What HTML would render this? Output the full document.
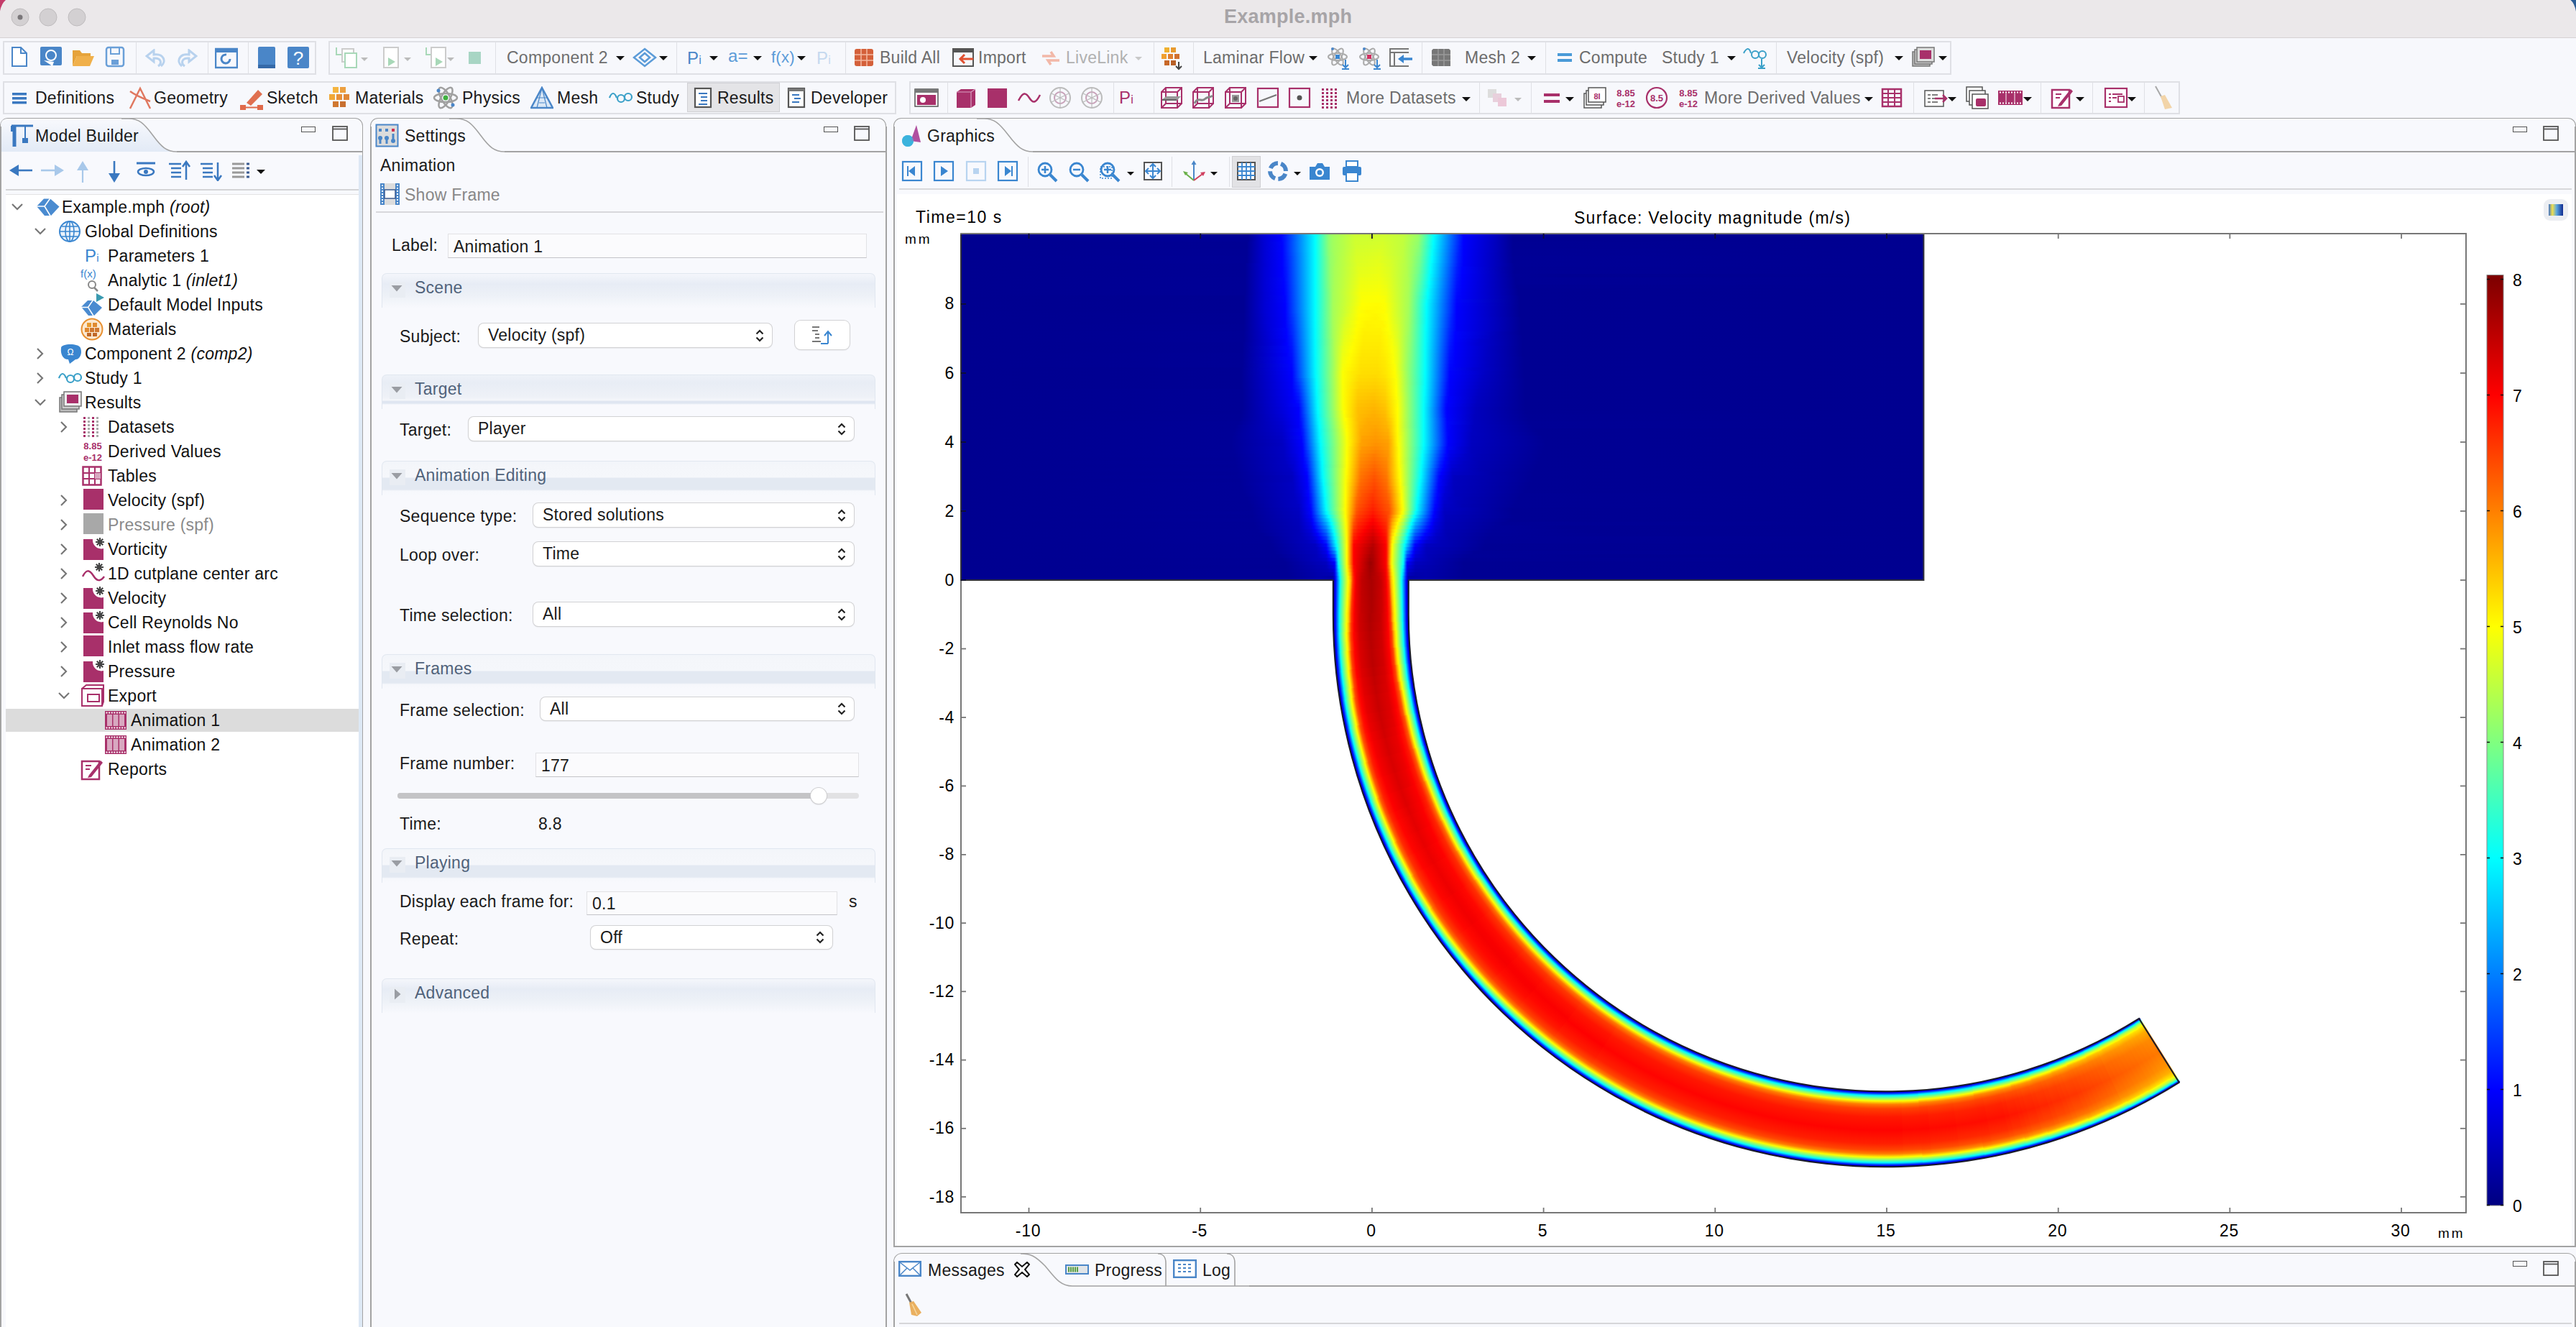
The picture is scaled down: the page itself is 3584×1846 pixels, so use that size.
<!DOCTYPE html><html><head><meta charset="utf-8"><style>*{margin:0;padding:0}
html,body{width:3584px;height:1846px;overflow:hidden;background:#f7f8fc;}
body{position:relative;font-family:"Liberation Sans",sans-serif;}
.a{position:absolute;display:block}
.t{position:absolute;white-space:nowrap;font-family:"Liberation Sans",sans-serif;color:#1a1a1a;letter-spacing:0.25px}
i{font-style:italic}
</style></head><body>
<div class="a" style="left:0px;top:0px;width:3584px;height:52px;background:#ebe8ea;"></div>
<div class="a" style="left:0px;top:52px;width:3584px;height:1px;background:#d5d2d4;"></div>
<svg class="a" style="left:0px;top:0px" width="20" height="20" viewBox="0 0 20 20"><path d="M0 0 L8 0 Q2 5 0 15.5 Z" fill="#c43c6a"/></svg>
<svg class="a" style="left:3564px;top:0px" width="20" height="20" viewBox="0 0 20 20"><path d="M20 0 L12.4 0 Q18 4.5 20 16 Z" fill="#2c5d95"/></svg>
<svg class="a" style="left:15px;top:11px" width="26" height="26" viewBox="0 0 26 26"><circle cx="13" cy="13" r="12" fill="#d3d0d2" stroke="#bfbcbe" stroke-width="1"/><circle cx="13" cy="13" r="3.5" fill="#7a777a"/></svg>
<svg class="a" style="left:54px;top:11px" width="26" height="26" viewBox="0 0 26 26"><circle cx="13" cy="13" r="12" fill="#d3d0d2" stroke="#bfbcbe" stroke-width="1"/></svg>
<svg class="a" style="left:94px;top:11px" width="26" height="26" viewBox="0 0 26 26"><circle cx="13" cy="13" r="12" fill="#d3d0d2" stroke="#bfbcbe" stroke-width="1"/></svg>
<div class="t" style="left:1703px;top:9.5px;font-size:27px;line-height:27px;color:#a7a4a7;font-weight:700;">Example.mph</div>
<div class="a" style="left:4px;top:57px;width:436px;height:47px;border:2px solid #dfe0e5;box-sizing:border-box;"></div>
<div class="a" style="left:457px;top:57px;width:2258px;height:47px;border:2px solid #dfe0e5;box-sizing:border-box;"></div>
<div class="a" style="left:189px;top:59px;width:1px;height:43px;background:#dfe0e5;"></div>
<div class="a" style="left:289px;top:59px;width:1px;height:43px;background:#dfe0e5;"></div>
<div class="a" style="left:345px;top:59px;width:1px;height:43px;background:#dfe0e5;"></div>
<div class="a" style="left:689px;top:59px;width:1px;height:43px;background:#dfe0e5;"></div>
<div class="a" style="left:941px;top:59px;width:1px;height:43px;background:#dfe0e5;"></div>
<div class="a" style="left:1176px;top:59px;width:1px;height:43px;background:#dfe0e5;"></div>
<div class="a" style="left:1605px;top:59px;width:1px;height:43px;background:#dfe0e5;"></div>
<div class="a" style="left:1660px;top:59px;width:1px;height:43px;background:#dfe0e5;"></div>
<div class="a" style="left:1978px;top:59px;width:1px;height:43px;background:#dfe0e5;"></div>
<div class="a" style="left:2150px;top:59px;width:1px;height:43px;background:#dfe0e5;"></div>
<div class="a" style="left:2471px;top:59px;width:1px;height:43px;background:#dfe0e5;"></div>
<svg class="a" style="left:14px;top:64px" width="26" height="30" viewBox="0 0 26 30"><path d="M3 2 H15 L23 10 V28 H3 Z" fill="#fff" stroke="#4a86c8" stroke-width="2"/><path d="M15 2 V10 H23" fill="none" stroke="#4a86c8" stroke-width="2"/></svg>
<svg class="a" style="left:55px;top:64px" width="32" height="30" viewBox="0 0 32 30"><rect x="1" y="1" width="30" height="26" rx="2" fill="#4a86c8"/><circle cx="16" cy="13" r="7" fill="none" stroke="#fff" stroke-width="2"/><path d="M6 20 L18 28 L20 22" fill="#fff"/></svg>
<svg class="a" style="left:100px;top:66px" width="32" height="28" viewBox="0 0 32 28"><path d="M1 4 H11 L14 8 H26 V12 H7 L1 26 Z" fill="#e6a33a"/><path d="M7 12 H31 L25 26 H1 Z" fill="#f0b04a"/></svg>
<svg class="a" style="left:146px;top:64px" width="28" height="30" viewBox="0 0 28 30"><rect x="2" y="2" width="24" height="26" rx="3" fill="none" stroke="#6a9fd8" stroke-width="2.5"/><rect x="8" y="2" width="12" height="9" fill="none" stroke="#6a9fd8" stroke-width="2"/><rect x="9" y="19" width="10" height="7" fill="#6a9fd8"/></svg>
<svg class="a" style="left:202px;top:68px" width="30" height="26" viewBox="0 0 30 26"><path d="M22 24 C30 18 26 6 12 8 L12 2 L2 10 L12 18 L12 13 C22 12 24 20 18 24" fill="none" stroke="#b8d2ee" stroke-width="3"/></svg>
<svg class="a" style="left:245px;top:68px" width="30" height="26" viewBox="0 0 30 26"><path d="M8 24 C0 18 4 6 18 8 L18 2 L28 10 L18 18 L18 13 C8 12 6 20 12 24" fill="none" stroke="#b8d2ee" stroke-width="3"/></svg>
<svg class="a" style="left:299px;top:66px" width="32" height="30" viewBox="0 0 32 30"><rect x="1" y="2" width="30" height="26" fill="none" stroke="#4a86c8" stroke-width="2.5"/><rect x="1" y="2" width="30" height="5" fill="#4a86c8"/><path d="M21 16 A6 6 0 1 1 16 10" fill="none" stroke="#4a86c8" stroke-width="3"/></svg>
<svg class="a" style="left:357px;top:64px" width="28" height="32" viewBox="0 0 28 32"><rect x="2" y="1" width="24" height="30" rx="2" fill="#4a86c8"/><rect x="2" y="26" width="24" height="5" fill="#3569a8"/></svg>
<svg class="a" style="left:399px;top:64px" width="32" height="32" viewBox="0 0 32 32"><rect x="1" y="1" width="30" height="30" rx="2" fill="#4a86c8"/><text x="16" y="26" font-size="26" font-family="Liberation Sans" fill="#fff" text-anchor="middle">?</text></svg>
<svg class="a" style="left:464px;top:64px" width="36" height="32" viewBox="0 0 36 32"><path d="M4 2 V12 H12" fill="none" stroke="#a8d8b8" stroke-width="2"/><rect x="12" y="4" width="16" height="18" fill="#fff" stroke="#ccc" stroke-width="2"/><rect x="16" y="10" width="16" height="20" fill="#fff" stroke="#a8d8b8" stroke-width="2"/></svg>
<svg class="a" style="left:502px;top:78.5px" width="10" height="7" viewBox="0 0 10 7"><path d="M0 1 L10 1 L5 6 Z" fill="#bbb"/></svg>
<svg class="a" style="left:532px;top:64px" width="26" height="32" viewBox="0 0 26 32"><rect x="2" y="2" width="20" height="28" fill="#fff" stroke="#ccc" stroke-width="2"/><path d="M8 16 L18 22 L8 28 Z" fill="#a8d8b8"/></svg>
<svg class="a" style="left:562px;top:78.5px" width="10" height="7" viewBox="0 0 10 7"><path d="M0 1 L10 1 L5 6 Z" fill="#bbb"/></svg>
<svg class="a" style="left:590px;top:64px" width="34" height="32" viewBox="0 0 34 32"><path d="M3 2 V12 H10" fill="none" stroke="#a8d8b8" stroke-width="2"/><rect x="10" y="2" width="20" height="28" fill="#fff" stroke="#ccc" stroke-width="2"/><path d="M16 16 L26 22 L16 28 Z" fill="#a8d8b8"/></svg>
<svg class="a" style="left:622px;top:78.5px" width="10" height="7" viewBox="0 0 10 7"><path d="M0 1 L10 1 L5 6 Z" fill="#bbb"/></svg>
<div class="a" style="left:652px;top:72px;width:17px;height:17px;background:#a8d5c4;"></div>
<div class="t" style="left:705px;top:68.5px;font-size:23px;line-height:23px;color:#6e6e6e;">Component 2</div>
<svg class="a" style="left:857px;top:77.0px" width="12" height="8" viewBox="0 0 12 8"><path d="M0 1 L12 1 L6 7 Z" fill="#111"/></svg>
<svg class="a" style="left:880px;top:66px" width="34" height="28" viewBox="0 0 34 28"><path d="M17 2 L32 14 L17 26 L2 14 Z M10 14 L17 8 L24 14 L17 20 Z" fill="none" stroke="#5b9bd8" stroke-width="2.5"/></svg>
<svg class="a" style="left:917px;top:77.0px" width="12" height="8" viewBox="0 0 12 8"><path d="M0 1 L12 1 L6 7 Z" fill="#111"/></svg>
<div class="t" style="left:956px;top:69.0px;font-size:24px;line-height:24px;color:#4a86c8;">P<span style="font-size:16px">i</span></div>
<svg class="a" style="left:987px;top:77.0px" width="12" height="8" viewBox="0 0 12 8"><path d="M0 1 L12 1 L6 7 Z" fill="#111"/></svg>
<div class="t" style="left:1013px;top:66.0px;font-size:24px;line-height:24px;color:#5b9bd8;">a=</div>
<svg class="a" style="left:1048px;top:77.0px" width="12" height="8" viewBox="0 0 12 8"><path d="M0 1 L12 1 L6 7 Z" fill="#111"/></svg>
<div class="t" style="left:1073px;top:69.0px;font-size:22px;line-height:22px;color:#5b9bd8;">f(x)</div>
<svg class="a" style="left:1109px;top:77.0px" width="12" height="8" viewBox="0 0 12 8"><path d="M0 1 L12 1 L6 7 Z" fill="#111"/></svg>
<div class="t" style="left:1136px;top:69.0px;font-size:24px;line-height:24px;color:#c5d9ef;">P<span style="font-size:16px">i</span></div>
<svg class="a" style="left:1188px;top:66px" width="28" height="28" viewBox="0 0 28 28"><rect x="1" y="2" width="26" height="24" rx="3" fill="#d4603a"/><path d="M1 10 H27 M1 18 H27 M10 2 V26 M18 2 V26" stroke="#f4b8a0" stroke-width="1.5"/></svg>
<div class="t" style="left:1224px;top:68.5px;font-size:23px;line-height:23px;color:#6c6c6c;">Build All</div>
<svg class="a" style="left:1324px;top:66px" width="32" height="28" viewBox="0 0 32 28"><rect x="2" y="2" width="28" height="24" fill="none" stroke="#555" stroke-width="2"/><rect x="2" y="2" width="28" height="5" fill="#555"/><path d="M30 16 H12 M18 10 L12 16 L18 22" fill="none" stroke="#e05030" stroke-width="3"/></svg>
<div class="t" style="left:1361px;top:68.5px;font-size:23px;line-height:23px;color:#6c6c6c;">Import</div>
<svg class="a" style="left:1446px;top:68px" width="32" height="26" viewBox="0 0 32 26"><path d="M4 10 H20 L16 4 M28 16 H12 L16 22" fill="none" stroke="#f2b8a8" stroke-width="3.5"/></svg>
<div class="t" style="left:1483px;top:68.5px;font-size:23px;line-height:23px;color:#b0b0b0;">LiveLink</div>
<svg class="a" style="left:1579px;top:77.5px" width="10" height="7" viewBox="0 0 10 7"><path d="M0 1 L10 1 L5 6 Z" fill="#c8c8c8"/></svg>
<svg class="a" style="left:1614px;top:64px" width="32" height="34" viewBox="0 0 32 34"><rect x="6" y="2" width="7" height="7" fill="#f0b030"/><rect x="15" y="2" width="7" height="7" fill="#e89a30"/><rect x="2" y="11" width="7" height="7" fill="#f0a030"/><rect x="11" y="11" width="7" height="7" fill="#e08030"/><rect x="20" y="11" width="7" height="7" fill="#d07030"/><rect x="6" y="20" width="7" height="7" fill="#c86828"/><rect x="15" y="20" width="7" height="7" fill="#b86028"/><path d="M26 22 V32 M22 28 L26 32 L30 28" stroke="#444" stroke-width="2" fill="none"/></svg>
<div class="t" style="left:1674px;top:68.5px;font-size:23px;line-height:23px;color:#6c6c6c;">Laminar Flow</div>
<svg class="a" style="left:1821px;top:77.0px" width="12" height="8" viewBox="0 0 12 8"><path d="M0 1 L12 1 L6 7 Z" fill="#111"/></svg>
<svg class="a" style="left:1846px;top:64px" width="36" height="34" viewBox="0 0 36 34"><ellipse cx="15" cy="15" rx="13" ry="5" fill="none" stroke="#aaa" stroke-width="2"/><ellipse cx="15" cy="15" rx="13" ry="5" transform="rotate(60 15 15)" fill="none" stroke="#aaa" stroke-width="2"/><ellipse cx="15" cy="15" rx="13" ry="5" transform="rotate(-60 15 15)" fill="none" stroke="#aaa" stroke-width="2"/><rect x="12" y="12" width="6" height="6" fill="#3a86d0"/><circle cx="8" cy="4" r="2" fill="#4a86c8"/><path d="M26 19 V30 M22 26 L26 30 L30 26 M21 32 H31" stroke="#3a86d0" stroke-width="2" fill="none"/></svg>
<svg class="a" style="left:1890px;top:64px" width="36" height="34" viewBox="0 0 36 34"><ellipse cx="15" cy="15" rx="13" ry="5" fill="none" stroke="#aaa" stroke-width="2"/><ellipse cx="15" cy="15" rx="13" ry="5" transform="rotate(60 15 15)" fill="none" stroke="#aaa" stroke-width="2"/><ellipse cx="15" cy="15" rx="13" ry="5" transform="rotate(-60 15 15)" fill="none" stroke="#aaa" stroke-width="2"/><rect x="12" y="12" width="6" height="6" fill="#d03060"/><circle cx="8" cy="4" r="2" fill="#4a86c8"/><path d="M26 19 V30 M22 26 L26 30 L30 26 M21 32 H31" stroke="#3a86d0" stroke-width="2" fill="none"/></svg>
<svg class="a" style="left:1932px;top:66px" width="34" height="28" viewBox="0 0 34 28"><path d="M28 2 H2 V26 H28 M2 7 H28 M8 7 V26" fill="none" stroke="#777" stroke-width="2"/><path d="M33 16 H18" stroke="#3a86d0" stroke-width="3.5"/><path d="M13 16 L21 10 V22 Z" fill="#3a86d0"/></svg>
<svg class="a" style="left:1990px;top:66px" width="30" height="28" viewBox="0 0 30 28"><path d="M4 2 H26 L28 4 V26 H4 L2 24 V4 Z" fill="#777"/><path d="M2 10 H28 M2 18 H28 M11 2 V26 M19 2 V26" stroke="#9a9a9a" stroke-width="1.5"/></svg>
<div class="t" style="left:2038px;top:68.5px;font-size:23px;line-height:23px;color:#6c6c6c;">Mesh 2</div>
<svg class="a" style="left:2125px;top:77.0px" width="12" height="8" viewBox="0 0 12 8"><path d="M0 1 L12 1 L6 7 Z" fill="#111"/></svg>
<svg class="a" style="left:2166px;top:72px" width="22" height="16" viewBox="0 0 22 16"><rect x="1" y="2" width="20" height="4" fill="#4a9ad8"/><rect x="1" y="10" width="20" height="4" fill="#4a9ad8"/></svg>
<div class="t" style="left:2197px;top:68.5px;font-size:23px;line-height:23px;color:#6c6c6c;">Compute</div>
<div class="t" style="left:2312px;top:68.5px;font-size:23px;line-height:23px;color:#6c6c6c;">Study 1</div>
<svg class="a" style="left:2403px;top:77.0px" width="12" height="8" viewBox="0 0 12 8"><path d="M0 1 L12 1 L6 7 Z" fill="#111"/></svg>
<svg class="a" style="left:2424px;top:64px" width="36" height="34" viewBox="0 0 36 34"><path d="M2 10 C6 2 10 2 12 10" fill="none" stroke="#3aa0c8" stroke-width="2"/><circle cx="18" cy="12" r="5" fill="none" stroke="#3aa0c8" stroke-width="2"/><circle cx="28" cy="12" r="5" fill="none" stroke="#3aa0c8" stroke-width="2"/><path d="M27 18 V30 M23 26 L27 30 L31 26 M22 31 H32" stroke="#3aa0c8" stroke-width="2" fill="none"/></svg>
<div class="t" style="left:2486px;top:68.5px;font-size:23px;line-height:23px;color:#6c6c6c;">Velocity (spf)</div>
<svg class="a" style="left:2636px;top:77.0px" width="12" height="8" viewBox="0 0 12 8"><path d="M0 1 L12 1 L6 7 Z" fill="#111"/></svg>
<svg class="a" style="left:2659px;top:64px" width="34" height="32" viewBox="0 0 34 32"><rect x="2" y="8" width="24" height="20" fill="#bbb" stroke="#777" stroke-width="1.5"/><rect x="5" y="5" width="24" height="20" fill="#ccc" stroke="#777" stroke-width="1.5"/><rect x="8" y="2" width="24" height="20" fill="#ddd" stroke="#777" stroke-width="1.5"/><rect x="12" y="6" width="16" height="12" fill="#a8306a"/></svg>
<svg class="a" style="left:2697px;top:77.0px" width="12" height="8" viewBox="0 0 12 8"><path d="M0 1 L12 1 L6 7 Z" fill="#111"/></svg>
<div class="a" style="left:4px;top:113px;width:1243px;height:46px;border:2px solid #dfe0e5;box-sizing:border-box;"></div>
<div class="a" style="left:1265px;top:113px;width:1768px;height:46px;border:2px solid #dfe0e5;box-sizing:border-box;"></div>
<div class="a" style="left:956px;top:115px;width:129px;height:41px;background:#e4e4e7;border:1px solid #d0d0d4;box-sizing:border-box;"></div>
<div class="a" style="left:1318px;top:115px;width:1px;height:42px;background:#dfe0e5;"></div>
<div class="a" style="left:1549px;top:115px;width:1px;height:42px;background:#dfe0e5;"></div>
<div class="a" style="left:1605px;top:115px;width:1px;height:42px;background:#dfe0e5;"></div>
<div class="a" style="left:2058px;top:115px;width:1px;height:42px;background:#dfe0e5;"></div>
<div class="a" style="left:2130px;top:115px;width:1px;height:42px;background:#dfe0e5;"></div>
<div class="a" style="left:2662px;top:115px;width:1px;height:42px;background:#dfe0e5;"></div>
<div class="a" style="left:2839px;top:115px;width:1px;height:42px;background:#dfe0e5;"></div>
<div class="a" style="left:2911px;top:115px;width:1px;height:42px;background:#dfe0e5;"></div>
<div class="a" style="left:2983px;top:115px;width:1px;height:42px;background:#dfe0e5;"></div>
<svg class="a" style="left:15px;top:124px" width="24" height="24" viewBox="0 0 24 24"><rect x="2" y="5" width="20" height="3.5" fill="#3a78c0"/><rect x="2" y="11" width="20" height="3.5" fill="#3a78c0"/><rect x="2" y="17" width="20" height="3.5" fill="#3a78c0"/></svg>
<div class="t" style="left:49px;top:124.5px;font-size:23px;line-height:23px;">Definitions</div>
<svg class="a" style="left:179px;top:119px" width="32" height="34" viewBox="0 0 32 34"><path d="M2 32 L16 4 L30 32 M2 8 C10 14 20 18 30 22" fill="none" stroke="#e07860" stroke-width="2.5"/></svg>
<div class="t" style="left:214px;top:124.5px;font-size:23px;line-height:23px;">Geometry</div>
<svg class="a" style="left:333px;top:119px" width="34" height="34" viewBox="0 0 34 34"><path d="M10 24 L26 6 L32 12 L16 28 Z" fill="#e07050"/><rect x="1" y="27" width="8" height="7" fill="#e06a4a"/><rect x="25" y="27" width="8" height="7" fill="#e06a4a"/><path d="M9 30.5 H25" stroke="#e06a4a" stroke-width="2"/></svg>
<div class="t" style="left:371px;top:124.5px;font-size:23px;line-height:23px;">Sketch</div>
<svg class="a" style="left:457px;top:120px" width="32" height="32" viewBox="0 0 32 32"><rect x="6" y="1" width="8" height="8" fill="#f5b540"/><rect x="16" y="1" width="8" height="8" fill="#eda040"/><rect x="1" y="11" width="8" height="8" fill="#f0a838"/><rect x="11" y="11" width="8" height="8" fill="#e89038"/><rect x="21" y="11" width="8" height="8" fill="#e08838"/><rect x="6" y="21" width="8" height="8" fill="#d07830"/><rect x="16" y="21" width="8" height="8" fill="#c87030"/></svg>
<div class="t" style="left:494px;top:124.5px;font-size:23px;line-height:23px;">Materials</div>
<svg class="a" style="left:602px;top:118px" width="36" height="36" viewBox="0 0 36 36"><ellipse cx="18" cy="18" rx="16" ry="6" fill="none" stroke="#a0a0a0" stroke-width="2.5"/><ellipse cx="18" cy="18" rx="16" ry="6" transform="rotate(60 18 18)" fill="none" stroke="#a0a0a0" stroke-width="2.5"/><ellipse cx="18" cy="18" rx="16" ry="6" transform="rotate(-60 18 18)" fill="none" stroke="#a0a0a0" stroke-width="2.5"/><circle cx="18" cy="18" r="3.5" fill="#40b040"/><circle cx="8" cy="8" r="2.5" fill="#4a86c8"/><circle cx="28" cy="28" r="2.5" fill="#4a86c8"/></svg>
<div class="t" style="left:643px;top:124.5px;font-size:23px;line-height:23px;">Physics</div>
<svg class="a" style="left:738px;top:120px" width="32" height="32" viewBox="0 0 32 32"><path d="M16 2 L31 30 H1 Z" fill="#dbe8f6" stroke="#4a86c8" stroke-width="2.5"/><path d="M8.5 16 H23.5 M12 23 L20 23 M16 2 L9 30 M16 2 L23 30" stroke="#4a86c8" stroke-width="1.2" fill="none"/></svg>
<div class="t" style="left:775px;top:124.5px;font-size:23px;line-height:23px;">Mesh</div>
<svg class="a" style="left:847px;top:124px" width="34" height="24" viewBox="0 0 34 24"><path d="M1 12 C4 4 8 4 11 12" fill="none" stroke="#3aa0c8" stroke-width="2.2"/><circle cx="17" cy="13" r="5" fill="none" stroke="#3aa0c8" stroke-width="2.2"/><circle cx="27" cy="11" r="5" fill="none" stroke="#3aa0c8" stroke-width="2.2"/></svg>
<div class="t" style="left:885px;top:124.5px;font-size:23px;line-height:23px;">Study</div>
<svg class="a" style="left:965px;top:121px" width="26" height="30" viewBox="0 0 26 30"><rect x="2" y="2" width="22" height="26" fill="#fff" stroke="#555" stroke-width="2.2"/><path d="M7 9 H19 M10 14 H19 M10 19 H19 M7 24 H19" stroke="#3a78c0" stroke-width="2"/></svg>
<div class="t" style="left:998px;top:124.5px;font-size:23px;line-height:23px;">Results</div>
<svg class="a" style="left:1095px;top:121px" width="26" height="30" viewBox="0 0 26 30"><rect x="2" y="2" width="22" height="26" fill="#fff" stroke="#555" stroke-width="2.2"/><rect x="2" y="2" width="22" height="4" fill="#777"/><path d="M7 11 H17 M10 16 H19 M7 21 H17" stroke="#3a78c0" stroke-width="2"/></svg>
<div class="t" style="left:1128px;top:124.5px;font-size:23px;line-height:23px;">Developer</div>
<svg class="a" style="left:1272px;top:122px" width="34" height="28" viewBox="0 0 34 28"><rect x="1" y="2" width="32" height="24" fill="#fff" stroke="#555" stroke-width="1.5"/><rect x="1" y="2" width="32" height="5" fill="#777"/><rect x="4" y="10" width="26" height="14" fill="#a8306a"/><circle cx="12" cy="17" r="4" fill="#fff"/></svg>
<svg class="a" style="left:1329px;top:122px" width="30" height="30" viewBox="0 0 30 30"><path d="M2 6 L8 2 H28 V24 L22 28 H2 Z" fill="#a8306a"/><path d="M2 6 H22 V28 M22 6 L28 2" stroke="#d8a0c0" stroke-width="1.2" fill="none"/></svg>
<div class="a" style="left:1374px;top:123px;width:27px;height:27px;background:#a8306a;"></div>
<svg class="a" style="left:1415px;top:126px" width="34" height="20" viewBox="0 0 34 20"><path d="M2 14 C8 2 12 2 17 10 C22 18 26 18 32 6" fill="none" stroke="#a8306a" stroke-width="2.5"/></svg>
<svg class="a" style="left:1459px;top:120px" width="32" height="32" viewBox="0 0 32 32"><circle cx="16" cy="16" r="14" fill="none" stroke="#bbb" stroke-width="2"/><circle cx="16" cy="16" r="8" fill="none" stroke="#c8a0b8" stroke-width="2"/><path d="M4 10 L28 22 M4 22 L28 10 M16 2 V30" stroke="#bbb" stroke-width="1.2"/></svg>
<svg class="a" style="left:1503px;top:120px" width="32" height="32" viewBox="0 0 32 32"><circle cx="16" cy="16" r="14" fill="none" stroke="#bbb" stroke-width="2"/><circle cx="16" cy="16" r="8" fill="none" stroke="#c8a0b8" stroke-width="2"/><path d="M4 10 L28 22 M4 22 L28 10 M16 2 V30" stroke="#bbb" stroke-width="1.2"/></svg>
<div class="t" style="left:1557px;top:124.0px;font-size:24px;line-height:24px;color:#a8306a;">P<span style="font-size:16px">i</span></div>
<svg class="a" style="left:1614px;top:120px" width="32" height="32" viewBox="0 0 32 32"><path d="M2 8 H24 V30 H2 Z M8 2 H30 V24 H8 Z M2 8 L8 2 M24 8 L30 2 M24 30 L30 24 M2 30 L8 24" fill="none" stroke="#a8306a" stroke-width="2"/><path d="M3 18 L9 14 H29 L23 20 H3 Z" fill="#999"/><path d="M3 19 H23" stroke="#555" stroke-width="1.5"/></svg>
<svg class="a" style="left:1658px;top:120px" width="32" height="32" viewBox="0 0 32 32"><path d="M2 8 H24 V30 H2 Z M8 2 H30 V24 H8 Z M2 8 L8 2 M24 8 L30 2 M24 30 L30 24 M2 30 L8 24" fill="none" stroke="#a8306a" stroke-width="2"/><path d="M4 24 C8 14 14 22 18 18 C22 14 26 16 29 13" fill="none" stroke="#888" stroke-width="3"/></svg>
<svg class="a" style="left:1703px;top:120px" width="32" height="32" viewBox="0 0 32 32"><path d="M2 8 H24 V30 H2 Z M8 2 H30 V24 H8 Z M2 8 L8 2 M24 8 L30 2 M24 30 L30 24 M2 30 L8 24" fill="none" stroke="#a8306a" stroke-width="2"/><rect x="11" y="12" width="10" height="10" fill="#999"/><circle cx="16" cy="17" r="3" fill="#666"/></svg>
<svg class="a" style="left:1748px;top:121px" width="32" height="30" viewBox="0 0 32 30"><rect x="2" y="2" width="28" height="26" fill="none" stroke="#a8306a" stroke-width="2.2"/><path d="M4 20 L28 11" stroke="#777" stroke-width="2.2"/></svg>
<svg class="a" style="left:1792px;top:121px" width="32" height="30" viewBox="0 0 32 30"><rect x="2" y="2" width="28" height="26" fill="none" stroke="#a8306a" stroke-width="2.2"/><circle cx="16" cy="15" r="3.5" fill="#555"/></svg>
<svg class="a" style="left:1836px;top:121px" width="30" height="30" viewBox="0 0 30 30"><rect x="3" y="2" width="3" height="3" fill="#a8306a"/><rect x="3" y="7" width="3" height="3" fill="#a8306a"/><rect x="3" y="12" width="3" height="3" fill="#a8306a"/><rect x="3" y="17" width="3" height="3" fill="#a8306a"/><rect x="3" y="22" width="3" height="3" fill="#a8306a"/><rect x="3" y="27" width="3" height="3" fill="#a8306a"/><rect x="9" y="2" width="3" height="3" fill="#a8306a"/><rect x="9" y="7" width="3" height="3" fill="#a8306a"/><rect x="9" y="12" width="3" height="3" fill="#a8306a"/><rect x="9" y="17" width="3" height="3" fill="#a8306a"/><rect x="9" y="22" width="3" height="3" fill="#a8306a"/><rect x="9" y="27" width="3" height="3" fill="#a8306a"/><rect x="15" y="2" width="3" height="3" fill="#a8306a"/><rect x="15" y="7" width="3" height="3" fill="#a8306a"/><rect x="15" y="12" width="3" height="3" fill="#a8306a"/><rect x="15" y="17" width="3" height="3" fill="#a8306a"/><rect x="15" y="22" width="3" height="3" fill="#a8306a"/><rect x="15" y="27" width="3" height="3" fill="#a8306a"/><rect x="21" y="2" width="3" height="3" fill="#a8306a"/><rect x="21" y="7" width="3" height="3" fill="#a8306a"/><rect x="21" y="12" width="3" height="3" fill="#a8306a"/><rect x="21" y="17" width="3" height="3" fill="#a8306a"/><rect x="21" y="22" width="3" height="3" fill="#a8306a"/><rect x="21" y="27" width="3" height="3" fill="#a8306a"/></svg>
<div class="t" style="left:1873px;top:124.5px;font-size:23px;line-height:23px;color:#6c6c6c;">More Datasets</div>
<svg class="a" style="left:2034px;top:134.0px" width="12" height="8" viewBox="0 0 12 8"><path d="M0 1 L12 1 L6 7 Z" fill="#111"/></svg>
<svg class="a" style="left:2068px;top:122px" width="30" height="28" viewBox="0 0 30 28"><rect x="2" y="2" width="12" height="12" fill="#ddd"/><rect x="9" y="8" width="12" height="12" fill="#e8d0dc"/><rect x="16" y="14" width="12" height="12" fill="#ecc8d8"/></svg>
<svg class="a" style="left:2107px;top:134.5px" width="10" height="7" viewBox="0 0 10 7"><path d="M0 1 L10 1 L5 6 Z" fill="#bbb"/></svg>
<svg class="a" style="left:2147px;top:128px" width="24" height="18" viewBox="0 0 24 18"><rect x="1" y="2" width="22" height="4" fill="#a8306a"/><rect x="1" y="11" width="22" height="4" fill="#a8306a"/></svg>
<svg class="a" style="left:2178px;top:134.0px" width="12" height="8" viewBox="0 0 12 8"><path d="M0 1 L12 1 L6 7 Z" fill="#111"/></svg>
<svg class="a" style="left:2202px;top:120px" width="34" height="32" viewBox="0 0 34 32"><rect x="2" y="10" width="24" height="20" fill="#fff" stroke="#555" stroke-width="1.5"/><rect x="5" y="6" width="24" height="20" fill="#fff" stroke="#555" stroke-width="1.5"/><rect x="8" y="2" width="24" height="20" fill="#fff" stroke="#555" stroke-width="1.5"/><text x="20" y="18" font-size="11" font-family="Liberation Sans" font-weight="bold" fill="#a8306a" text-anchor="middle">8I</text></svg>
<svg class="a" style="left:2245px;top:121px" width="34" height="30" viewBox="0 0 34 30"><text x="17" y="13" font-size="13" font-family="Liberation Sans" font-weight="bold" fill="#a8306a" text-anchor="middle">8.85</text><text x="17" y="28" font-size="13" font-family="Liberation Sans" font-weight="bold" fill="#a8306a" text-anchor="middle">e-12</text></svg>
<svg class="a" style="left:2289px;top:120px" width="32" height="32" viewBox="0 0 32 32"><circle cx="16" cy="16" r="14" fill="none" stroke="#a8306a" stroke-width="2.2"/><text x="16" y="21" font-size="13" font-family="Liberation Sans" font-weight="bold" fill="#a8306a" text-anchor="middle">8.5</text></svg>
<svg class="a" style="left:2332px;top:121px" width="34" height="30" viewBox="0 0 34 30"><text x="17" y="13" font-size="13" font-family="Liberation Sans" font-weight="bold" fill="#a8306a" text-anchor="middle">8.85</text><text x="17" y="28" font-size="13" font-family="Liberation Sans" font-weight="bold" fill="#a8306a" text-anchor="middle">e-12</text></svg>
<div class="t" style="left:2371px;top:124.5px;font-size:23px;line-height:23px;color:#6c6c6c;">More Derived Values</div>
<svg class="a" style="left:2594px;top:134.0px" width="12" height="8" viewBox="0 0 12 8"><path d="M0 1 L12 1 L6 7 Z" fill="#111"/></svg>
<svg class="a" style="left:2617px;top:122px" width="30" height="28" viewBox="0 0 30 28"><rect x="2" y="2" width="26" height="24" fill="none" stroke="#a8306a" stroke-width="2.5"/><path d="M2 8 H28 M2 14 H28 M2 20 H28 M10 2 V26 M19 2 V26" stroke="#a8306a" stroke-width="2"/></svg>
<svg class="a" style="left:2676px;top:122px" width="34" height="28" viewBox="0 0 34 28"><rect x="2" y="4" width="26" height="22" fill="#fff" stroke="#555" stroke-width="1.5"/><path d="M6 10 H10 M6 15 H10 M6 20 H10 M12 10 H20 M12 15 H18 M12 20 H20" stroke="#555" stroke-width="1.5"/><path d="M16 15 H32 M27 10 L32 15 L27 20" stroke="#a8306a" stroke-width="2.5" fill="none"/></svg>
<svg class="a" style="left:2710px;top:134.0px" width="12" height="8" viewBox="0 0 12 8"><path d="M0 1 L12 1 L6 7 Z" fill="#111"/></svg>
<svg class="a" style="left:2734px;top:119px" width="34" height="34" viewBox="0 0 34 34"><rect x="2" y="2" width="22" height="20" fill="#fff" stroke="#555" stroke-width="1.5"/><rect x="6" y="7" width="22" height="20" fill="#fff" stroke="#555" stroke-width="1.5"/><rect x="10" y="12" width="22" height="20" fill="#fff" stroke="#555" stroke-width="1.5"/><rect x="15" y="18" width="14" height="11" rx="2" fill="#a8306a"/></svg>
<svg class="a" style="left:2779px;top:124px" width="36" height="24" viewBox="0 0 36 24"><rect x="1" y="2" width="34" height="20" fill="#a8306a"/><rect x="3" y="3.5" width="2" height="2" fill="#fff"/><rect x="3" y="18.5" width="2" height="2" fill="#fff"/><rect x="7" y="3.5" width="2" height="2" fill="#fff"/><rect x="7" y="18.5" width="2" height="2" fill="#fff"/><rect x="11" y="3.5" width="2" height="2" fill="#fff"/><rect x="11" y="18.5" width="2" height="2" fill="#fff"/><rect x="15" y="3.5" width="2" height="2" fill="#fff"/><rect x="15" y="18.5" width="2" height="2" fill="#fff"/><rect x="19" y="3.5" width="2" height="2" fill="#fff"/><rect x="19" y="18.5" width="2" height="2" fill="#fff"/><rect x="23" y="3.5" width="2" height="2" fill="#fff"/><rect x="23" y="18.5" width="2" height="2" fill="#fff"/><rect x="27" y="3.5" width="2" height="2" fill="#fff"/><rect x="27" y="18.5" width="2" height="2" fill="#fff"/><rect x="31" y="3.5" width="2" height="2" fill="#fff"/><rect x="31" y="18.5" width="2" height="2" fill="#fff"/><path d="M12 6 V18 M24 6 V18" stroke="#e0b0c8" stroke-width="1.5"/></svg>
<svg class="a" style="left:2815px;top:134.0px" width="12" height="8" viewBox="0 0 12 8"><path d="M0 1 L12 1 L6 7 Z" fill="#111"/></svg>
<svg class="a" style="left:2853px;top:120px" width="32" height="32" viewBox="0 0 32 32"><rect x="2" y="5" width="24" height="25" fill="#fff" stroke="#a8306a" stroke-width="2.5"/><path d="M7 11 H15 M7 16 H13" stroke="#a8306a" stroke-width="2"/><path d="M12 24 L28 4 L31 7 L15 27 L10 28 Z" fill="#a8306a"/></svg>
<svg class="a" style="left:2888px;top:134.0px" width="12" height="8" viewBox="0 0 12 8"><path d="M0 1 L12 1 L6 7 Z" fill="#111"/></svg>
<svg class="a" style="left:2927px;top:121px" width="34" height="30" viewBox="0 0 34 30"><rect x="2" y="2" width="30" height="26" fill="#fff" stroke="#a8306a" stroke-width="2.2"/><path d="M7 10 H10 M7 15 H10 M7 20 H10 M12 10 H26 M12 15 H18" stroke="#a8306a" stroke-width="1.8"/><rect x="20" y="13" width="8" height="8" fill="none" stroke="#a8306a" stroke-width="1.8"/></svg>
<svg class="a" style="left:2960px;top:134.0px" width="12" height="8" viewBox="0 0 12 8"><path d="M0 1 L12 1 L6 7 Z" fill="#111"/></svg>
<svg class="a" style="left:2994px;top:118px" width="30" height="36" viewBox="0 0 30 36"><path d="M5 2 L15 20" stroke="#a8a8a8" stroke-width="2"/><path d="M12 16 L18 14 L28 32 L18 34 Z" fill="#f2d4a8"/></svg>
<div class="a" style="left:0px;top:164px;width:505px;height:1682px;background:#f8f9fd;border:1px solid #a3a3a3;border-bottom:none;border-radius:11px 11px 0 0;box-sizing:border-box;"></div>
<svg class="a" style="left:0px;top:164px" width="286" height="48" viewBox="0 0 286 48"><defs><linearGradient id="tg0" x1="0" y1="0" x2="0" y2="1"><stop offset="0" stop-color="#f8f9fd"/><stop offset="1" stop-color="#e2eaf6"/></linearGradient></defs><path d="M1 11 Q1 1 11 1 L179 1 C193 1 200 7 212.5 24 C225 41 232 47 246 47 L1 47 Z" fill="url(#tg0)"/></svg>
<svg class="a" style="left:0px;top:164px" width="286" height="48" viewBox="0 0 286 48"><path d="M169 1 L179 1 C193 1 200 7 212.5 24 C225 41 232 47 246 47" fill="none" stroke="#a3a3a3" stroke-width="1.6"/></svg>
<div class="a" style="left:246px;top:210.2px;width:259px;height:1.6px;background:#a3a3a3;"></div>
<svg class="a" style="left:13px;top:172px" width="36" height="34" viewBox="0 0 36 34"><path d="M3 3 H33" stroke="#3a78c0" stroke-width="3"/><path d="M7 2 V32" stroke="#3a78c0" stroke-width="5"/><path d="M22 3 V20" stroke="#3a78c0" stroke-width="2"/><rect x="18" y="20" width="8" height="7" fill="#3a78c0"/><rect x="2" y="3" width="3" height="8" fill="#3a78c0"/></svg>
<div class="t" style="left:49px;top:177.5px;font-size:23px;line-height:23px;">Model Builder</div>
<div class="a" style="left:419px;top:176px;width:20px;height:7.5px;border:1.8px solid #555;box-sizing:border-box;"></div>
<svg class="a" style="left:462px;top:175px" width="22" height="22" viewBox="0 0 22 22"><rect x="1" y="1" width="20" height="19" fill="none" stroke="#555" stroke-width="1.8"/><path d="M1 4.5 H21" stroke="#555" stroke-width="1.8"/></svg>
<div class="a" style="left:499px;top:216px;width:5px;height:1630px;background:#dde8f5;"></div>
<svg class="a" style="left:12px;top:226px" width="34" height="22" viewBox="0 0 34 22"><path d="M12 11 H33" stroke="#3a78c0" stroke-width="2.6"/><path d="M1 11 L14 3 L14 19 Z" fill="#3a78c0"/></svg>
<svg class="a" style="left:56px;top:226px" width="34" height="22" viewBox="0 0 34 22"><path d="M1 11 H22" stroke="#a8c8ea" stroke-width="2.6"/><path d="M33 11 L20 3 L20 19 Z" fill="#a8c8ea"/></svg>
<svg class="a" style="left:104px;top:223px" width="22" height="32" viewBox="0 0 22 32"><path d="M11 31 V10" stroke="#a8c8ea" stroke-width="2.2"/><path d="M11 1 L3 14 L19 14 Z" fill="#a8c8ea"/></svg>
<svg class="a" style="left:148px;top:223px" width="22" height="32" viewBox="0 0 22 32"><path d="M11 1 V22" stroke="#3a78c0" stroke-width="2.6"/><path d="M11 31 L3 18 L19 18 Z" fill="#3a78c0"/></svg>
<svg class="a" style="left:188px;top:224px" width="30" height="26" viewBox="0 0 30 26"><path d="M2 3 H28" stroke="#3a78c0" stroke-width="3"/><ellipse cx="15" cy="15" rx="11" ry="5" fill="none" stroke="#3a78c0" stroke-width="2.5"/><circle cx="15" cy="15" r="3" fill="#3a78c0"/></svg>
<svg class="a" style="left:232px;top:222px" width="34" height="30" viewBox="0 0 34 30"><path d="M3 6 H20 M6 12 H20 M6 18 H20 M6 24 H20" stroke="#3a78c0" stroke-width="2.5"/><path d="M27 28 V4 M22 10 L27 3 L32 10" fill="none" stroke="#3a78c0" stroke-width="2.5"/></svg>
<svg class="a" style="left:276px;top:222px" width="34" height="30" viewBox="0 0 34 30"><path d="M3 6 H20 M6 12 H20 M6 18 H20 M6 24 H20" stroke="#3a78c0" stroke-width="2.5"/><path d="M27 4 V28 M22 22 L27 29 L32 22" fill="none" stroke="#3a78c0" stroke-width="2.5"/></svg>
<svg class="a" style="left:322px;top:224px" width="26" height="28" viewBox="0 0 26 28"><path d="M1 4 H18 M1 10 H18 M1 16 H18 M1 22 H18" stroke="#999" stroke-width="3"/><path d="M21 4 H25 M21 10 H25 M21 16 H25 M21 22 H25" stroke="#3a5a90" stroke-width="3"/></svg>
<svg class="a" style="left:357px;top:235.0px" width="12" height="8" viewBox="0 0 12 8"><path d="M0 1 L12 1 L6 7 Z" fill="#111"/></svg>
<div class="a" style="left:8px;top:263px;width:491px;height:2px;background:#d4d4d6;"></div>
<div class="a" style="left:8px;top:270px;width:491px;height:1576px;background:#ffffff;border-top:1px solid #e3e3e3;box-sizing:border-box;"></div>
<div class="a" style="left:0px;top:176px;width:1.5px;height:1670px;background:#a3a3a3;"></div>
<div class="a" style="left:8px;top:986px;width:491px;height:32px;background:#dcdcdc;"></div>
<svg class="a" style="left:15px;top:282px" width="18" height="12" viewBox="0 0 18 12"><path d="M2 2 L9 9 L16 2" fill="none" stroke="#777" stroke-width="2.2"/></svg>
<svg class="a" style="left:50px;top:274px" width="34" height="28" viewBox="0 0 34 28"><path d="M1 13 L11 2.5 H20 L32.5 13.5 L21 26 H12 Z" fill="#4a8bd0"/><path d="M20.5 1 L12 13 L20.5 27 M0 13 H12" fill="none" stroke="#fff" stroke-width="1.6"/></svg>
<div class="t" style="left:86px;top:276.5px;font-size:23px;line-height:23px;color:#111;">Example.mph <i>(root)</i></div>
<svg class="a" style="left:47px;top:316px" width="18" height="12" viewBox="0 0 18 12"><path d="M2 2 L9 9 L16 2" fill="none" stroke="#777" stroke-width="2.2"/></svg>
<svg class="a" style="left:81px;top:306px" width="32" height="32" viewBox="0 0 32 32"><circle cx="16" cy="16" r="14" fill="#eaf2fb" stroke="#3a86d0" stroke-width="2"/><ellipse cx="16" cy="16" rx="6" ry="14" fill="none" stroke="#3a86d0" stroke-width="1.6"/><path d="M2 16 H30 M5 9 H27 M5 23 H27 M16 2 V30" stroke="#3a86d0" stroke-width="1.6"/></svg>
<div class="t" style="left:118px;top:310.5px;font-size:23px;line-height:23px;color:#111;">Global Definitions</div>
<div class="t" style="left:118px;top:344.0px;font-size:24px;line-height:24px;color:#3a86d0;">P<span style="font-size:15px;">i</span></div>
<div class="t" style="left:150px;top:344.5px;font-size:23px;line-height:23px;color:#111;">Parameters 1</div>
<svg class="a" style="left:112px;top:372px" width="34" height="36" viewBox="0 0 34 36"><text x="0" y="14" font-size="15" font-family="Liberation Sans" fill="#3a86d0">f(x)</text><circle cx="16" cy="24" r="5" fill="none" stroke="#888" stroke-width="2"/><path d="M19 28 L24 33" stroke="#888" stroke-width="2.5"/></svg>
<div class="t" style="left:150px;top:378.5px;font-size:23px;line-height:23px;color:#111;">Analytic 1 <i>(inlet1)</i></div>
<svg class="a" style="left:112px;top:406px" width="36" height="36" viewBox="0 0 36 36"><path d="M1 21 L10 12 H18 L30 22 L19 33 H11 Z" fill="#4a8bd0"/><path d="M18.5 10 L10.5 21.5 L18.5 34 M0 21.5 H10.5" fill="none" stroke="#fff" stroke-width="1.5"/><path d="M22 2 L33 8 L22 14 Z" fill="#3a9ab0"/></svg>
<div class="t" style="left:150px;top:412.5px;font-size:23px;line-height:23px;color:#111;">Default Model Inputs</div>
<svg class="a" style="left:112px;top:442px" width="32" height="32" viewBox="0 0 32 32"><circle cx="16" cy="16" r="14.5" fill="#fbe8d0" stroke="#e89030" stroke-width="2"/><rect x="9" y="7" width="6" height="6" fill="#e89a30"/><rect x="17" y="7" width="6" height="6" fill="#e08a30"/><rect x="6" y="14" width="6" height="6" fill="#e08830"/><rect x="13" y="14" width="6" height="6" fill="#d07830"/><rect x="20" y="14" width="6" height="6" fill="#d07830"/><rect x="9" y="21" width="6" height="5" fill="#c06828"/><rect x="17" y="21" width="6" height="5" fill="#c06828"/></svg>
<div class="t" style="left:150px;top:446.5px;font-size:23px;line-height:23px;color:#111;">Materials</div>
<svg class="a" style="left:50px;top:483px" width="12" height="18" viewBox="0 0 12 18"><path d="M2 2 L9 9 L2 16" fill="none" stroke="#777" stroke-width="2.2"/></svg>
<svg class="a" style="left:81px;top:476px" width="34" height="32" viewBox="0 0 34 32"><path d="M4 8 C4 2 28 1 31 8 C34 16 30 24 24 24 L16 30 L14 24 C6 24 3 16 4 8 Z" fill="#3a86d0"/><text x="17" y="18" font-size="12" font-family="Liberation Sans" fill="#fff" text-anchor="middle">Ω</text></svg>
<div class="t" style="left:118px;top:480.5px;font-size:23px;line-height:23px;color:#111;">Component 2 <i>(comp2)</i></div>
<svg class="a" style="left:50px;top:517px" width="12" height="18" viewBox="0 0 12 18"><path d="M2 2 L9 9 L2 16" fill="none" stroke="#777" stroke-width="2.2"/></svg>
<svg class="a" style="left:81px;top:514px" width="34" height="24" viewBox="0 0 34 24"><path d="M1 12 C4 4 8 4 11 12" fill="none" stroke="#3aa0c8" stroke-width="2.2"/><circle cx="17" cy="13" r="5" fill="none" stroke="#3aa0c8" stroke-width="2.2"/><circle cx="27" cy="11" r="5" fill="none" stroke="#3aa0c8" stroke-width="2.2"/></svg>
<div class="t" style="left:118px;top:514.5px;font-size:23px;line-height:23px;color:#111;">Study 1</div>
<svg class="a" style="left:47px;top:554px" width="18" height="12" viewBox="0 0 18 12"><path d="M2 2 L9 9 L16 2" fill="none" stroke="#777" stroke-width="2.2"/></svg>
<svg class="a" style="left:81px;top:543px" width="34" height="34" viewBox="0 0 34 34"><rect x="2" y="10" width="24" height="20" fill="#bbb" stroke="#777" stroke-width="1.5"/><rect x="5" y="6" width="24" height="20" fill="#ccc" stroke="#777" stroke-width="1.5"/><rect x="8" y="2" width="24" height="20" fill="#eee" stroke="#777" stroke-width="1.5"/><rect x="12" y="6" width="16" height="12" fill="#a8306a"/></svg>
<div class="t" style="left:118px;top:548.5px;font-size:23px;line-height:23px;color:#111;">Results</div>
<svg class="a" style="left:83px;top:585px" width="12" height="18" viewBox="0 0 12 18"><path d="M2 2 L9 9 L2 16" fill="none" stroke="#777" stroke-width="2.2"/></svg>
<svg class="a" style="left:114px;top:578px" width="28" height="32" viewBox="0 0 28 32"><rect x="2" y="2" width="3" height="3" fill="#a8306a"/><rect x="2" y="7" width="3" height="3" fill="#a8306a"/><rect x="2" y="12" width="3" height="3" fill="#a8306a"/><rect x="2" y="17" width="3" height="3" fill="#a8306a"/><rect x="2" y="22" width="3" height="3" fill="#a8306a"/><rect x="2" y="27" width="3" height="3" fill="#a8306a"/><rect x="8" y="2" width="3" height="3" fill="#aaa"/><rect x="8" y="7" width="3" height="3" fill="#aaa"/><rect x="8" y="12" width="3" height="3" fill="#aaa"/><rect x="8" y="17" width="3" height="3" fill="#aaa"/><rect x="8" y="22" width="3" height="3" fill="#aaa"/><rect x="8" y="27" width="3" height="3" fill="#aaa"/><rect x="14" y="2" width="3" height="3" fill="#a8306a"/><rect x="14" y="7" width="3" height="3" fill="#a8306a"/><rect x="14" y="12" width="3" height="3" fill="#a8306a"/><rect x="14" y="17" width="3" height="3" fill="#a8306a"/><rect x="14" y="22" width="3" height="3" fill="#a8306a"/><rect x="14" y="27" width="3" height="3" fill="#a8306a"/><rect x="20" y="2" width="3" height="3" fill="#aaa"/><rect x="20" y="7" width="3" height="3" fill="#aaa"/><rect x="20" y="12" width="3" height="3" fill="#aaa"/><rect x="20" y="17" width="3" height="3" fill="#aaa"/><rect x="20" y="22" width="3" height="3" fill="#aaa"/><rect x="20" y="27" width="3" height="3" fill="#aaa"/></svg>
<div class="t" style="left:150px;top:582.5px;font-size:23px;line-height:23px;color:#111;">Datasets</div>
<svg class="a" style="left:112px;top:612px" width="34" height="32" viewBox="0 0 34 32"><text x="17" y="13" font-size="13" font-family="Liberation Sans" font-weight="bold" fill="#a8306a" text-anchor="middle">8.85</text><text x="17" y="29" font-size="13" font-family="Liberation Sans" font-weight="bold" fill="#a8306a" text-anchor="middle">e-12</text></svg>
<div class="t" style="left:150px;top:616.5px;font-size:23px;line-height:23px;color:#111;">Derived Values</div>
<svg class="a" style="left:114px;top:648px" width="28" height="28" viewBox="0 0 28 28"><rect x="1.5" y="1.5" width="25" height="25" fill="#fff" stroke="#a8306a" stroke-width="2.5"/><path d="M1 10 H27 M1 18 H27 M10 1 V27 M18 1 V27" stroke="#a8306a" stroke-width="2"/><rect x="18" y="10" width="8" height="8" fill="#d8a8c0"/></svg>
<div class="t" style="left:150px;top:650.5px;font-size:23px;line-height:23px;color:#111;">Tables</div>
<svg class="a" style="left:83px;top:687px" width="12" height="18" viewBox="0 0 12 18"><path d="M2 2 L9 9 L2 16" fill="none" stroke="#777" stroke-width="2.2"/></svg>
<div class="a" style="left:116px;top:680px;width:28px;height:29px;background:#a8306a;"></div>
<div class="t" style="left:150px;top:684.5px;font-size:23px;line-height:23px;color:#111;">Velocity (spf)</div>
<svg class="a" style="left:83px;top:721px" width="12" height="18" viewBox="0 0 12 18"><path d="M2 2 L9 9 L2 16" fill="none" stroke="#777" stroke-width="2.2"/></svg>
<div class="a" style="left:116px;top:714px;width:28px;height:29px;background:#a8a8a8;"></div>
<div class="t" style="left:150px;top:718.5px;font-size:23px;line-height:23px;color:#8a8a8a;">Pressure (spf)</div>
<svg class="a" style="left:83px;top:755px" width="12" height="18" viewBox="0 0 12 18"><path d="M2 2 L9 9 L2 16" fill="none" stroke="#777" stroke-width="2.2"/></svg>
<svg class="a" style="left:116px;top:746px" width="32" height="33" viewBox="0 0 32 33"><path d="M0 4 H13 A12 12 0 0 0 28 17 V33 H0 Z" fill="#a8306a"/><path d="M23 2 V14 M17 8 H29 M18.8 3.8 L27.2 12.2 M27.2 3.8 L18.8 12.2" stroke="#444" stroke-width="2.2"/><circle cx="23" cy="8" r="3.2" fill="#444"/></svg>
<div class="t" style="left:150px;top:752.5px;font-size:23px;line-height:23px;color:#111;">Vorticity</div>
<svg class="a" style="left:83px;top:789px" width="12" height="18" viewBox="0 0 12 18"><path d="M2 2 L9 9 L2 16" fill="none" stroke="#777" stroke-width="2.2"/></svg>
<svg class="a" style="left:114px;top:780px" width="34" height="34" viewBox="0 0 34 34"><path d="M1 22 C6 12 10 12 16 21 C21 29 26 29 31 22" fill="none" stroke="#a8306a" stroke-width="2.5"/><path d="M24 3 V15 M18 9 H30 M19.8 4.8 L28.2 13.2 M28.2 4.8 L19.8 13.2" stroke="#444" stroke-width="2.2"/><circle cx="24" cy="9" r="3.2" fill="#444"/></svg>
<div class="t" style="left:150px;top:786.5px;font-size:23px;line-height:23px;color:#111;">1D cutplane center arc</div>
<svg class="a" style="left:83px;top:823px" width="12" height="18" viewBox="0 0 12 18"><path d="M2 2 L9 9 L2 16" fill="none" stroke="#777" stroke-width="2.2"/></svg>
<svg class="a" style="left:116px;top:814px" width="32" height="33" viewBox="0 0 32 33"><path d="M0 4 H13 A12 12 0 0 0 28 17 V33 H0 Z" fill="#a8306a"/><path d="M23 2 V14 M17 8 H29 M18.8 3.8 L27.2 12.2 M27.2 3.8 L18.8 12.2" stroke="#444" stroke-width="2.2"/><circle cx="23" cy="8" r="3.2" fill="#444"/></svg>
<div class="t" style="left:150px;top:820.5px;font-size:23px;line-height:23px;color:#111;">Velocity</div>
<svg class="a" style="left:83px;top:857px" width="12" height="18" viewBox="0 0 12 18"><path d="M2 2 L9 9 L2 16" fill="none" stroke="#777" stroke-width="2.2"/></svg>
<svg class="a" style="left:116px;top:848px" width="32" height="33" viewBox="0 0 32 33"><path d="M0 4 H13 A12 12 0 0 0 28 17 V33 H0 Z" fill="#a8306a"/><path d="M23 2 V14 M17 8 H29 M18.8 3.8 L27.2 12.2 M27.2 3.8 L18.8 12.2" stroke="#444" stroke-width="2.2"/><circle cx="23" cy="8" r="3.2" fill="#444"/></svg>
<div class="t" style="left:150px;top:854.5px;font-size:23px;line-height:23px;color:#111;">Cell Reynolds No</div>
<svg class="a" style="left:83px;top:891px" width="12" height="18" viewBox="0 0 12 18"><path d="M2 2 L9 9 L2 16" fill="none" stroke="#777" stroke-width="2.2"/></svg>
<div class="a" style="left:116px;top:884px;width:28px;height:29px;background:#a8306a;"></div>
<div class="t" style="left:150px;top:888.5px;font-size:23px;line-height:23px;color:#111;">Inlet mass flow rate</div>
<svg class="a" style="left:83px;top:925px" width="12" height="18" viewBox="0 0 12 18"><path d="M2 2 L9 9 L2 16" fill="none" stroke="#777" stroke-width="2.2"/></svg>
<svg class="a" style="left:116px;top:916px" width="32" height="33" viewBox="0 0 32 33"><path d="M0 4 H13 A12 12 0 0 0 28 17 V33 H0 Z" fill="#a8306a"/><path d="M23 2 V14 M17 8 H29 M18.8 3.8 L27.2 12.2 M27.2 3.8 L18.8 12.2" stroke="#444" stroke-width="2.2"/><circle cx="23" cy="8" r="3.2" fill="#444"/></svg>
<div class="t" style="left:150px;top:922.5px;font-size:23px;line-height:23px;color:#111;">Pressure</div>
<svg class="a" style="left:80px;top:962px" width="18" height="12" viewBox="0 0 18 12"><path d="M2 2 L9 9 L16 2" fill="none" stroke="#777" stroke-width="2.2"/></svg>
<svg class="a" style="left:112px;top:952px" width="34" height="32" viewBox="0 0 34 32"><rect x="2" y="6" width="28" height="24" fill="#fff" stroke="#a8306a" stroke-width="2"/><path d="M2 6 L8 1 H32 V24 L30 30" fill="none" stroke="#a8306a" stroke-width="2"/><rect x="10" y="14" width="16" height="10" fill="none" stroke="#a8306a" stroke-width="2"/></svg>
<div class="t" style="left:150px;top:956.5px;font-size:23px;line-height:23px;color:#111;">Export</div>
<svg class="a" style="left:145px;top:988px" width="32" height="28" viewBox="0 0 32 28"><rect x="1" y="1" width="30" height="26" fill="#a8306a"/><rect x="2.5" y="2.5" width="2" height="2" fill="#fff"/><rect x="2.5" y="23.5" width="2" height="2" fill="#fff"/><rect x="6.1" y="2.5" width="2" height="2" fill="#fff"/><rect x="6.1" y="23.5" width="2" height="2" fill="#fff"/><rect x="9.7" y="2.5" width="2" height="2" fill="#fff"/><rect x="9.7" y="23.5" width="2" height="2" fill="#fff"/><rect x="13.3" y="2.5" width="2" height="2" fill="#fff"/><rect x="13.3" y="23.5" width="2" height="2" fill="#fff"/><rect x="16.9" y="2.5" width="2" height="2" fill="#fff"/><rect x="16.9" y="23.5" width="2" height="2" fill="#fff"/><rect x="20.5" y="2.5" width="2" height="2" fill="#fff"/><rect x="20.5" y="23.5" width="2" height="2" fill="#fff"/><rect x="24.1" y="2.5" width="2" height="2" fill="#fff"/><rect x="24.1" y="23.5" width="2" height="2" fill="#fff"/><rect x="27.7" y="2.5" width="2" height="2" fill="#fff"/><rect x="27.7" y="23.5" width="2" height="2" fill="#fff"/><rect x="4" y="6" width="7" height="16" fill="#d8a8c0"/><rect x="12.5" y="6" width="7" height="16" fill="#d8a8c0"/><rect x="21" y="6" width="7" height="16" fill="#d8a8c0"/></svg>
<div class="t" style="left:182px;top:990.5px;font-size:23px;line-height:23px;color:#111;">Animation 1</div>
<svg class="a" style="left:145px;top:1022px" width="32" height="28" viewBox="0 0 32 28"><rect x="1" y="1" width="30" height="26" fill="#a8306a"/><rect x="2.5" y="2.5" width="2" height="2" fill="#fff"/><rect x="2.5" y="23.5" width="2" height="2" fill="#fff"/><rect x="6.1" y="2.5" width="2" height="2" fill="#fff"/><rect x="6.1" y="23.5" width="2" height="2" fill="#fff"/><rect x="9.7" y="2.5" width="2" height="2" fill="#fff"/><rect x="9.7" y="23.5" width="2" height="2" fill="#fff"/><rect x="13.3" y="2.5" width="2" height="2" fill="#fff"/><rect x="13.3" y="23.5" width="2" height="2" fill="#fff"/><rect x="16.9" y="2.5" width="2" height="2" fill="#fff"/><rect x="16.9" y="23.5" width="2" height="2" fill="#fff"/><rect x="20.5" y="2.5" width="2" height="2" fill="#fff"/><rect x="20.5" y="23.5" width="2" height="2" fill="#fff"/><rect x="24.1" y="2.5" width="2" height="2" fill="#fff"/><rect x="24.1" y="23.5" width="2" height="2" fill="#fff"/><rect x="27.7" y="2.5" width="2" height="2" fill="#fff"/><rect x="27.7" y="23.5" width="2" height="2" fill="#fff"/><rect x="4" y="6" width="7" height="16" fill="#d8a8c0"/><rect x="12.5" y="6" width="7" height="16" fill="#d8a8c0"/><rect x="21" y="6" width="7" height="16" fill="#d8a8c0"/></svg>
<div class="t" style="left:182px;top:1024.5px;font-size:23px;line-height:23px;color:#111;">Animation 2</div>
<svg class="a" style="left:112px;top:1054px" width="32" height="32" viewBox="0 0 32 32"><rect x="2" y="5" width="24" height="25" fill="#fff" stroke="#a8306a" stroke-width="2.5"/><path d="M7 11 H15 M7 16 H13" stroke="#a8306a" stroke-width="2"/><path d="M12 24 L28 4 L31 7 L15 27 L10 28 Z" fill="#a8306a"/></svg>
<div class="t" style="left:150px;top:1058.5px;font-size:23px;line-height:23px;color:#111;">Reports</div>
<div class="a" style="left:515px;top:164px;width:718px;height:1682px;background:#f8f9fd;border:1px solid #a3a3a3;border-bottom:none;border-radius:11px 11px 0 0;box-sizing:border-box;"></div>
<svg class="a" style="left:515px;top:164px" width="227" height="48" viewBox="0 0 227 48"><path d="M110 1 L120 1 C134 1 141 7 153.5 24 C166 41 173 47 187 47" fill="none" stroke="#a3a3a3" stroke-width="1.6"/></svg>
<div class="a" style="left:702px;top:210.2px;width:531px;height:1.6px;background:#a3a3a3;"></div>
<svg class="a" style="left:522px;top:172px" width="33" height="33" viewBox="0 0 33 33"><rect x="1.5" y="1.5" width="30" height="30" fill="#dcdcdc" stroke="#4a86c8" stroke-width="2"/><rect x="5" y="7" width="4" height="4" fill="#4a86c8"/><rect x="14" y="7" width="4" height="4" fill="#4a86c8"/><rect x="23" y="7" width="4" height="4" fill="#d03050"/><path d="M7 18 V28 M16 18 V28 M25 14 V22" stroke="#4a86c8" stroke-width="3"/><circle cx="7" cy="20" r="3" fill="#4a86c8"/><circle cx="16" cy="20" r="3" fill="#4a86c8"/><circle cx="25" cy="24" r="3" fill="#4a86c8"/></svg>
<div class="t" style="left:563px;top:177.5px;font-size:23px;line-height:23px;">Settings</div>
<div class="a" style="left:1146px;top:176px;width:20px;height:7.5px;border:1.8px solid #555;box-sizing:border-box;"></div>
<svg class="a" style="left:1188px;top:175px" width="22" height="22" viewBox="0 0 22 22"><rect x="1" y="1" width="20" height="19" fill="none" stroke="#555" stroke-width="1.8"/><path d="M1 4.5 H21" stroke="#555" stroke-width="1.8"/></svg>
<div class="a" style="left:515px;top:176px;width:1.5px;height:1670px;background:#a3a3a3;"></div>
<div class="a" style="left:1232px;top:176px;width:1.5px;height:1670px;background:#a3a3a3;"></div>
<div class="t" style="left:529px;top:218.5px;font-size:23px;line-height:23px;">Animation</div>
<svg class="a" style="left:528px;top:254px" width="29" height="32" viewBox="0 0 29 32"><rect x="1" y="1" width="27" height="30" fill="#ddd"/><rect x="1" y="1" width="6" height="30" fill="#4a86c8"/><rect x="22" y="1" width="6" height="30" fill="#4a86c8"/><rect x="3" y="3" width="2" height="2" fill="#fff"/><rect x="24" y="3" width="2" height="2" fill="#fff"/><rect x="3" y="7" width="2" height="2" fill="#fff"/><rect x="24" y="7" width="2" height="2" fill="#fff"/><rect x="3" y="11" width="2" height="2" fill="#fff"/><rect x="24" y="11" width="2" height="2" fill="#fff"/><rect x="3" y="15" width="2" height="2" fill="#fff"/><rect x="24" y="15" width="2" height="2" fill="#fff"/><rect x="3" y="19" width="2" height="2" fill="#fff"/><rect x="24" y="19" width="2" height="2" fill="#fff"/><rect x="3" y="23" width="2" height="2" fill="#fff"/><rect x="24" y="23" width="2" height="2" fill="#fff"/><rect x="3" y="27" width="2" height="2" fill="#fff"/><rect x="24" y="27" width="2" height="2" fill="#fff"/><rect x="7" y="10" width="15" height="12" fill="#fff" stroke="#3a5a90" stroke-width="1.5"/></svg>
<div class="t" style="left:563px;top:259.5px;font-size:23px;line-height:23px;color:#888;">Show Frame</div>
<div class="a" style="left:523px;top:294px;width:706px;height:2px;background:#d8d8db;"></div>
<div class="t" style="left:545px;top:329.5px;font-size:23px;line-height:23px;">Label:</div>
<div class="a" style="left:623px;top:325px;width:583px;height:34px;background:#fbfbfd;border:1px solid #e2e2e5;border-bottom:1.5px solid #c4c4c8;box-sizing:border-box;"></div>
<div class="t" style="left:631px;top:331.5px;font-size:23px;line-height:23px;">Animation 1</div>
<div class="a" style="left:531px;top:380px;width:687px;height:48px;border:1.5px solid #e1e7f0;border-bottom:none;border-radius:7px 7px 0 0;box-sizing:border-box;background:linear-gradient(to bottom,#f4f6fb 0px,#e7ecf5 14px,#edf1f7 30px,#f8f9fd 48px);"></div>
<div class="a" style="left:542px;top:392px;width:22px;height:22px;background:#e9edf3;"></div>
<svg class="a" style="left:543px;top:396px" width="18" height="12" viewBox="0 0 18 12"><path d="M1.5 1 H16.5 L9 9.5 Z" fill="#9a9da3"/></svg>
<div class="t" style="left:577px;top:388.5px;font-size:23px;line-height:23px;color:#50627a;">Scene</div>
<div class="t" style="left:556px;top:456.5px;font-size:23px;line-height:23px;">Subject:</div>
<div class="a" style="left:666px;top:450px;width:408px;height:33px;background:#fff;border-radius:7px;box-shadow:0 0 0 1px #d2d2d4,0 1px 2px rgba(0,0,0,0.18);"></div>
<div class="t" style="left:679px;top:455.0px;font-size:23px;line-height:23px;">Velocity (spf)</div>
<svg class="a" style="left:1051px;top:456.5px" width="12" height="20" viewBox="0 0 12 20"><path d="M1.5 7.5 L6 3 L10.5 7.5 M1.5 12.5 L6 17 L10.5 12.5" fill="none" stroke="#222" stroke-width="2.2"/></svg>
<div class="a" style="left:1106px;top:446px;width:76px;height:40px;background:#fff;border-radius:8px;box-shadow:0 0 0 1px #d2d2d4,0 1px 2px rgba(0,0,0,0.15);"></div>
<svg class="a" style="left:1128px;top:452px" width="30" height="28" viewBox="0 0 30 28"><path d="M2 3 H12 M2 8 H10 M6 13 H12 M6 18 H12 M2 23 H14" stroke="#777" stroke-width="2"/><path d="M24 26 V10 M19 15 L24 9 L29 15 M14 26 H24" stroke="#3a86d0" stroke-width="2" fill="none"/></svg>
<div class="a" style="left:531px;top:521px;width:687px;height:48px;border:1.5px solid #e1e7f0;border-bottom:none;border-radius:7px 7px 0 0;box-sizing:border-box;background:linear-gradient(to bottom,#eef2f8 0px,#e8edf5 10px,#eef1f7 30px,#f4f6fa 35px,#dfe6f1 36px,#dfe6f1 39px,#f8f9fd 41px);"></div>
<div class="a" style="left:542px;top:533px;width:22px;height:22px;background:#e9edf3;"></div>
<svg class="a" style="left:543px;top:537px" width="18" height="12" viewBox="0 0 18 12"><path d="M1.5 1 H16.5 L9 9.5 Z" fill="#9a9da3"/></svg>
<div class="t" style="left:577px;top:529.5px;font-size:23px;line-height:23px;color:#50627a;">Target</div>
<div class="t" style="left:556px;top:586.5px;font-size:23px;line-height:23px;">Target:</div>
<div class="a" style="left:652px;top:580px;width:536px;height:33px;background:#fff;border-radius:7px;box-shadow:0 0 0 1px #d2d2d4,0 1px 2px rgba(0,0,0,0.18);"></div>
<div class="t" style="left:665px;top:585.0px;font-size:23px;line-height:23px;">Player</div>
<svg class="a" style="left:1165px;top:586.5px" width="12" height="20" viewBox="0 0 12 20"><path d="M1.5 7.5 L6 3 L10.5 7.5 M1.5 12.5 L6 17 L10.5 12.5" fill="none" stroke="#222" stroke-width="2.2"/></svg>
<div class="a" style="left:531px;top:641px;width:687px;height:48px;border:1.5px solid #e1e7f0;border-bottom:none;border-radius:7px 7px 0 0;box-sizing:border-box;background:linear-gradient(to bottom,#f2f5fa 0px,#f4f6fa 6px,#f5f7fb 22px,#e3e9f2 23px,#e3e9f2 39px,#f6f8fc 41px,#f8f9fd 48px);"></div>
<div class="a" style="left:542px;top:653px;width:22px;height:22px;background:#e9edf3;"></div>
<svg class="a" style="left:543px;top:657px" width="18" height="12" viewBox="0 0 18 12"><path d="M1.5 1 H16.5 L9 9.5 Z" fill="#9a9da3"/></svg>
<div class="t" style="left:577px;top:649.5px;font-size:23px;line-height:23px;color:#50627a;">Animation Editing</div>
<div class="t" style="left:556px;top:706.5px;font-size:23px;line-height:23px;">Sequence type:</div>
<div class="a" style="left:742px;top:700px;width:446px;height:33px;background:#fff;border-radius:7px;box-shadow:0 0 0 1px #d2d2d4,0 1px 2px rgba(0,0,0,0.18);"></div>
<div class="t" style="left:755px;top:705.0px;font-size:23px;line-height:23px;">Stored solutions</div>
<svg class="a" style="left:1165px;top:706.5px" width="12" height="20" viewBox="0 0 12 20"><path d="M1.5 7.5 L6 3 L10.5 7.5 M1.5 12.5 L6 17 L10.5 12.5" fill="none" stroke="#222" stroke-width="2.2"/></svg>
<div class="t" style="left:556px;top:760.5px;font-size:23px;line-height:23px;">Loop over:</div>
<div class="a" style="left:742px;top:754px;width:446px;height:33px;background:#fff;border-radius:7px;box-shadow:0 0 0 1px #d2d2d4,0 1px 2px rgba(0,0,0,0.18);"></div>
<div class="t" style="left:755px;top:759.0px;font-size:23px;line-height:23px;">Time</div>
<svg class="a" style="left:1165px;top:760.5px" width="12" height="20" viewBox="0 0 12 20"><path d="M1.5 7.5 L6 3 L10.5 7.5 M1.5 12.5 L6 17 L10.5 12.5" fill="none" stroke="#222" stroke-width="2.2"/></svg>
<div class="t" style="left:556px;top:844.5px;font-size:23px;line-height:23px;">Time selection:</div>
<div class="a" style="left:742px;top:838px;width:446px;height:33px;background:#fff;border-radius:7px;box-shadow:0 0 0 1px #d2d2d4,0 1px 2px rgba(0,0,0,0.18);"></div>
<div class="t" style="left:755px;top:843.0px;font-size:23px;line-height:23px;">All</div>
<svg class="a" style="left:1165px;top:844.5px" width="12" height="20" viewBox="0 0 12 20"><path d="M1.5 7.5 L6 3 L10.5 7.5 M1.5 12.5 L6 17 L10.5 12.5" fill="none" stroke="#222" stroke-width="2.2"/></svg>
<div class="a" style="left:531px;top:910px;width:687px;height:48px;border:1.5px solid #e1e7f0;border-bottom:none;border-radius:7px 7px 0 0;box-sizing:border-box;background:linear-gradient(to bottom,#f2f5fa 0px,#f4f6fa 6px,#f5f7fb 22px,#e3e9f2 23px,#e3e9f2 39px,#f6f8fc 41px,#f8f9fd 48px);"></div>
<div class="a" style="left:542px;top:922px;width:22px;height:22px;background:#e9edf3;"></div>
<svg class="a" style="left:543px;top:926px" width="18" height="12" viewBox="0 0 18 12"><path d="M1.5 1 H16.5 L9 9.5 Z" fill="#9a9da3"/></svg>
<div class="t" style="left:577px;top:918.5px;font-size:23px;line-height:23px;color:#50627a;">Frames</div>
<div class="t" style="left:556px;top:976.5px;font-size:23px;line-height:23px;">Frame selection:</div>
<div class="a" style="left:752px;top:970px;width:436px;height:32px;background:#fff;border-radius:7px;box-shadow:0 0 0 1px #d2d2d4,0 1px 2px rgba(0,0,0,0.18);"></div>
<div class="t" style="left:765px;top:974.5px;font-size:23px;line-height:23px;">All</div>
<svg class="a" style="left:1165px;top:976.0px" width="12" height="20" viewBox="0 0 12 20"><path d="M1.5 7.5 L6 3 L10.5 7.5 M1.5 12.5 L6 17 L10.5 12.5" fill="none" stroke="#222" stroke-width="2.2"/></svg>
<div class="t" style="left:556px;top:1050.5px;font-size:23px;line-height:23px;">Frame number:</div>
<div class="a" style="left:745px;top:1047px;width:450px;height:34px;background:#fbfbfd;border:1px solid #e2e2e5;border-bottom:1.5px solid #c4c4c8;box-sizing:border-box;"></div>
<div class="t" style="left:753px;top:1053.5px;font-size:23px;line-height:23px;">177</div>
<div class="a" style="left:553px;top:1103px;width:642px;height:8px;background:#e2e2e4;border-radius:4px;"></div>
<div class="a" style="left:553px;top:1103px;width:586px;height:8px;background:#c4c4c6;border-radius:4px;"></div>
<div class="a" style="left:1128px;top:1096px;width:22px;height:22px;background:#fff;border-radius:50%;box-shadow:0 0 0 1px #cfcfd1,0 1px 2px rgba(0,0,0,0.25);"></div>
<div class="t" style="left:556px;top:1134.5px;font-size:23px;line-height:23px;">Time:</div>
<div class="t" style="left:749px;top:1134.5px;font-size:23px;line-height:23px;">8.8</div>
<div class="a" style="left:531px;top:1180px;width:687px;height:48px;border:1.5px solid #e1e7f0;border-bottom:none;border-radius:7px 7px 0 0;box-sizing:border-box;background:linear-gradient(to bottom,#f2f5fa 0px,#f4f6fa 6px,#f5f7fb 22px,#e3e9f2 23px,#e3e9f2 39px,#f6f8fc 41px,#f8f9fd 48px);"></div>
<div class="a" style="left:542px;top:1192px;width:22px;height:22px;background:#e9edf3;"></div>
<svg class="a" style="left:543px;top:1196px" width="18" height="12" viewBox="0 0 18 12"><path d="M1.5 1 H16.5 L9 9.5 Z" fill="#9a9da3"/></svg>
<div class="t" style="left:577px;top:1188.5px;font-size:23px;line-height:23px;color:#50627a;">Playing</div>
<div class="t" style="left:556px;top:1242.5px;font-size:23px;line-height:23px;">Display each frame for:</div>
<div class="a" style="left:816px;top:1240px;width:349px;height:33px;background:#fbfbfd;border:1px solid #e2e2e5;border-bottom:1.5px solid #c4c4c8;box-sizing:border-box;"></div>
<div class="t" style="left:824px;top:1246.0px;font-size:23px;line-height:23px;">0.1</div>
<div class="t" style="left:1181px;top:1242.5px;font-size:23px;line-height:23px;">s</div>
<div class="t" style="left:556px;top:1294.5px;font-size:23px;line-height:23px;">Repeat:</div>
<div class="a" style="left:822px;top:1288px;width:336px;height:32px;background:#fff;border-radius:7px;box-shadow:0 0 0 1px #d2d2d4,0 1px 2px rgba(0,0,0,0.18);"></div>
<div class="t" style="left:835px;top:1292.5px;font-size:23px;line-height:23px;">Off</div>
<svg class="a" style="left:1135px;top:1294.0px" width="12" height="20" viewBox="0 0 12 20"><path d="M1.5 7.5 L6 3 L10.5 7.5 M1.5 12.5 L6 17 L10.5 12.5" fill="none" stroke="#222" stroke-width="2.2"/></svg>
<div class="a" style="left:531px;top:1361px;width:687px;height:48px;border:1.5px solid #e1e7f0;border-bottom:none;border-radius:7px 7px 0 0;box-sizing:border-box;background:linear-gradient(to bottom,#f4f6fb 0px,#e7ecf5 14px,#edf1f7 30px,#f8f9fd 48px);"></div>
<div class="a" style="left:542px;top:1373px;width:22px;height:22px;background:#e9edf3;"></div>
<svg class="a" style="left:548px;top:1374px" width="12" height="18" viewBox="0 0 12 18"><path d="M1 1.5 V16.5 L9.5 9 Z" fill="#9a9da3"/></svg>
<div class="t" style="left:577px;top:1369.5px;font-size:23px;line-height:23px;color:#50627a;">Advanced</div>
<div class="a" style="left:1243px;top:164px;width:2341px;height:1570px;background:#f8f9fd;border:1px solid #a3a3a3;border-bottom:none;border-radius:11px 11px 0 0;box-sizing:border-box;"></div>
<svg class="a" style="left:1243px;top:164px" width="234" height="48" viewBox="0 0 234 48"><path d="M116 1 L126 1 C140 1 147 7 160.0 24 C173 41 180 47 194 47" fill="none" stroke="#a3a3a3" stroke-width="1.6"/></svg>
<div class="a" style="left:1437px;top:210.2px;width:2147px;height:1.6px;background:#a3a3a3;"></div>
<svg class="a" style="left:1253px;top:172px" width="32" height="34" viewBox="0 0 32 34"><circle cx="10" cy="24" r="8" fill="#30a8d8"/><path d="M14 24 L22 2 L28 26 Z" fill="#b050a0"/><circle cx="10" cy="24" r="8" fill="#40b8e0" opacity="0.7"/></svg>
<div class="t" style="left:1290px;top:177.5px;font-size:23px;line-height:23px;">Graphics</div>
<div class="a" style="left:3496px;top:176px;width:20px;height:7.5px;border:1.8px solid #555;box-sizing:border-box;"></div>
<svg class="a" style="left:3538px;top:175px" width="22" height="22" viewBox="0 0 22 22"><rect x="1" y="1" width="20" height="19" fill="none" stroke="#555" stroke-width="1.8"/><path d="M1 4.5 H21" stroke="#555" stroke-width="1.8"/></svg>
<div class="a" style="left:1243px;top:176px;width:1.5px;height:1558px;background:#a3a3a3;"></div>
<div class="a" style="left:1243px;top:1733px;width:2341px;height:1.5px;background:#a3a3a3;"></div>
<svg class="a" style="left:1254px;top:223px" width="30" height="30" viewBox="0 0 30 30"><rect x="2" y="2" width="26" height="26" fill="none" stroke="#3a86d0" stroke-width="2.2"/><path d="M19 8 L10 15 L19 22 Z" fill="#3a86d0"/><rect x="8" y="8" width="2" height="14" fill="#3a86d0"/></svg>
<svg class="a" style="left:1298px;top:223px" width="30" height="30" viewBox="0 0 30 30"><rect x="2" y="2" width="26" height="26" fill="none" stroke="#3a86d0" stroke-width="2.2"/><path d="M11 8 L21 15 L11 22 Z" fill="#3a86d0"/></svg>
<svg class="a" style="left:1343px;top:223px" width="30" height="30" viewBox="0 0 30 30"><rect x="2" y="2" width="26" height="26" fill="none" stroke="#b8d4f0" stroke-width="2.2"/><rect x="11" y="11" width="8" height="8" fill="#b8d4f0"/></svg>
<svg class="a" style="left:1387px;top:223px" width="30" height="30" viewBox="0 0 30 30"><rect x="2" y="2" width="26" height="26" fill="none" stroke="#3a86d0" stroke-width="2.2"/><path d="M11 8 L20 15 L11 22 Z" fill="#3a86d0"/><rect x="20" y="8" width="2" height="14" fill="#3a86d0"/></svg>
<div class="a" style="left:1430px;top:218px;width:1px;height:42px;background:#dfe0e5;"></div>
<div class="a" style="left:1630px;top:218px;width:1px;height:42px;background:#dfe0e5;"></div>
<div class="a" style="left:1710px;top:218px;width:1px;height:42px;background:#dfe0e5;"></div>
<svg class="a" style="left:1442px;top:224px" width="30" height="30" viewBox="0 0 30 30"><circle cx="12" cy="12" r="9" fill="none" stroke="#3a86d0" stroke-width="2.8"/><path d="M19 19 L28 28" stroke="#3a86d0" stroke-width="4"/><path d="M7 12 H17 M12 7 V17" stroke="#3a86d0" stroke-width="2.5"/></svg>
<svg class="a" style="left:1486px;top:224px" width="30" height="30" viewBox="0 0 30 30"><circle cx="12" cy="12" r="9" fill="none" stroke="#3a86d0" stroke-width="2.8"/><path d="M19 19 L28 28" stroke="#3a86d0" stroke-width="4"/><path d="M7 12 H17" stroke="#3a86d0" stroke-width="2.5"/></svg>
<svg class="a" style="left:1529px;top:224px" width="30" height="30" viewBox="0 0 30 30"><rect x="2" y="8" width="16" height="16" fill="none" stroke="#3a86d0" stroke-width="1.5" stroke-dasharray="2 2"/><circle cx="12" cy="12" r="9" fill="none" stroke="#3a86d0" stroke-width="2.8"/><path d="M19 19 L28 28" stroke="#3a86d0" stroke-width="4"/><path d="M7 12 H17 M12 7 V17" stroke="#3a86d0" stroke-width="2.5"/></svg>
<svg class="a" style="left:1568px;top:237.5px" width="10" height="7" viewBox="0 0 10 7"><path d="M0 1 L10 1 L5 6 Z" fill="#111"/></svg>
<svg class="a" style="left:1589px;top:223px" width="30" height="30" viewBox="0 0 30 30"><rect x="3" y="3" width="24" height="24" fill="none" stroke="#555" stroke-width="2"/><path d="M15 5 V25 M5 15 H25 M11 9 L15 5 L19 9 M11 21 L15 25 L19 21 M9 11 L5 15 L9 19 M21 11 L25 15 L21 19" fill="none" stroke="#3a86d0" stroke-width="2"/></svg>
<svg class="a" style="left:1643px;top:222px" width="36" height="32" viewBox="0 0 36 32"><path d="M18 29 V5" stroke="#4a86c8" stroke-width="2"/><path d="M18 1 L14.5 7 H21.5 Z" fill="#4a86c8"/><path d="M18 29 L6 19" stroke="#6ab04a" stroke-width="2"/><path d="M3 16 L10 18 L6 22 Z" fill="#6ab04a"/><path d="M18 29 L30 20" stroke="#d04060" stroke-width="2"/><path d="M34 17 L27 18 L31 23 Z" fill="#d04060"/></svg>
<svg class="a" style="left:1684px;top:237.5px" width="10" height="7" viewBox="0 0 10 7"><path d="M0 1 L10 1 L5 6 Z" fill="#111"/></svg>
<div class="a" style="left:1714px;top:217px;width:40px;height:44px;background:#e2e2e5;border:1px solid #cfcfd3;box-sizing:border-box;"></div>
<svg class="a" style="left:1720px;top:224px" width="28" height="28" viewBox="0 0 28 28"><rect x="2" y="2" width="24" height="24" fill="#fff" stroke="#555" stroke-width="2"/><path d="M2 8 H26 M2 14 H26 M2 20 H26 M8 2 V26 M14 2 V26 M20 2 V26" stroke="#3a86d0" stroke-width="1.8"/></svg>
<svg class="a" style="left:1762px;top:222px" width="32" height="32" viewBox="0 0 32 32"><circle cx="16" cy="16" r="11" fill="none" stroke="#4a86c8" stroke-width="6" stroke-dasharray="13 4.3" transform="rotate(20 16 16)"/></svg>
<svg class="a" style="left:1800px;top:237.5px" width="10" height="7" viewBox="0 0 10 7"><path d="M0 1 L10 1 L5 6 Z" fill="#111"/></svg>
<svg class="a" style="left:1820px;top:224px" width="32" height="28" viewBox="0 0 32 28"><path d="M2 8 H10 L13 3 H20 L23 8 H30 V26 H2 Z" fill="#3a86d0"/><circle cx="16" cy="16" r="6" fill="#fff"/><circle cx="16" cy="16" r="3.5" fill="#3a86d0"/></svg>
<svg class="a" style="left:1866px;top:222px" width="30" height="32" viewBox="0 0 30 32"><rect x="7" y="2" width="16" height="8" fill="#fff" stroke="#3a86d0" stroke-width="2"/><rect x="2" y="10" width="26" height="12" rx="2" fill="#3a86d0"/><rect x="7" y="18" width="16" height="12" fill="#fff" stroke="#3a86d0" stroke-width="2"/></svg>
<div class="a" style="left:1251px;top:262px;width:2327px;height:2px;background:#d8d8db;"></div>
<div class="a" style="left:1248px;top:270px;width:2330px;height:1463px;background:#ffffff;"></div>
<div class="a" style="left:3582px;top:176px;width:1.5px;height:1558px;background:#a3a3a3;"></div>
<svg class="a" style="left:0;top:0" width="3584" height="1846"><defs><linearGradient id="g1" gradientUnits="userSpaceOnUse" x1="1334.4" y1="0" x2="2680.7" y2="0"><stop offset="0.0000" stop-color="#000090"/><stop offset="0.2986" stop-color="#000096"/><stop offset="0.3142" stop-color="#0000d1"/><stop offset="0.3326" stop-color="#0000fd"/><stop offset="0.3369" stop-color="#001aff"/><stop offset="0.3681" stop-color="#00ffff"/><stop offset="0.3823" stop-color="#91ff6e"/><stop offset="0.3865" stop-color="#a0ff5f"/><stop offset="0.4092" stop-color="#cdff32"/><stop offset="0.4390" stop-color="#d0ff2f"/><stop offset="0.4589" stop-color="#c2ff3d"/><stop offset="0.4745" stop-color="#99ff66"/><stop offset="0.4801" stop-color="#67ff98"/><stop offset="0.4901" stop-color="#06fff9"/><stop offset="0.4929" stop-color="#00ecff"/><stop offset="0.5213" stop-color="#0000ff"/><stop offset="0.5539" stop-color="#0000c0"/><stop offset="0.5723" stop-color="#000093"/><stop offset="1.0000" stop-color="#000090"/></linearGradient><linearGradient id="g2" gradientUnits="userSpaceOnUse" x1="1334.4" y1="0" x2="2680.7" y2="0"><stop offset="0.0000" stop-color="#000090"/><stop offset="0.2986" stop-color="#000096"/><stop offset="0.3142" stop-color="#0000d1"/><stop offset="0.3326" stop-color="#0000fd"/><stop offset="0.3369" stop-color="#0018ff"/><stop offset="0.3681" stop-color="#00ffff"/><stop offset="0.3823" stop-color="#90ff6f"/><stop offset="0.3865" stop-color="#a1ff5e"/><stop offset="0.4092" stop-color="#cfff30"/><stop offset="0.4376" stop-color="#d3ff2c"/><stop offset="0.4589" stop-color="#c2ff3d"/><stop offset="0.4745" stop-color="#95ff6a"/><stop offset="0.4801" stop-color="#63ff9c"/><stop offset="0.4901" stop-color="#02fffd"/><stop offset="0.5213" stop-color="#0000fe"/><stop offset="0.5539" stop-color="#0000c0"/><stop offset="0.5723" stop-color="#000093"/><stop offset="1.0000" stop-color="#000090"/></linearGradient><linearGradient id="g3" gradientUnits="userSpaceOnUse" x1="1334.4" y1="0" x2="2680.7" y2="0"><stop offset="0.0000" stop-color="#000090"/><stop offset="0.2972" stop-color="#000094"/><stop offset="0.3156" stop-color="#0000d4"/><stop offset="0.3340" stop-color="#0004ff"/><stop offset="0.3681" stop-color="#00ffff"/><stop offset="0.3823" stop-color="#90ff6f"/><stop offset="0.3865" stop-color="#a1ff5e"/><stop offset="0.4092" stop-color="#d0ff2f"/><stop offset="0.4376" stop-color="#d6ff29"/><stop offset="0.4589" stop-color="#c1ff3e"/><stop offset="0.4745" stop-color="#91ff6e"/><stop offset="0.4830" stop-color="#43ffbc"/><stop offset="0.4901" stop-color="#00feff"/><stop offset="0.5199" stop-color="#0009ff"/><stop offset="0.5213" stop-color="#0000fe"/><stop offset="0.5553" stop-color="#0000bc"/><stop offset="0.5723" stop-color="#000094"/><stop offset="1.0000" stop-color="#000090"/></linearGradient><linearGradient id="g4" gradientUnits="userSpaceOnUse" x1="1334.4" y1="0" x2="2680.7" y2="0"><stop offset="0.0000" stop-color="#000090"/><stop offset="0.2972" stop-color="#000094"/><stop offset="0.3156" stop-color="#0000d4"/><stop offset="0.3340" stop-color="#0003ff"/><stop offset="0.3681" stop-color="#00ffff"/><stop offset="0.3823" stop-color="#8fff70"/><stop offset="0.3865" stop-color="#a1ff5e"/><stop offset="0.4106" stop-color="#d3ff2c"/><stop offset="0.4376" stop-color="#d8ff27"/><stop offset="0.4589" stop-color="#c1ff3e"/><stop offset="0.4745" stop-color="#8dff72"/><stop offset="0.4901" stop-color="#00fbff"/><stop offset="0.5170" stop-color="#001dff"/><stop offset="0.5213" stop-color="#0000fd"/><stop offset="0.5553" stop-color="#0000bc"/><stop offset="0.5723" stop-color="#000094"/><stop offset="1.0000" stop-color="#000090"/></linearGradient><linearGradient id="g5" gradientUnits="userSpaceOnUse" x1="1334.4" y1="0" x2="2680.7" y2="0"><stop offset="0.0000" stop-color="#000090"/><stop offset="0.2972" stop-color="#000095"/><stop offset="0.3156" stop-color="#0000d4"/><stop offset="0.3340" stop-color="#0003ff"/><stop offset="0.3681" stop-color="#00ffff"/><stop offset="0.3823" stop-color="#8eff71"/><stop offset="0.3865" stop-color="#a1ff5e"/><stop offset="0.4106" stop-color="#d5ff2a"/><stop offset="0.4362" stop-color="#dbff24"/><stop offset="0.4589" stop-color="#c0ff3f"/><stop offset="0.4716" stop-color="#95ff6a"/><stop offset="0.4759" stop-color="#80ff7f"/><stop offset="0.4887" stop-color="#06fff9"/><stop offset="0.4915" stop-color="#00ebff"/><stop offset="0.5170" stop-color="#001bff"/><stop offset="0.5213" stop-color="#0000fc"/><stop offset="0.5553" stop-color="#0000bc"/><stop offset="0.5723" stop-color="#000095"/><stop offset="1.0000" stop-color="#000090"/></linearGradient><linearGradient id="g6" gradientUnits="userSpaceOnUse" x1="1334.4" y1="0" x2="2680.7" y2="0"><stop offset="0.0000" stop-color="#000090"/><stop offset="0.2972" stop-color="#000095"/><stop offset="0.3156" stop-color="#0000d4"/><stop offset="0.3340" stop-color="#0002ff"/><stop offset="0.3482" stop-color="#0069ff"/><stop offset="0.3681" stop-color="#00ffff"/><stop offset="0.3823" stop-color="#8dff72"/><stop offset="0.3879" stop-color="#a5ff5a"/><stop offset="0.4106" stop-color="#d7ff28"/><stop offset="0.4348" stop-color="#deff21"/><stop offset="0.4589" stop-color="#c0ff3f"/><stop offset="0.4688" stop-color="#9eff61"/><stop offset="0.4759" stop-color="#7cff83"/><stop offset="0.4887" stop-color="#03fffc"/><stop offset="0.5156" stop-color="#0022ff"/><stop offset="0.5213" stop-color="#0000fc"/><stop offset="0.5567" stop-color="#0000b8"/><stop offset="0.5723" stop-color="#000095"/><stop offset="1.0000" stop-color="#000090"/></linearGradient><linearGradient id="g7" gradientUnits="userSpaceOnUse" x1="1334.4" y1="0" x2="2680.7" y2="0"><stop offset="0.0000" stop-color="#000090"/><stop offset="0.2972" stop-color="#000096"/><stop offset="0.3156" stop-color="#0000d4"/><stop offset="0.3340" stop-color="#0002ff"/><stop offset="0.3426" stop-color="#003dff"/><stop offset="0.3681" stop-color="#00ffff"/><stop offset="0.3837" stop-color="#96ff69"/><stop offset="0.3936" stop-color="#b3ff4c"/><stop offset="0.4106" stop-color="#d9ff26"/><stop offset="0.4348" stop-color="#e1ff1e"/><stop offset="0.4574" stop-color="#c4ff3b"/><stop offset="0.4674" stop-color="#a2ff5d"/><stop offset="0.4759" stop-color="#77ff88"/><stop offset="0.4887" stop-color="#00feff"/><stop offset="0.5156" stop-color="#001fff"/><stop offset="0.5213" stop-color="#0000fb"/><stop offset="0.5567" stop-color="#0000b8"/><stop offset="0.5723" stop-color="#000096"/><stop offset="1.0000" stop-color="#000090"/></linearGradient><linearGradient id="g8" gradientUnits="userSpaceOnUse" x1="1334.4" y1="0" x2="2680.7" y2="0"><stop offset="0.0000" stop-color="#000090"/><stop offset="0.2972" stop-color="#000096"/><stop offset="0.3156" stop-color="#0000d4"/><stop offset="0.3340" stop-color="#0001ff"/><stop offset="0.3397" stop-color="#0026ff"/><stop offset="0.3681" stop-color="#00ffff"/><stop offset="0.3837" stop-color="#95ff6a"/><stop offset="0.3908" stop-color="#adff52"/><stop offset="0.4106" stop-color="#dbff24"/><stop offset="0.4319" stop-color="#e4ff1b"/><stop offset="0.4447" stop-color="#d9ff26"/><stop offset="0.4603" stop-color="#bbff44"/><stop offset="0.4674" stop-color="#a1ff5e"/><stop offset="0.4759" stop-color="#73ff8c"/><stop offset="0.4872" stop-color="#09fff6"/><stop offset="0.4887" stop-color="#00fbff"/><stop offset="0.5156" stop-color="#001dff"/><stop offset="0.5213" stop-color="#0000fb"/><stop offset="0.5582" stop-color="#0000b5"/><stop offset="0.5723" stop-color="#000096"/><stop offset="1.0000" stop-color="#000090"/></linearGradient><linearGradient id="g9" gradientUnits="userSpaceOnUse" x1="1334.4" y1="0" x2="2680.7" y2="0"><stop offset="0.0000" stop-color="#000090"/><stop offset="0.2957" stop-color="#000095"/><stop offset="0.3071" stop-color="#0000ba"/><stop offset="0.3184" stop-color="#0000da"/><stop offset="0.3340" stop-color="#0001ff"/><stop offset="0.3397" stop-color="#0025ff"/><stop offset="0.3681" stop-color="#00ffff"/><stop offset="0.3837" stop-color="#94ff6b"/><stop offset="0.3894" stop-color="#aaff55"/><stop offset="0.4121" stop-color="#deff21"/><stop offset="0.4348" stop-color="#e6ff19"/><stop offset="0.4475" stop-color="#d5ff2a"/><stop offset="0.4617" stop-color="#b6ff49"/><stop offset="0.4674" stop-color="#9fff60"/><stop offset="0.4759" stop-color="#6fff90"/><stop offset="0.4872" stop-color="#05fffa"/><stop offset="0.4915" stop-color="#00deff"/><stop offset="0.5156" stop-color="#001aff"/><stop offset="0.5213" stop-color="#0000fa"/><stop offset="0.5582" stop-color="#0000b5"/><stop offset="0.5738" stop-color="#000096"/><stop offset="1.0000" stop-color="#000090"/></linearGradient><linearGradient id="g10" gradientUnits="userSpaceOnUse" x1="1334.4" y1="0" x2="2680.7" y2="0"><stop offset="0.0000" stop-color="#000090"/><stop offset="0.2957" stop-color="#000095"/><stop offset="0.3156" stop-color="#0000d4"/><stop offset="0.3340" stop-color="#0000ff"/><stop offset="0.3383" stop-color="#0019ff"/><stop offset="0.3681" stop-color="#00ffff"/><stop offset="0.3837" stop-color="#94ff6b"/><stop offset="0.3879" stop-color="#a7ff58"/><stop offset="0.4121" stop-color="#e1ff1e"/><stop offset="0.4333" stop-color="#e9ff16"/><stop offset="0.4447" stop-color="#dcff23"/><stop offset="0.4617" stop-color="#b6ff49"/><stop offset="0.4674" stop-color="#9dff62"/><stop offset="0.4759" stop-color="#6bff94"/><stop offset="0.4872" stop-color="#02fffd"/><stop offset="0.5142" stop-color="#001fff"/><stop offset="0.5199" stop-color="#0002ff"/><stop offset="0.5652" stop-color="#0000a5"/><stop offset="0.5752" stop-color="#000095"/><stop offset="1.0000" stop-color="#000090"/></linearGradient><linearGradient id="g11" gradientUnits="userSpaceOnUse" x1="1334.4" y1="0" x2="2680.7" y2="0"><stop offset="0.0000" stop-color="#000090"/><stop offset="0.2957" stop-color="#000095"/><stop offset="0.3156" stop-color="#0000d4"/><stop offset="0.3340" stop-color="#0000fe"/><stop offset="0.3383" stop-color="#0017ff"/><stop offset="0.3681" stop-color="#00ffff"/><stop offset="0.3837" stop-color="#93ff6c"/><stop offset="0.3879" stop-color="#a7ff58"/><stop offset="0.4135" stop-color="#e5ff1a"/><stop offset="0.4348" stop-color="#ebff14"/><stop offset="0.4447" stop-color="#deff21"/><stop offset="0.4631" stop-color="#b1ff4e"/><stop offset="0.4745" stop-color="#72ff8d"/><stop offset="0.4872" stop-color="#00fdff"/><stop offset="0.5142" stop-color="#001cff"/><stop offset="0.5199" stop-color="#0001ff"/><stop offset="0.5738" stop-color="#000096"/><stop offset="1.0000" stop-color="#000090"/></linearGradient><linearGradient id="g12" gradientUnits="userSpaceOnUse" x1="1334.4" y1="0" x2="2680.7" y2="0"><stop offset="0.0000" stop-color="#000090"/><stop offset="0.2957" stop-color="#000095"/><stop offset="0.3156" stop-color="#0000d4"/><stop offset="0.3340" stop-color="#0000fe"/><stop offset="0.3383" stop-color="#0016ff"/><stop offset="0.3681" stop-color="#00ffff"/><stop offset="0.3837" stop-color="#92ff6d"/><stop offset="0.3879" stop-color="#a7ff58"/><stop offset="0.4135" stop-color="#e7ff18"/><stop offset="0.4333" stop-color="#eeff11"/><stop offset="0.4433" stop-color="#e2ff1d"/><stop offset="0.4631" stop-color="#b0ff4f"/><stop offset="0.4730" stop-color="#76ff89"/><stop offset="0.4787" stop-color="#48ffb7"/><stop offset="0.4858" stop-color="#07fff8"/><stop offset="0.4887" stop-color="#00edff"/><stop offset="0.5142" stop-color="#0019ff"/><stop offset="0.5199" stop-color="#0000fe"/><stop offset="0.5738" stop-color="#000097"/><stop offset="0.6248" stop-color="#000092"/><stop offset="1.0000" stop-color="#000090"/></linearGradient><linearGradient id="g13" gradientUnits="userSpaceOnUse" x1="1334.4" y1="0" x2="2680.7" y2="0"><stop offset="0.0000" stop-color="#000090"/><stop offset="0.2957" stop-color="#000096"/><stop offset="0.3156" stop-color="#0000d4"/><stop offset="0.3355" stop-color="#0004ff"/><stop offset="0.3397" stop-color="#0020ff"/><stop offset="0.3681" stop-color="#00ffff"/><stop offset="0.3837" stop-color="#92ff6d"/><stop offset="0.3879" stop-color="#a8ff57"/><stop offset="0.4149" stop-color="#edff12"/><stop offset="0.4362" stop-color="#efff10"/><stop offset="0.4447" stop-color="#e1ff1e"/><stop offset="0.4645" stop-color="#abff54"/><stop offset="0.4759" stop-color="#5effa1"/><stop offset="0.4858" stop-color="#04fffb"/><stop offset="0.5142" stop-color="#0016ff"/><stop offset="0.5199" stop-color="#0000fd"/><stop offset="0.5752" stop-color="#000096"/><stop offset="1.0000" stop-color="#000090"/></linearGradient><linearGradient id="g14" gradientUnits="userSpaceOnUse" x1="1334.4" y1="0" x2="2680.7" y2="0"><stop offset="0.0000" stop-color="#000090"/><stop offset="0.2957" stop-color="#000096"/><stop offset="0.3156" stop-color="#0000d4"/><stop offset="0.3355" stop-color="#0003ff"/><stop offset="0.3383" stop-color="#0014ff"/><stop offset="0.3681" stop-color="#00ffff"/><stop offset="0.3837" stop-color="#91ff6e"/><stop offset="0.3879" stop-color="#a8ff57"/><stop offset="0.4149" stop-color="#efff10"/><stop offset="0.4348" stop-color="#f2ff0d"/><stop offset="0.4433" stop-color="#e6ff19"/><stop offset="0.4645" stop-color="#aaff55"/><stop offset="0.4759" stop-color="#5affa5"/><stop offset="0.4858" stop-color="#00ffff"/><stop offset="0.5142" stop-color="#0013ff"/><stop offset="0.5199" stop-color="#0000fc"/><stop offset="0.5752" stop-color="#000096"/><stop offset="1.0000" stop-color="#000090"/></linearGradient><linearGradient id="g15" gradientUnits="userSpaceOnUse" x1="1334.4" y1="0" x2="2680.7" y2="0"><stop offset="0.0000" stop-color="#000090"/><stop offset="0.2957" stop-color="#000096"/><stop offset="0.3156" stop-color="#0000d4"/><stop offset="0.3355" stop-color="#0002ff"/><stop offset="0.3383" stop-color="#0012ff"/><stop offset="0.3681" stop-color="#00ffff"/><stop offset="0.3837" stop-color="#90ff6f"/><stop offset="0.3865" stop-color="#a4ff5b"/><stop offset="0.4149" stop-color="#f2ff0d"/><stop offset="0.4348" stop-color="#f5ff0a"/><stop offset="0.4418" stop-color="#ecff13"/><stop offset="0.4645" stop-color="#aaff55"/><stop offset="0.4773" stop-color="#49ffb6"/><stop offset="0.4858" stop-color="#00fbff"/><stop offset="0.5142" stop-color="#0010ff"/><stop offset="0.5199" stop-color="#0000fb"/><stop offset="0.5766" stop-color="#000094"/><stop offset="1.0000" stop-color="#000090"/></linearGradient><linearGradient id="g16" gradientUnits="userSpaceOnUse" x1="1334.4" y1="0" x2="2680.7" y2="0"><stop offset="0.0000" stop-color="#000090"/><stop offset="0.2957" stop-color="#000096"/><stop offset="0.3156" stop-color="#0000d4"/><stop offset="0.3355" stop-color="#0001ff"/><stop offset="0.3383" stop-color="#0011ff"/><stop offset="0.3681" stop-color="#00ffff"/><stop offset="0.3851" stop-color="#9aff65"/><stop offset="0.3879" stop-color="#a9ff56"/><stop offset="0.4149" stop-color="#f4ff0b"/><stop offset="0.4348" stop-color="#f7ff08"/><stop offset="0.4418" stop-color="#eeff11"/><stop offset="0.4645" stop-color="#a9ff56"/><stop offset="0.4773" stop-color="#45ffba"/><stop offset="0.4844" stop-color="#05fffa"/><stop offset="0.4915" stop-color="#00c7ff"/><stop offset="0.5142" stop-color="#000dff"/><stop offset="0.5199" stop-color="#0000fa"/><stop offset="0.5780" stop-color="#000093"/><stop offset="1.0000" stop-color="#000090"/></linearGradient><linearGradient id="g17" gradientUnits="userSpaceOnUse" x1="1334.4" y1="0" x2="2680.7" y2="0"><stop offset="0.0000" stop-color="#000090"/><stop offset="0.2957" stop-color="#000096"/><stop offset="0.3156" stop-color="#0000d3"/><stop offset="0.3355" stop-color="#0000ff"/><stop offset="0.3383" stop-color="#0010ff"/><stop offset="0.3681" stop-color="#00ffff"/><stop offset="0.3865" stop-color="#a5ff5a"/><stop offset="0.4149" stop-color="#f7ff08"/><stop offset="0.4333" stop-color="#faff05"/><stop offset="0.4418" stop-color="#f0ff0f"/><stop offset="0.4645" stop-color="#a8ff57"/><stop offset="0.4787" stop-color="#34ffcb"/><stop offset="0.4844" stop-color="#01fffe"/><stop offset="0.5142" stop-color="#000aff"/><stop offset="0.5199" stop-color="#0000f9"/><stop offset="0.5780" stop-color="#000093"/><stop offset="1.0000" stop-color="#000090"/></linearGradient><linearGradient id="g18" gradientUnits="userSpaceOnUse" x1="1334.4" y1="0" x2="2680.7" y2="0"><stop offset="0.0000" stop-color="#000090"/><stop offset="0.2943" stop-color="#000093"/><stop offset="0.3156" stop-color="#0000d3"/><stop offset="0.3369" stop-color="#0003ff"/><stop offset="0.3681" stop-color="#00ffff"/><stop offset="0.3865" stop-color="#a5ff5a"/><stop offset="0.4163" stop-color="#faff05"/><stop offset="0.4333" stop-color="#fdff02"/><stop offset="0.4404" stop-color="#f7ff08"/><stop offset="0.4645" stop-color="#a7ff58"/><stop offset="0.4844" stop-color="#00fcff"/><stop offset="0.5142" stop-color="#0007ff"/><stop offset="0.5199" stop-color="#0000f8"/><stop offset="0.5794" stop-color="#000093"/><stop offset="1.0000" stop-color="#000090"/></linearGradient><linearGradient id="g19" gradientUnits="userSpaceOnUse" x1="1334.4" y1="0" x2="2680.7" y2="0"><stop offset="0.0000" stop-color="#000090"/><stop offset="0.2943" stop-color="#000093"/><stop offset="0.3156" stop-color="#0000d3"/><stop offset="0.3369" stop-color="#0002ff"/><stop offset="0.3681" stop-color="#00ffff"/><stop offset="0.3865" stop-color="#a5ff5a"/><stop offset="0.4163" stop-color="#fcff03"/><stop offset="0.4390" stop-color="#fcff03"/><stop offset="0.4645" stop-color="#a7ff58"/><stop offset="0.4830" stop-color="#05fffa"/><stop offset="0.4872" stop-color="#00e1ff"/><stop offset="0.5142" stop-color="#0004ff"/><stop offset="0.5794" stop-color="#000093"/><stop offset="1.0000" stop-color="#000090"/></linearGradient><linearGradient id="g20" gradientUnits="userSpaceOnUse" x1="1334.4" y1="0" x2="2680.7" y2="0"><stop offset="0.0000" stop-color="#000090"/><stop offset="0.2943" stop-color="#000093"/><stop offset="0.3156" stop-color="#0000d3"/><stop offset="0.3369" stop-color="#0000ff"/><stop offset="0.3681" stop-color="#00ffff"/><stop offset="0.3865" stop-color="#a6ff59"/><stop offset="0.4163" stop-color="#ffff00"/><stop offset="0.4333" stop-color="#fffc00"/><stop offset="0.4404" stop-color="#fcff03"/><stop offset="0.4645" stop-color="#a6ff59"/><stop offset="0.4830" stop-color="#01fffe"/><stop offset="0.5142" stop-color="#0001ff"/><stop offset="0.5794" stop-color="#000093"/><stop offset="1.0000" stop-color="#000090"/></linearGradient><linearGradient id="g21" gradientUnits="userSpaceOnUse" x1="1334.4" y1="0" x2="2680.7" y2="0"><stop offset="0.0000" stop-color="#000090"/><stop offset="0.2943" stop-color="#000093"/><stop offset="0.3156" stop-color="#0000d3"/><stop offset="0.3369" stop-color="#0000fe"/><stop offset="0.3681" stop-color="#00ffff"/><stop offset="0.3865" stop-color="#a6ff59"/><stop offset="0.4149" stop-color="#fffe00"/><stop offset="0.4319" stop-color="#fffa00"/><stop offset="0.4404" stop-color="#fdff02"/><stop offset="0.4645" stop-color="#a5ff5a"/><stop offset="0.4830" stop-color="#00feff"/><stop offset="0.5142" stop-color="#0000ff"/><stop offset="0.5794" stop-color="#000093"/><stop offset="1.0000" stop-color="#000090"/></linearGradient><linearGradient id="g22" gradientUnits="userSpaceOnUse" x1="1334.4" y1="0" x2="2680.7" y2="0"><stop offset="0.0000" stop-color="#000090"/><stop offset="0.2943" stop-color="#000093"/><stop offset="0.3156" stop-color="#0000d2"/><stop offset="0.3369" stop-color="#0000fe"/><stop offset="0.3539" stop-color="#0088ff"/><stop offset="0.3681" stop-color="#00feff"/><stop offset="0.3865" stop-color="#a5ff5a"/><stop offset="0.4121" stop-color="#faff05"/><stop offset="0.4220" stop-color="#fff800"/><stop offset="0.4390" stop-color="#fffc00"/><stop offset="0.4447" stop-color="#f0ff0f"/><stop offset="0.4645" stop-color="#a4ff5b"/><stop offset="0.4830" stop-color="#00feff"/><stop offset="0.5128" stop-color="#000aff"/><stop offset="0.5142" stop-color="#0000fe"/><stop offset="0.5794" stop-color="#000093"/><stop offset="1.0000" stop-color="#000090"/></linearGradient><linearGradient id="g23" gradientUnits="userSpaceOnUse" x1="1334.4" y1="0" x2="2680.7" y2="0"><stop offset="0.0000" stop-color="#000090"/><stop offset="0.2943" stop-color="#000094"/><stop offset="0.3170" stop-color="#0000d4"/><stop offset="0.3369" stop-color="#0000fd"/><stop offset="0.3468" stop-color="#004aff"/><stop offset="0.3681" stop-color="#00feff"/><stop offset="0.3865" stop-color="#a5ff5a"/><stop offset="0.4035" stop-color="#e2ff1d"/><stop offset="0.4135" stop-color="#fffe00"/><stop offset="0.4305" stop-color="#fff600"/><stop offset="0.4418" stop-color="#fcff03"/><stop offset="0.4603" stop-color="#b5ff4a"/><stop offset="0.4645" stop-color="#a2ff5d"/><stop offset="0.4830" stop-color="#00fdff"/><stop offset="0.5099" stop-color="#001dff"/><stop offset="0.5142" stop-color="#0000fd"/><stop offset="0.5794" stop-color="#000093"/><stop offset="1.0000" stop-color="#000090"/></linearGradient><linearGradient id="g24" gradientUnits="userSpaceOnUse" x1="1334.4" y1="0" x2="2680.7" y2="0"><stop offset="0.0000" stop-color="#000090"/><stop offset="0.2943" stop-color="#000094"/><stop offset="0.3170" stop-color="#0000d3"/><stop offset="0.3369" stop-color="#0000fc"/><stop offset="0.3454" stop-color="#003bff"/><stop offset="0.3681" stop-color="#00feff"/><stop offset="0.3865" stop-color="#a5ff5a"/><stop offset="0.4007" stop-color="#ddff22"/><stop offset="0.4135" stop-color="#fffc00"/><stop offset="0.4305" stop-color="#fff400"/><stop offset="0.4418" stop-color="#fdff02"/><stop offset="0.4560" stop-color="#c8ff37"/><stop offset="0.4645" stop-color="#a1ff5e"/><stop offset="0.4830" stop-color="#00fcff"/><stop offset="0.5085" stop-color="#0025ff"/><stop offset="0.5142" stop-color="#0000fd"/><stop offset="0.5809" stop-color="#000093"/><stop offset="1.0000" stop-color="#000090"/></linearGradient><linearGradient id="g25" gradientUnits="userSpaceOnUse" x1="1334.4" y1="0" x2="2680.7" y2="0"><stop offset="0.0000" stop-color="#000090"/><stop offset="0.2943" stop-color="#000094"/><stop offset="0.3170" stop-color="#0000d3"/><stop offset="0.3369" stop-color="#0000fb"/><stop offset="0.3454" stop-color="#0038ff"/><stop offset="0.3681" stop-color="#00fdff"/><stop offset="0.3865" stop-color="#a5ff5a"/><stop offset="0.3993" stop-color="#dbff24"/><stop offset="0.4121" stop-color="#fffe00"/><stop offset="0.4206" stop-color="#fff400"/><stop offset="0.4376" stop-color="#fff600"/><stop offset="0.4433" stop-color="#faff05"/><stop offset="0.4546" stop-color="#cfff30"/><stop offset="0.4645" stop-color="#a0ff5f"/><stop offset="0.4830" stop-color="#00fcff"/><stop offset="0.5085" stop-color="#0022ff"/><stop offset="0.5142" stop-color="#0000fc"/><stop offset="0.5809" stop-color="#000093"/><stop offset="1.0000" stop-color="#000090"/></linearGradient><linearGradient id="g26" gradientUnits="userSpaceOnUse" x1="1334.4" y1="0" x2="2680.7" y2="0"><stop offset="0.0000" stop-color="#000090"/><stop offset="0.2943" stop-color="#000095"/><stop offset="0.3184" stop-color="#0000d5"/><stop offset="0.3369" stop-color="#0000fb"/><stop offset="0.3440" stop-color="#0029ff"/><stop offset="0.3681" stop-color="#00fdff"/><stop offset="0.3865" stop-color="#a4ff5b"/><stop offset="0.3979" stop-color="#daff25"/><stop offset="0.4121" stop-color="#fffc00"/><stop offset="0.4220" stop-color="#fff200"/><stop offset="0.4390" stop-color="#fff600"/><stop offset="0.4433" stop-color="#fcff03"/><stop offset="0.4532" stop-color="#d8ff27"/><stop offset="0.4645" stop-color="#9fff60"/><stop offset="0.4816" stop-color="#09fff6"/><stop offset="0.4830" stop-color="#00fbff"/><stop offset="0.5085" stop-color="#0020ff"/><stop offset="0.5142" stop-color="#0000fb"/><stop offset="0.5809" stop-color="#000093"/><stop offset="1.0000" stop-color="#000090"/></linearGradient><linearGradient id="g27" gradientUnits="userSpaceOnUse" x1="1334.4" y1="0" x2="2680.7" y2="0"><stop offset="0.0000" stop-color="#000090"/><stop offset="0.2943" stop-color="#000095"/><stop offset="0.3184" stop-color="#0000d4"/><stop offset="0.3383" stop-color="#0003ff"/><stop offset="0.3454" stop-color="#0032ff"/><stop offset="0.3681" stop-color="#00fcff"/><stop offset="0.3865" stop-color="#a4ff5b"/><stop offset="0.3979" stop-color="#ddff22"/><stop offset="0.4106" stop-color="#fffd00"/><stop offset="0.4177" stop-color="#fff200"/><stop offset="0.4348" stop-color="#fff200"/><stop offset="0.4433" stop-color="#fdff02"/><stop offset="0.4532" stop-color="#d9ff26"/><stop offset="0.4645" stop-color="#9eff61"/><stop offset="0.4816" stop-color="#08fff7"/><stop offset="0.4830" stop-color="#00faff"/><stop offset="0.5071" stop-color="#0026ff"/><stop offset="0.5142" stop-color="#0000fb"/><stop offset="0.5809" stop-color="#000093"/><stop offset="1.0000" stop-color="#000090"/></linearGradient><linearGradient id="g28" gradientUnits="userSpaceOnUse" x1="1334.4" y1="0" x2="2680.7" y2="0"><stop offset="0.0000" stop-color="#000090"/><stop offset="0.2943" stop-color="#000096"/><stop offset="0.3199" stop-color="#0000d6"/><stop offset="0.3383" stop-color="#0002ff"/><stop offset="0.3454" stop-color="#002fff"/><stop offset="0.3681" stop-color="#00fcff"/><stop offset="0.3865" stop-color="#a4ff5b"/><stop offset="0.3979" stop-color="#e0ff1f"/><stop offset="0.4106" stop-color="#fffb00"/><stop offset="0.4191" stop-color="#ffef00"/><stop offset="0.4362" stop-color="#fff100"/><stop offset="0.4447" stop-color="#fbff04"/><stop offset="0.4532" stop-color="#dbff24"/><stop offset="0.4645" stop-color="#9cff63"/><stop offset="0.4816" stop-color="#08fff7"/><stop offset="0.4844" stop-color="#00edff"/><stop offset="0.5071" stop-color="#0023ff"/><stop offset="0.5128" stop-color="#0003ff"/><stop offset="0.5582" stop-color="#0000b3"/><stop offset="0.5809" stop-color="#000093"/><stop offset="1.0000" stop-color="#000090"/></linearGradient><linearGradient id="g29" gradientUnits="userSpaceOnUse" x1="1334.4" y1="0" x2="2680.7" y2="0"><stop offset="0.0000" stop-color="#000090"/><stop offset="0.2943" stop-color="#000096"/><stop offset="0.3213" stop-color="#0000d8"/><stop offset="0.3383" stop-color="#0001ff"/><stop offset="0.3440" stop-color="#0020ff"/><stop offset="0.3681" stop-color="#00fcff"/><stop offset="0.3865" stop-color="#a4ff5b"/><stop offset="0.3979" stop-color="#e3ff1c"/><stop offset="0.4092" stop-color="#fffc00"/><stop offset="0.4177" stop-color="#ffee00"/><stop offset="0.4348" stop-color="#ffee00"/><stop offset="0.4418" stop-color="#fff900"/><stop offset="0.4489" stop-color="#efff10"/><stop offset="0.4560" stop-color="#ccff33"/><stop offset="0.4660" stop-color="#8fff70"/><stop offset="0.4816" stop-color="#07fff8"/><stop offset="0.4844" stop-color="#00ecff"/><stop offset="0.5071" stop-color="#0020ff"/><stop offset="0.5128" stop-color="#0002ff"/><stop offset="0.5511" stop-color="#0000bd"/><stop offset="0.5823" stop-color="#000093"/><stop offset="1.0000" stop-color="#000090"/></linearGradient><linearGradient id="g30" gradientUnits="userSpaceOnUse" x1="1334.4" y1="0" x2="2680.7" y2="0"><stop offset="0.0000" stop-color="#000090"/><stop offset="0.2943" stop-color="#000096"/><stop offset="0.3227" stop-color="#0000da"/><stop offset="0.3369" stop-color="#0000f8"/><stop offset="0.3397" stop-color="#0007ff"/><stop offset="0.3440" stop-color="#001dff"/><stop offset="0.3681" stop-color="#00fbff"/><stop offset="0.3879" stop-color="#acff53"/><stop offset="0.3979" stop-color="#e6ff19"/><stop offset="0.4092" stop-color="#fffa00"/><stop offset="0.4177" stop-color="#ffed00"/><stop offset="0.4348" stop-color="#ffed00"/><stop offset="0.4418" stop-color="#fff700"/><stop offset="0.4475" stop-color="#f6ff09"/><stop offset="0.4532" stop-color="#deff21"/><stop offset="0.4660" stop-color="#8eff71"/><stop offset="0.4816" stop-color="#06fff9"/><stop offset="0.4844" stop-color="#00ebff"/><stop offset="0.5071" stop-color="#001dff"/><stop offset="0.5128" stop-color="#0001ff"/><stop offset="0.5383" stop-color="#0000cf"/><stop offset="0.5823" stop-color="#000093"/><stop offset="1.0000" stop-color="#000090"/></linearGradient><linearGradient id="g31" gradientUnits="userSpaceOnUse" x1="1334.4" y1="0" x2="2680.7" y2="0"><stop offset="0.0000" stop-color="#000090"/><stop offset="0.2929" stop-color="#000095"/><stop offset="0.3312" stop-color="#0000eb"/><stop offset="0.3383" stop-color="#0000fe"/><stop offset="0.3440" stop-color="#001aff"/><stop offset="0.3681" stop-color="#00fbff"/><stop offset="0.3879" stop-color="#adff52"/><stop offset="0.3979" stop-color="#e9ff16"/><stop offset="0.4078" stop-color="#fffb00"/><stop offset="0.4177" stop-color="#ffeb00"/><stop offset="0.4348" stop-color="#ffeb00"/><stop offset="0.4418" stop-color="#fff600"/><stop offset="0.4475" stop-color="#f7ff08"/><stop offset="0.4532" stop-color="#e0ff1f"/><stop offset="0.4660" stop-color="#8cff73"/><stop offset="0.4816" stop-color="#06fff9"/><stop offset="0.4858" stop-color="#00ddff"/><stop offset="0.5071" stop-color="#001aff"/><stop offset="0.5128" stop-color="#0000fe"/><stop offset="0.5355" stop-color="#0000d3"/><stop offset="0.5823" stop-color="#000093"/><stop offset="1.0000" stop-color="#000090"/></linearGradient><linearGradient id="g32" gradientUnits="userSpaceOnUse" x1="1334.4" y1="0" x2="2680.7" y2="0"><stop offset="0.0000" stop-color="#000090"/><stop offset="0.2929" stop-color="#000095"/><stop offset="0.3397" stop-color="#0004ff"/><stop offset="0.3440" stop-color="#0016ff"/><stop offset="0.3681" stop-color="#00fbff"/><stop offset="0.3780" stop-color="#56ffa9"/><stop offset="0.3879" stop-color="#adff52"/><stop offset="0.3965" stop-color="#e7ff18"/><stop offset="0.4064" stop-color="#fffd00"/><stop offset="0.4163" stop-color="#ffea00"/><stop offset="0.4333" stop-color="#ffe900"/><stop offset="0.4418" stop-color="#fff400"/><stop offset="0.4475" stop-color="#f9ff06"/><stop offset="0.4518" stop-color="#ebff14"/><stop offset="0.4660" stop-color="#8bff74"/><stop offset="0.4816" stop-color="#05fffa"/><stop offset="0.4872" stop-color="#00cfff"/><stop offset="0.5071" stop-color="#0016ff"/><stop offset="0.5128" stop-color="#0000fd"/><stop offset="0.5468" stop-color="#0000c2"/><stop offset="0.5823" stop-color="#000093"/><stop offset="1.0000" stop-color="#000090"/></linearGradient><linearGradient id="g33" gradientUnits="userSpaceOnUse" x1="1334.4" y1="0" x2="2680.7" y2="0"><stop offset="0.0000" stop-color="#000090"/><stop offset="0.2929" stop-color="#000095"/><stop offset="0.3397" stop-color="#0002ff"/><stop offset="0.3440" stop-color="#0013ff"/><stop offset="0.3681" stop-color="#00faff"/><stop offset="0.3738" stop-color="#2fffd0"/><stop offset="0.3879" stop-color="#adff52"/><stop offset="0.3965" stop-color="#e9ff16"/><stop offset="0.4050" stop-color="#fffe00"/><stop offset="0.4163" stop-color="#ffe800"/><stop offset="0.4333" stop-color="#ffe700"/><stop offset="0.4418" stop-color="#fff300"/><stop offset="0.4475" stop-color="#fbff04"/><stop offset="0.4518" stop-color="#edff12"/><stop offset="0.4660" stop-color="#8aff75"/><stop offset="0.4816" stop-color="#04fffb"/><stop offset="0.4943" stop-color="#008bff"/><stop offset="0.5071" stop-color="#0013ff"/><stop offset="0.5128" stop-color="#0000fc"/><stop offset="0.5468" stop-color="#0000c1"/><stop offset="0.5823" stop-color="#000093"/><stop offset="1.0000" stop-color="#000090"/></linearGradient><linearGradient id="g34" gradientUnits="userSpaceOnUse" x1="1334.4" y1="0" x2="2680.7" y2="0"><stop offset="0.0000" stop-color="#000090"/><stop offset="0.2929" stop-color="#000096"/><stop offset="0.3383" stop-color="#0000fa"/><stop offset="0.3440" stop-color="#0010ff"/><stop offset="0.3681" stop-color="#00faff"/><stop offset="0.3723" stop-color="#22ffdd"/><stop offset="0.3879" stop-color="#adff52"/><stop offset="0.3965" stop-color="#ecff13"/><stop offset="0.4050" stop-color="#fffb00"/><stop offset="0.4163" stop-color="#ffe600"/><stop offset="0.4333" stop-color="#ffe600"/><stop offset="0.4418" stop-color="#fff100"/><stop offset="0.4489" stop-color="#f9ff06"/><stop offset="0.4532" stop-color="#e5ff1a"/><stop offset="0.4674" stop-color="#7dff82"/><stop offset="0.4816" stop-color="#04fffb"/><stop offset="0.5071" stop-color="#0010ff"/><stop offset="0.5128" stop-color="#0000fb"/><stop offset="0.5454" stop-color="#0000c3"/><stop offset="0.5823" stop-color="#000093"/><stop offset="1.0000" stop-color="#000090"/></linearGradient><linearGradient id="g35" gradientUnits="userSpaceOnUse" x1="1334.4" y1="0" x2="2680.7" y2="0"><stop offset="0.0000" stop-color="#000090"/><stop offset="0.2929" stop-color="#000096"/><stop offset="0.3411" stop-color="#0004ff"/><stop offset="0.3440" stop-color="#000dff"/><stop offset="0.3681" stop-color="#00f9ff"/><stop offset="0.3723" stop-color="#22ffdd"/><stop offset="0.3894" stop-color="#b8ff47"/><stop offset="0.3965" stop-color="#efff10"/><stop offset="0.4035" stop-color="#fffc00"/><stop offset="0.4149" stop-color="#ffe500"/><stop offset="0.4319" stop-color="#ffe300"/><stop offset="0.4404" stop-color="#ffec00"/><stop offset="0.4489" stop-color="#fbff04"/><stop offset="0.4532" stop-color="#e6ff19"/><stop offset="0.4674" stop-color="#7cff83"/><stop offset="0.4816" stop-color="#03fffc"/><stop offset="0.5071" stop-color="#000dff"/><stop offset="0.5128" stop-color="#0000fa"/><stop offset="0.5454" stop-color="#0000c2"/><stop offset="0.5837" stop-color="#000093"/><stop offset="1.0000" stop-color="#000090"/></linearGradient><linearGradient id="g36" gradientUnits="userSpaceOnUse" x1="1334.4" y1="0" x2="2680.7" y2="0"><stop offset="0.0000" stop-color="#000090"/><stop offset="0.2929" stop-color="#000096"/><stop offset="0.3411" stop-color="#0001ff"/><stop offset="0.3440" stop-color="#000aff"/><stop offset="0.3681" stop-color="#00f9ff"/><stop offset="0.3709" stop-color="#14ffeb"/><stop offset="0.3908" stop-color="#c4ff3b"/><stop offset="0.3965" stop-color="#f2ff0d"/><stop offset="0.4021" stop-color="#fffd00"/><stop offset="0.4149" stop-color="#ffe400"/><stop offset="0.4319" stop-color="#ffe200"/><stop offset="0.4404" stop-color="#ffea00"/><stop offset="0.4489" stop-color="#fdff02"/><stop offset="0.4532" stop-color="#e8ff17"/><stop offset="0.4702" stop-color="#62ff9d"/><stop offset="0.4816" stop-color="#02fffd"/><stop offset="0.5071" stop-color="#000aff"/><stop offset="0.5128" stop-color="#0000f9"/><stop offset="0.5454" stop-color="#0000c2"/><stop offset="0.5837" stop-color="#000093"/><stop offset="1.0000" stop-color="#000090"/></linearGradient><linearGradient id="g37" gradientUnits="userSpaceOnUse" x1="1334.4" y1="0" x2="2680.7" y2="0"><stop offset="0.0000" stop-color="#000090"/><stop offset="0.2929" stop-color="#000096"/><stop offset="0.3426" stop-color="#0003ff"/><stop offset="0.3440" stop-color="#0007ff"/><stop offset="0.3681" stop-color="#00f9ff"/><stop offset="0.3709" stop-color="#14ffeb"/><stop offset="0.3936" stop-color="#ddff22"/><stop offset="0.3965" stop-color="#f5ff0a"/><stop offset="0.4021" stop-color="#fffa00"/><stop offset="0.4149" stop-color="#ffe200"/><stop offset="0.4319" stop-color="#ffe000"/><stop offset="0.4404" stop-color="#ffe900"/><stop offset="0.4504" stop-color="#fcff03"/><stop offset="0.4702" stop-color="#61ff9e"/><stop offset="0.4816" stop-color="#02fffd"/><stop offset="0.5071" stop-color="#0007ff"/><stop offset="0.5128" stop-color="#0000f8"/><stop offset="0.5454" stop-color="#0000c1"/><stop offset="0.5837" stop-color="#000093"/><stop offset="1.0000" stop-color="#000090"/></linearGradient><linearGradient id="g38" gradientUnits="userSpaceOnUse" x1="1334.4" y1="0" x2="2680.7" y2="0"><stop offset="0.0000" stop-color="#000090"/><stop offset="0.2915" stop-color="#000094"/><stop offset="0.3426" stop-color="#0001ff"/><stop offset="0.3440" stop-color="#0004ff"/><stop offset="0.3681" stop-color="#00f8ff"/><stop offset="0.3709" stop-color="#14ffeb"/><stop offset="0.3965" stop-color="#f8ff07"/><stop offset="0.4021" stop-color="#fff700"/><stop offset="0.4149" stop-color="#ffe000"/><stop offset="0.4319" stop-color="#ffde00"/><stop offset="0.4404" stop-color="#ffe700"/><stop offset="0.4504" stop-color="#feff01"/><stop offset="0.4716" stop-color="#54ffab"/><stop offset="0.4816" stop-color="#01fffe"/><stop offset="0.5071" stop-color="#0004ff"/><stop offset="0.5326" stop-color="#0000d2"/><stop offset="0.5837" stop-color="#000093"/><stop offset="1.0000" stop-color="#000090"/></linearGradient><linearGradient id="g39" gradientUnits="userSpaceOnUse" x1="1334.4" y1="0" x2="2680.7" y2="0"><stop offset="0.0000" stop-color="#000090"/><stop offset="0.2915" stop-color="#000094"/><stop offset="0.3440" stop-color="#0001ff"/><stop offset="0.3681" stop-color="#00f8ff"/><stop offset="0.3709" stop-color="#13ffec"/><stop offset="0.3965" stop-color="#fbff04"/><stop offset="0.4064" stop-color="#ffeb00"/><stop offset="0.4163" stop-color="#ffde00"/><stop offset="0.4333" stop-color="#ffdd00"/><stop offset="0.4418" stop-color="#ffe900"/><stop offset="0.4504" stop-color="#fffe00"/><stop offset="0.4560" stop-color="#d5ff2a"/><stop offset="0.4816" stop-color="#00ffff"/><stop offset="0.5071" stop-color="#0001ff"/><stop offset="0.5440" stop-color="#0000c2"/><stop offset="0.5837" stop-color="#000093"/><stop offset="1.0000" stop-color="#000090"/></linearGradient><linearGradient id="g40" gradientUnits="userSpaceOnUse" x1="1334.4" y1="0" x2="2680.7" y2="0"><stop offset="0.0000" stop-color="#000090"/><stop offset="0.2915" stop-color="#000094"/><stop offset="0.3440" stop-color="#0000fe"/><stop offset="0.3652" stop-color="#00d9ff"/><stop offset="0.3681" stop-color="#00f6ff"/><stop offset="0.3695" stop-color="#05fffa"/><stop offset="0.3965" stop-color="#fcff03"/><stop offset="0.4135" stop-color="#ffdc00"/><stop offset="0.4305" stop-color="#ffd900"/><stop offset="0.4404" stop-color="#ffe300"/><stop offset="0.4504" stop-color="#fffd00"/><stop offset="0.4532" stop-color="#eeff11"/><stop offset="0.4816" stop-color="#00feff"/><stop offset="0.5071" stop-color="#0000ff"/><stop offset="0.5426" stop-color="#0000c2"/><stop offset="0.5837" stop-color="#000093"/><stop offset="1.0000" stop-color="#000090"/></linearGradient><linearGradient id="g41" gradientUnits="userSpaceOnUse" x1="1334.4" y1="0" x2="2680.7" y2="0"><stop offset="0.0000" stop-color="#000090"/><stop offset="0.2915" stop-color="#000094"/><stop offset="0.3440" stop-color="#0000fd"/><stop offset="0.3525" stop-color="#004cff"/><stop offset="0.3695" stop-color="#03fffc"/><stop offset="0.3965" stop-color="#fbff04"/><stop offset="0.4135" stop-color="#ffd900"/><stop offset="0.4305" stop-color="#ffd500"/><stop offset="0.4404" stop-color="#ffdf00"/><stop offset="0.4518" stop-color="#fbff04"/><stop offset="0.4816" stop-color="#00fdff"/><stop offset="0.5057" stop-color="#000bff"/><stop offset="0.5071" stop-color="#0000fe"/><stop offset="0.5411" stop-color="#0000c3"/><stop offset="0.5851" stop-color="#000093"/><stop offset="1.0000" stop-color="#000090"/></linearGradient><linearGradient id="g42" gradientUnits="userSpaceOnUse" x1="1334.4" y1="0" x2="2680.7" y2="0"><stop offset="0.0000" stop-color="#000090"/><stop offset="0.2915" stop-color="#000094"/><stop offset="0.3440" stop-color="#0000fb"/><stop offset="0.3511" stop-color="#0035ff"/><stop offset="0.3695" stop-color="#01fffe"/><stop offset="0.3965" stop-color="#fbff04"/><stop offset="0.4121" stop-color="#ffd600"/><stop offset="0.4305" stop-color="#ffd100"/><stop offset="0.4404" stop-color="#ffdc00"/><stop offset="0.4518" stop-color="#fcff03"/><stop offset="0.4816" stop-color="#00fcff"/><stop offset="0.5043" stop-color="#0014ff"/><stop offset="0.5071" stop-color="#0000fd"/><stop offset="0.5397" stop-color="#0000c3"/><stop offset="0.5851" stop-color="#000093"/><stop offset="1.0000" stop-color="#000090"/></linearGradient><linearGradient id="g43" gradientUnits="userSpaceOnUse" x1="1334.4" y1="0" x2="2680.7" y2="0"><stop offset="0.0000" stop-color="#000090"/><stop offset="0.2915" stop-color="#000094"/><stop offset="0.3440" stop-color="#0000fa"/><stop offset="0.3482" stop-color="#0019ff"/><stop offset="0.3511" stop-color="#002dff"/><stop offset="0.3695" stop-color="#00feff"/><stop offset="0.3965" stop-color="#faff05"/><stop offset="0.4050" stop-color="#ffe700"/><stop offset="0.4135" stop-color="#ffd200"/><stop offset="0.4305" stop-color="#ffcd00"/><stop offset="0.4404" stop-color="#ffd800"/><stop offset="0.4518" stop-color="#feff01"/><stop offset="0.4801" stop-color="#09fff6"/><stop offset="0.4816" stop-color="#00fbff"/><stop offset="0.5043" stop-color="#0011ff"/><stop offset="0.5071" stop-color="#0000fc"/><stop offset="0.5383" stop-color="#0000c3"/><stop offset="0.5851" stop-color="#000093"/><stop offset="1.0000" stop-color="#000090"/></linearGradient><linearGradient id="g44" gradientUnits="userSpaceOnUse" x1="1334.4" y1="0" x2="2680.7" y2="0"><stop offset="0.0000" stop-color="#000090"/><stop offset="0.2929" stop-color="#000096"/><stop offset="0.3440" stop-color="#0000f8"/><stop offset="0.3468" stop-color="#000bff"/><stop offset="0.3511" stop-color="#0026ff"/><stop offset="0.3695" stop-color="#00fcff"/><stop offset="0.3965" stop-color="#faff05"/><stop offset="0.4021" stop-color="#ffee00"/><stop offset="0.4121" stop-color="#ffcf00"/><stop offset="0.4305" stop-color="#ffc900"/><stop offset="0.4404" stop-color="#ffd500"/><stop offset="0.4518" stop-color="#ffff00"/><stop offset="0.4801" stop-color="#08fff7"/><stop offset="0.4816" stop-color="#00f9ff"/><stop offset="0.5043" stop-color="#000eff"/><stop offset="0.5071" stop-color="#0000fb"/><stop offset="0.5369" stop-color="#0000c3"/><stop offset="0.5851" stop-color="#000093"/><stop offset="1.0000" stop-color="#000090"/></linearGradient><linearGradient id="g45" gradientUnits="userSpaceOnUse" x1="1334.4" y1="0" x2="2680.7" y2="0"><stop offset="0.0000" stop-color="#000090"/><stop offset="0.2929" stop-color="#000096"/><stop offset="0.3440" stop-color="#0000f7"/><stop offset="0.3468" stop-color="#0007ff"/><stop offset="0.3511" stop-color="#001eff"/><stop offset="0.3695" stop-color="#00faff"/><stop offset="0.3738" stop-color="#25ffda"/><stop offset="0.3965" stop-color="#faff05"/><stop offset="0.4007" stop-color="#fff200"/><stop offset="0.4121" stop-color="#ffcc00"/><stop offset="0.4291" stop-color="#ffc400"/><stop offset="0.4404" stop-color="#ffd100"/><stop offset="0.4518" stop-color="#fffe00"/><stop offset="0.4560" stop-color="#deff21"/><stop offset="0.4801" stop-color="#07fff8"/><stop offset="0.4816" stop-color="#00f8ff"/><stop offset="0.5043" stop-color="#000bff"/><stop offset="0.5071" stop-color="#0000fa"/><stop offset="0.5369" stop-color="#0000c1"/><stop offset="0.5851" stop-color="#000093"/><stop offset="1.0000" stop-color="#000090"/></linearGradient><linearGradient id="g46" gradientUnits="userSpaceOnUse" x1="1334.4" y1="0" x2="2680.7" y2="0"><stop offset="0.0000" stop-color="#000090"/><stop offset="0.2929" stop-color="#000096"/><stop offset="0.3440" stop-color="#0000f5"/><stop offset="0.3482" stop-color="#000aff"/><stop offset="0.3511" stop-color="#0017ff"/><stop offset="0.3695" stop-color="#00f7ff"/><stop offset="0.3723" stop-color="#16ffe9"/><stop offset="0.3965" stop-color="#f9ff06"/><stop offset="0.4007" stop-color="#fff100"/><stop offset="0.4121" stop-color="#ffc900"/><stop offset="0.4291" stop-color="#ffc000"/><stop offset="0.4404" stop-color="#ffcd00"/><stop offset="0.4518" stop-color="#fffc00"/><stop offset="0.4546" stop-color="#edff12"/><stop offset="0.4801" stop-color="#06fff9"/><stop offset="0.4830" stop-color="#00e8ff"/><stop offset="0.5028" stop-color="#0013ff"/><stop offset="0.5057" stop-color="#0001ff"/><stop offset="0.5355" stop-color="#0000c1"/><stop offset="0.5851" stop-color="#000093"/><stop offset="1.0000" stop-color="#000090"/></linearGradient><linearGradient id="g47" gradientUnits="userSpaceOnUse" x1="1334.4" y1="0" x2="2680.7" y2="0"><stop offset="0.0000" stop-color="#000090"/><stop offset="0.2929" stop-color="#000096"/><stop offset="0.3383" stop-color="#0000e8"/><stop offset="0.3468" stop-color="#0000fe"/><stop offset="0.3511" stop-color="#000fff"/><stop offset="0.3695" stop-color="#00f5ff"/><stop offset="0.3709" stop-color="#07fff8"/><stop offset="0.3965" stop-color="#f9ff06"/><stop offset="0.3993" stop-color="#fff600"/><stop offset="0.4121" stop-color="#ffc500"/><stop offset="0.4291" stop-color="#ffbc00"/><stop offset="0.4404" stop-color="#ffca00"/><stop offset="0.4532" stop-color="#fbff04"/><stop offset="0.4801" stop-color="#05fffa"/><stop offset="0.4830" stop-color="#00e6ff"/><stop offset="0.5028" stop-color="#000fff"/><stop offset="0.5057" stop-color="#0000fe"/><stop offset="0.5355" stop-color="#0000bf"/><stop offset="0.5851" stop-color="#000093"/><stop offset="1.0000" stop-color="#000090"/></linearGradient><linearGradient id="g48" gradientUnits="userSpaceOnUse" x1="1334.4" y1="0" x2="2680.7" y2="0"><stop offset="0.0000" stop-color="#000090"/><stop offset="0.2929" stop-color="#000096"/><stop offset="0.3355" stop-color="#0000e1"/><stop offset="0.3496" stop-color="#0003ff"/><stop offset="0.3511" stop-color="#0007ff"/><stop offset="0.3695" stop-color="#00f3ff"/><stop offset="0.3709" stop-color="#05fffa"/><stop offset="0.3965" stop-color="#f9ff06"/><stop offset="0.3993" stop-color="#fff600"/><stop offset="0.4121" stop-color="#ffc200"/><stop offset="0.4291" stop-color="#ffb800"/><stop offset="0.4404" stop-color="#ffc600"/><stop offset="0.4532" stop-color="#fdff02"/><stop offset="0.4801" stop-color="#04fffb"/><stop offset="0.4858" stop-color="#00c6ff"/><stop offset="0.5028" stop-color="#000bff"/><stop offset="0.5043" stop-color="#0001ff"/><stop offset="0.5340" stop-color="#0000bf"/><stop offset="0.5851" stop-color="#000093"/><stop offset="1.0000" stop-color="#000090"/></linearGradient><linearGradient id="g49" gradientUnits="userSpaceOnUse" x1="1334.4" y1="0" x2="2680.7" y2="0"><stop offset="0.0000" stop-color="#000090"/><stop offset="0.2929" stop-color="#000096"/><stop offset="0.3326" stop-color="#0000da"/><stop offset="0.3511" stop-color="#0000ff"/><stop offset="0.3695" stop-color="#00f1ff"/><stop offset="0.3709" stop-color="#03fffc"/><stop offset="0.3965" stop-color="#f8ff07"/><stop offset="0.3993" stop-color="#fff600"/><stop offset="0.4121" stop-color="#ffbf00"/><stop offset="0.4291" stop-color="#ffb400"/><stop offset="0.4404" stop-color="#ffc200"/><stop offset="0.4532" stop-color="#ffff00"/><stop offset="0.4801" stop-color="#03fffc"/><stop offset="0.5028" stop-color="#0008ff"/><stop offset="0.5043" stop-color="#0000fd"/><stop offset="0.5340" stop-color="#0000bd"/><stop offset="0.5851" stop-color="#000093"/><stop offset="1.0000" stop-color="#000090"/></linearGradient><linearGradient id="g50" gradientUnits="userSpaceOnUse" x1="1334.4" y1="0" x2="2680.7" y2="0"><stop offset="0.0000" stop-color="#000090"/><stop offset="0.2915" stop-color="#000095"/><stop offset="0.3340" stop-color="#0000da"/><stop offset="0.3511" stop-color="#0000fe"/><stop offset="0.3667" stop-color="#00c8ff"/><stop offset="0.3709" stop-color="#00feff"/><stop offset="0.3979" stop-color="#feff01"/><stop offset="0.4121" stop-color="#ffbe00"/><stop offset="0.4291" stop-color="#ffb100"/><stop offset="0.4404" stop-color="#ffbe00"/><stop offset="0.4532" stop-color="#fffe00"/><stop offset="0.4801" stop-color="#03fffc"/><stop offset="0.5028" stop-color="#000aff"/><stop offset="0.5043" stop-color="#0000ff"/><stop offset="0.5340" stop-color="#0000bd"/><stop offset="0.5865" stop-color="#000094"/><stop offset="1.0000" stop-color="#000090"/></linearGradient><linearGradient id="g51" gradientUnits="userSpaceOnUse" x1="1334.4" y1="0" x2="2680.7" y2="0"><stop offset="0.0000" stop-color="#000090"/><stop offset="0.2915" stop-color="#000096"/><stop offset="0.3340" stop-color="#0000d7"/><stop offset="0.3511" stop-color="#0000fd"/><stop offset="0.3567" stop-color="#0041ff"/><stop offset="0.3709" stop-color="#00faff"/><stop offset="0.3794" stop-color="#4fffb0"/><stop offset="0.3979" stop-color="#fbff04"/><stop offset="0.4078" stop-color="#ffd000"/><stop offset="0.4135" stop-color="#ffba00"/><stop offset="0.4291" stop-color="#ffad00"/><stop offset="0.4404" stop-color="#ffba00"/><stop offset="0.4504" stop-color="#ffed00"/><stop offset="0.4532" stop-color="#fffe00"/><stop offset="0.4801" stop-color="#03fffc"/><stop offset="0.5028" stop-color="#000cff"/><stop offset="0.5043" stop-color="#0001ff"/><stop offset="0.5326" stop-color="#0000be"/><stop offset="0.5865" stop-color="#000095"/><stop offset="1.0000" stop-color="#000090"/></linearGradient><linearGradient id="g52" gradientUnits="userSpaceOnUse" x1="1334.4" y1="0" x2="2680.7" y2="0"><stop offset="0.0000" stop-color="#000090"/><stop offset="0.2901" stop-color="#000096"/><stop offset="0.3340" stop-color="#0000d4"/><stop offset="0.3511" stop-color="#0000fc"/><stop offset="0.3553" stop-color="#0029ff"/><stop offset="0.3709" stop-color="#00f7ff"/><stop offset="0.3723" stop-color="#07fff8"/><stop offset="0.3979" stop-color="#f7ff08"/><stop offset="0.3993" stop-color="#ffff00"/><stop offset="0.4121" stop-color="#ffbc00"/><stop offset="0.4220" stop-color="#ffad00"/><stop offset="0.4319" stop-color="#ffac00"/><stop offset="0.4404" stop-color="#ffb600"/><stop offset="0.4461" stop-color="#ffd000"/><stop offset="0.4532" stop-color="#fffd00"/><stop offset="0.4801" stop-color="#03fffc"/><stop offset="0.5043" stop-color="#0002ff"/><stop offset="0.5326" stop-color="#0000be"/><stop offset="0.5879" stop-color="#000095"/><stop offset="1.0000" stop-color="#000090"/></linearGradient><linearGradient id="g53" gradientUnits="userSpaceOnUse" x1="1334.4" y1="0" x2="2680.7" y2="0"><stop offset="0.0000" stop-color="#000090"/><stop offset="0.2887" stop-color="#000097"/><stop offset="0.3340" stop-color="#0000d1"/><stop offset="0.3511" stop-color="#0000fb"/><stop offset="0.3539" stop-color="#0014ff"/><stop offset="0.3709" stop-color="#00f3ff"/><stop offset="0.3723" stop-color="#04fffb"/><stop offset="0.3979" stop-color="#f3ff0c"/><stop offset="0.4007" stop-color="#fff900"/><stop offset="0.4135" stop-color="#ffb700"/><stop offset="0.4234" stop-color="#ffa900"/><stop offset="0.4333" stop-color="#ffaa00"/><stop offset="0.4418" stop-color="#ffb700"/><stop offset="0.4461" stop-color="#ffcc00"/><stop offset="0.4532" stop-color="#fffc00"/><stop offset="0.4801" stop-color="#03fffc"/><stop offset="0.5043" stop-color="#0004ff"/><stop offset="0.5326" stop-color="#0000be"/><stop offset="0.5894" stop-color="#000096"/><stop offset="1.0000" stop-color="#000090"/></linearGradient><linearGradient id="g54" gradientUnits="userSpaceOnUse" x1="1334.4" y1="0" x2="2680.7" y2="0"><stop offset="0.0000" stop-color="#000090"/><stop offset="0.2858" stop-color="#000097"/><stop offset="0.3340" stop-color="#0000ce"/><stop offset="0.3511" stop-color="#0000f9"/><stop offset="0.3539" stop-color="#0010ff"/><stop offset="0.3723" stop-color="#00ffff"/><stop offset="0.3979" stop-color="#efff10"/><stop offset="0.4007" stop-color="#fffb00"/><stop offset="0.4135" stop-color="#ffb500"/><stop offset="0.4191" stop-color="#ffaa00"/><stop offset="0.4305" stop-color="#ffa400"/><stop offset="0.4418" stop-color="#ffb200"/><stop offset="0.4461" stop-color="#ffc700"/><stop offset="0.4532" stop-color="#fffb00"/><stop offset="0.4801" stop-color="#03fffc"/><stop offset="0.5043" stop-color="#0005ff"/><stop offset="0.5099" stop-color="#0000f1"/><stop offset="0.5312" stop-color="#0000bf"/><stop offset="0.5922" stop-color="#000096"/><stop offset="1.0000" stop-color="#000090"/></linearGradient><linearGradient id="g55" gradientUnits="userSpaceOnUse" x1="1334.4" y1="0" x2="2680.7" y2="0"><stop offset="0.0000" stop-color="#000090"/><stop offset="0.2844" stop-color="#000097"/><stop offset="0.3340" stop-color="#0000cc"/><stop offset="0.3525" stop-color="#0003ff"/><stop offset="0.3553" stop-color="#001bff"/><stop offset="0.3723" stop-color="#00fcff"/><stop offset="0.3993" stop-color="#f6ff09"/><stop offset="0.4007" stop-color="#fffd00"/><stop offset="0.4149" stop-color="#ffad00"/><stop offset="0.4305" stop-color="#ffa000"/><stop offset="0.4433" stop-color="#ffb100"/><stop offset="0.4532" stop-color="#fffb00"/><stop offset="0.4645" stop-color="#98ff67"/><stop offset="0.4801" stop-color="#03fffc"/><stop offset="0.5043" stop-color="#0006ff"/><stop offset="0.5071" stop-color="#0000f9"/><stop offset="0.5312" stop-color="#0000bf"/><stop offset="0.5965" stop-color="#000094"/><stop offset="1.0000" stop-color="#000090"/></linearGradient><linearGradient id="g56" gradientUnits="userSpaceOnUse" x1="1334.4" y1="0" x2="2680.7" y2="0"><stop offset="0.0000" stop-color="#000090"/><stop offset="0.2830" stop-color="#000097"/><stop offset="0.3340" stop-color="#0000c9"/><stop offset="0.3525" stop-color="#0000ff"/><stop offset="0.3553" stop-color="#0016ff"/><stop offset="0.3723" stop-color="#00f9ff"/><stop offset="0.3752" stop-color="#18ffe7"/><stop offset="0.3993" stop-color="#f3ff0c"/><stop offset="0.4007" stop-color="#feff01"/><stop offset="0.4149" stop-color="#ffab00"/><stop offset="0.4305" stop-color="#ff9d00"/><stop offset="0.4433" stop-color="#ffac00"/><stop offset="0.4518" stop-color="#ffee00"/><stop offset="0.4532" stop-color="#fffa00"/><stop offset="0.4589" stop-color="#ceff31"/><stop offset="0.4801" stop-color="#03fffc"/><stop offset="0.5043" stop-color="#0008ff"/><stop offset="0.5071" stop-color="#0000f9"/><stop offset="0.5298" stop-color="#0000c0"/><stop offset="0.5993" stop-color="#000094"/><stop offset="1.0000" stop-color="#000090"/></linearGradient><linearGradient id="g57" gradientUnits="userSpaceOnUse" x1="1334.4" y1="0" x2="2680.7" y2="0"><stop offset="0.0000" stop-color="#000090"/><stop offset="0.2816" stop-color="#000097"/><stop offset="0.3340" stop-color="#0000c6"/><stop offset="0.3539" stop-color="#0004ff"/><stop offset="0.3567" stop-color="#0024ff"/><stop offset="0.3723" stop-color="#00f6ff"/><stop offset="0.3738" stop-color="#08fff7"/><stop offset="0.4007" stop-color="#fcff03"/><stop offset="0.4163" stop-color="#ffa300"/><stop offset="0.4305" stop-color="#ff9900"/><stop offset="0.4433" stop-color="#ffa700"/><stop offset="0.4475" stop-color="#ffc700"/><stop offset="0.4532" stop-color="#fff900"/><stop offset="0.4560" stop-color="#eaff15"/><stop offset="0.4801" stop-color="#03fffc"/><stop offset="0.5043" stop-color="#0009ff"/><stop offset="0.5057" stop-color="#0000fd"/><stop offset="0.5298" stop-color="#0000bf"/><stop offset="0.6035" stop-color="#000094"/><stop offset="1.0000" stop-color="#000090"/></linearGradient><linearGradient id="g58" gradientUnits="userSpaceOnUse" x1="1334.4" y1="0" x2="2680.7" y2="0"><stop offset="0.0000" stop-color="#000090"/><stop offset="0.2816" stop-color="#000097"/><stop offset="0.3340" stop-color="#0000c3"/><stop offset="0.3539" stop-color="#0000ff"/><stop offset="0.3567" stop-color="#001fff"/><stop offset="0.3723" stop-color="#00f2ff"/><stop offset="0.3738" stop-color="#05fffa"/><stop offset="0.4007" stop-color="#faff05"/><stop offset="0.4050" stop-color="#ffe700"/><stop offset="0.4163" stop-color="#ffa000"/><stop offset="0.4305" stop-color="#ff9600"/><stop offset="0.4433" stop-color="#ffa100"/><stop offset="0.4461" stop-color="#ffb600"/><stop offset="0.4532" stop-color="#fff900"/><stop offset="0.4560" stop-color="#eaff15"/><stop offset="0.4801" stop-color="#03fffc"/><stop offset="0.5043" stop-color="#000aff"/><stop offset="0.5057" stop-color="#0000fe"/><stop offset="0.5298" stop-color="#0000bf"/><stop offset="0.6050" stop-color="#000094"/><stop offset="1.0000" stop-color="#000090"/></linearGradient><linearGradient id="g59" gradientUnits="userSpaceOnUse" x1="1334.4" y1="0" x2="2680.7" y2="0"><stop offset="0.0000" stop-color="#000090"/><stop offset="0.2816" stop-color="#000097"/><stop offset="0.3340" stop-color="#0000c1"/><stop offset="0.3539" stop-color="#0000fc"/><stop offset="0.3553" stop-color="#0008ff"/><stop offset="0.3738" stop-color="#01fffe"/><stop offset="0.4007" stop-color="#f9ff06"/><stop offset="0.4035" stop-color="#fff000"/><stop offset="0.4149" stop-color="#ffa200"/><stop offset="0.4305" stop-color="#ff9100"/><stop offset="0.4433" stop-color="#ff9d00"/><stop offset="0.4461" stop-color="#ffb300"/><stop offset="0.4532" stop-color="#fff700"/><stop offset="0.4546" stop-color="#f9ff06"/><stop offset="0.4801" stop-color="#01fffe"/><stop offset="0.5043" stop-color="#0009ff"/><stop offset="0.5057" stop-color="#0000fc"/><stop offset="0.5298" stop-color="#0000be"/><stop offset="0.6064" stop-color="#000094"/><stop offset="1.0000" stop-color="#000090"/></linearGradient><linearGradient id="g60" gradientUnits="userSpaceOnUse" x1="1334.4" y1="0" x2="2680.7" y2="0"><stop offset="0.0000" stop-color="#000090"/><stop offset="0.2816" stop-color="#000097"/><stop offset="0.3355" stop-color="#0000c4"/><stop offset="0.3539" stop-color="#0000f9"/><stop offset="0.3553" stop-color="#0005ff"/><stop offset="0.3638" stop-color="#0073ff"/><stop offset="0.3738" stop-color="#00fcff"/><stop offset="0.4007" stop-color="#fbff04"/><stop offset="0.4106" stop-color="#ffbb00"/><stop offset="0.4163" stop-color="#ff9700"/><stop offset="0.4305" stop-color="#ff8a00"/><stop offset="0.4433" stop-color="#ff9b00"/><stop offset="0.4475" stop-color="#ffbf00"/><stop offset="0.4546" stop-color="#fbff04"/><stop offset="0.4801" stop-color="#00fbff"/><stop offset="0.5000" stop-color="#002cff"/><stop offset="0.5043" stop-color="#0004ff"/><stop offset="0.5184" stop-color="#0000d6"/><stop offset="0.5298" stop-color="#0000bd"/><stop offset="0.6050" stop-color="#000094"/><stop offset="1.0000" stop-color="#000090"/></linearGradient><linearGradient id="g61" gradientUnits="userSpaceOnUse" x1="1334.4" y1="0" x2="2680.7" y2="0"><stop offset="0.0000" stop-color="#000090"/><stop offset="0.2830" stop-color="#000098"/><stop offset="0.3355" stop-color="#0000c2"/><stop offset="0.3525" stop-color="#0000f3"/><stop offset="0.3553" stop-color="#0002ff"/><stop offset="0.3610" stop-color="#0044ff"/><stop offset="0.3738" stop-color="#00f9ff"/><stop offset="0.3766" stop-color="#17ffe8"/><stop offset="0.4007" stop-color="#fcff03"/><stop offset="0.4149" stop-color="#ff9700"/><stop offset="0.4305" stop-color="#ff8400"/><stop offset="0.4433" stop-color="#ff9800"/><stop offset="0.4504" stop-color="#ffd800"/><stop offset="0.4546" stop-color="#fdff02"/><stop offset="0.4787" stop-color="#07fff8"/><stop offset="0.4816" stop-color="#00e7ff"/><stop offset="0.4972" stop-color="#003dff"/><stop offset="0.5043" stop-color="#0000fe"/><stop offset="0.5071" stop-color="#0000ef"/><stop offset="0.5298" stop-color="#0000bc"/><stop offset="0.6035" stop-color="#000094"/><stop offset="1.0000" stop-color="#000090"/></linearGradient><linearGradient id="g62" gradientUnits="userSpaceOnUse" x1="1334.4" y1="0" x2="2680.7" y2="0"><stop offset="0.0000" stop-color="#000090"/><stop offset="0.2844" stop-color="#000098"/><stop offset="0.3355" stop-color="#0000c1"/><stop offset="0.3482" stop-color="#0000e2"/><stop offset="0.3553" stop-color="#0000fe"/><stop offset="0.3610" stop-color="#003dff"/><stop offset="0.3738" stop-color="#00f5ff"/><stop offset="0.3752" stop-color="#06fff9"/><stop offset="0.4007" stop-color="#fdff02"/><stop offset="0.4149" stop-color="#ff9200"/><stop offset="0.4291" stop-color="#ff7b00"/><stop offset="0.4433" stop-color="#ff9500"/><stop offset="0.4546" stop-color="#ffff00"/><stop offset="0.4787" stop-color="#02fffd"/><stop offset="0.4972" stop-color="#0034ff"/><stop offset="0.5028" stop-color="#0006ff"/><stop offset="0.5071" stop-color="#0000ea"/><stop offset="0.5241" stop-color="#0000c4"/><stop offset="0.5355" stop-color="#0000b7"/><stop offset="0.6021" stop-color="#000094"/><stop offset="1.0000" stop-color="#000090"/></linearGradient><linearGradient id="g63" gradientUnits="userSpaceOnUse" x1="1334.4" y1="0" x2="2680.7" y2="0"><stop offset="0.0000" stop-color="#000090"/><stop offset="0.2844" stop-color="#000097"/><stop offset="0.3355" stop-color="#0000c0"/><stop offset="0.3468" stop-color="#0000da"/><stop offset="0.3553" stop-color="#0000fb"/><stop offset="0.3596" stop-color="#0023ff"/><stop offset="0.3738" stop-color="#00f1ff"/><stop offset="0.3752" stop-color="#03fffc"/><stop offset="0.4007" stop-color="#ffff00"/><stop offset="0.4149" stop-color="#ff8d00"/><stop offset="0.4291" stop-color="#ff7500"/><stop offset="0.4418" stop-color="#ff8b00"/><stop offset="0.4461" stop-color="#ffab00"/><stop offset="0.4546" stop-color="#fffe00"/><stop offset="0.4787" stop-color="#00fdff"/><stop offset="0.4972" stop-color="#002bff"/><stop offset="0.5028" stop-color="#0000ff"/><stop offset="0.5071" stop-color="#0000e6"/><stop offset="0.5170" stop-color="#0000ce"/><stop offset="0.5326" stop-color="#0000b8"/><stop offset="0.6007" stop-color="#000094"/><stop offset="1.0000" stop-color="#000090"/></linearGradient><linearGradient id="g64" gradientUnits="userSpaceOnUse" x1="1334.4" y1="0" x2="2680.7" y2="0"><stop offset="0.0000" stop-color="#000090"/><stop offset="0.2858" stop-color="#000098"/><stop offset="0.3369" stop-color="#0000c1"/><stop offset="0.3468" stop-color="#0000d7"/><stop offset="0.3553" stop-color="#0000f8"/><stop offset="0.3582" stop-color="#0010ff"/><stop offset="0.3610" stop-color="#002fff"/><stop offset="0.3752" stop-color="#00ffff"/><stop offset="0.4007" stop-color="#fffe00"/><stop offset="0.4149" stop-color="#ff8800"/><stop offset="0.4291" stop-color="#ff6e00"/><stop offset="0.4418" stop-color="#ff8700"/><stop offset="0.4461" stop-color="#ffa900"/><stop offset="0.4546" stop-color="#fffc00"/><stop offset="0.4645" stop-color="#97ff68"/><stop offset="0.4773" stop-color="#0afff5"/><stop offset="0.4787" stop-color="#00f9ff"/><stop offset="0.4972" stop-color="#0022ff"/><stop offset="0.5014" stop-color="#0004ff"/><stop offset="0.5085" stop-color="#0000dc"/><stop offset="0.5213" stop-color="#0000c4"/><stop offset="0.5383" stop-color="#0000b3"/><stop offset="0.5993" stop-color="#000094"/><stop offset="1.0000" stop-color="#000090"/></linearGradient><linearGradient id="g65" gradientUnits="userSpaceOnUse" x1="1334.4" y1="0" x2="2680.7" y2="0"><stop offset="0.0000" stop-color="#000090"/><stop offset="0.2858" stop-color="#000097"/><stop offset="0.3383" stop-color="#0000c1"/><stop offset="0.3454" stop-color="#0000cf"/><stop offset="0.3553" stop-color="#0000f6"/><stop offset="0.3567" stop-color="#0001ff"/><stop offset="0.3596" stop-color="#0015ff"/><stop offset="0.3752" stop-color="#00fcff"/><stop offset="0.4007" stop-color="#fffd00"/><stop offset="0.4149" stop-color="#ff8300"/><stop offset="0.4291" stop-color="#ff6700"/><stop offset="0.4418" stop-color="#ff8300"/><stop offset="0.4489" stop-color="#ffc200"/><stop offset="0.4546" stop-color="#fffa00"/><stop offset="0.4574" stop-color="#e6ff19"/><stop offset="0.4773" stop-color="#07fff8"/><stop offset="0.4801" stop-color="#00e4ff"/><stop offset="0.4972" stop-color="#0019ff"/><stop offset="0.5014" stop-color="#0000fd"/><stop offset="0.5085" stop-color="#0000d7"/><stop offset="0.5170" stop-color="#0000c7"/><stop offset="0.5383" stop-color="#0000b2"/><stop offset="0.5965" stop-color="#000094"/><stop offset="1.0000" stop-color="#000090"/></linearGradient><linearGradient id="g66" gradientUnits="userSpaceOnUse" x1="1334.4" y1="0" x2="2680.7" y2="0"><stop offset="0.0000" stop-color="#000090"/><stop offset="0.2872" stop-color="#000098"/><stop offset="0.3426" stop-color="#0000c4"/><stop offset="0.3553" stop-color="#0000f3"/><stop offset="0.3582" stop-color="#0005ff"/><stop offset="0.3596" stop-color="#000dff"/><stop offset="0.3752" stop-color="#00faff"/><stop offset="0.3794" stop-color="#29ffd6"/><stop offset="0.3993" stop-color="#f5ff0a"/><stop offset="0.4007" stop-color="#fffb00"/><stop offset="0.4149" stop-color="#ff7d00"/><stop offset="0.4291" stop-color="#ff6100"/><stop offset="0.4418" stop-color="#ff7f00"/><stop offset="0.4546" stop-color="#fff800"/><stop offset="0.4560" stop-color="#f7ff08"/><stop offset="0.4773" stop-color="#03fffc"/><stop offset="0.4957" stop-color="#001cff"/><stop offset="0.5000" stop-color="#0000fe"/><stop offset="0.5099" stop-color="#0000cd"/><stop offset="0.5383" stop-color="#0000b1"/><stop offset="0.5950" stop-color="#000094"/><stop offset="1.0000" stop-color="#000090"/></linearGradient><linearGradient id="g67" gradientUnits="userSpaceOnUse" x1="1334.4" y1="0" x2="2680.7" y2="0"><stop offset="0.0000" stop-color="#000090"/><stop offset="0.2872" stop-color="#000097"/><stop offset="0.3440" stop-color="#0000c3"/><stop offset="0.3582" stop-color="#0000fe"/><stop offset="0.3596" stop-color="#0006ff"/><stop offset="0.3752" stop-color="#00f7ff"/><stop offset="0.3766" stop-color="#0afff5"/><stop offset="0.3993" stop-color="#f6ff09"/><stop offset="0.4007" stop-color="#fffa00"/><stop offset="0.4149" stop-color="#ff7800"/><stop offset="0.4291" stop-color="#ff5a00"/><stop offset="0.4418" stop-color="#ff7b00"/><stop offset="0.4546" stop-color="#fff600"/><stop offset="0.4560" stop-color="#f9ff06"/><stop offset="0.4773" stop-color="#00feff"/><stop offset="0.4957" stop-color="#0013ff"/><stop offset="0.4986" stop-color="#0000fe"/><stop offset="0.5099" stop-color="#0000c8"/><stop offset="0.5511" stop-color="#0000a9"/><stop offset="0.5936" stop-color="#000094"/><stop offset="1.0000" stop-color="#000090"/></linearGradient><linearGradient id="g68" gradientUnits="userSpaceOnUse" x1="1334.4" y1="0" x2="2680.7" y2="0"><stop offset="0.0000" stop-color="#000090"/><stop offset="0.2887" stop-color="#000098"/><stop offset="0.3440" stop-color="#0000bf"/><stop offset="0.3596" stop-color="#0000fe"/><stop offset="0.3638" stop-color="#003fff"/><stop offset="0.3752" stop-color="#00f4ff"/><stop offset="0.3766" stop-color="#08fff7"/><stop offset="0.3993" stop-color="#f7ff08"/><stop offset="0.4021" stop-color="#ffeb00"/><stop offset="0.4149" stop-color="#ff7300"/><stop offset="0.4291" stop-color="#ff5300"/><stop offset="0.4418" stop-color="#ff7600"/><stop offset="0.4546" stop-color="#fff500"/><stop offset="0.4560" stop-color="#fbff04"/><stop offset="0.4759" stop-color="#0dfff2"/><stop offset="0.4773" stop-color="#00fbff"/><stop offset="0.4957" stop-color="#000aff"/><stop offset="0.4972" stop-color="#0000fc"/><stop offset="0.5113" stop-color="#0000bf"/><stop offset="0.5922" stop-color="#000094"/><stop offset="1.0000" stop-color="#000090"/></linearGradient><linearGradient id="g69" gradientUnits="userSpaceOnUse" x1="1334.4" y1="0" x2="2680.7" y2="0"><stop offset="0.0000" stop-color="#000090"/><stop offset="0.2887" stop-color="#000097"/><stop offset="0.3440" stop-color="#0000bf"/><stop offset="0.3596" stop-color="#0000fc"/><stop offset="0.3624" stop-color="#0023ff"/><stop offset="0.3752" stop-color="#00eeff"/><stop offset="0.3766" stop-color="#02fffd"/><stop offset="0.3993" stop-color="#f9ff06"/><stop offset="0.4021" stop-color="#ffe800"/><stop offset="0.4149" stop-color="#ff6e00"/><stop offset="0.4291" stop-color="#ff4e00"/><stop offset="0.4418" stop-color="#ff7100"/><stop offset="0.4560" stop-color="#feff01"/><stop offset="0.4759" stop-color="#07fff8"/><stop offset="0.4773" stop-color="#00f5ff"/><stop offset="0.4957" stop-color="#0006ff"/><stop offset="0.5000" stop-color="#0000eb"/><stop offset="0.5113" stop-color="#0000be"/><stop offset="0.5922" stop-color="#000094"/><stop offset="1.0000" stop-color="#000090"/></linearGradient><linearGradient id="g70" gradientUnits="userSpaceOnUse" x1="1334.4" y1="0" x2="2680.7" y2="0"><stop offset="0.0000" stop-color="#000090"/><stop offset="0.2901" stop-color="#000098"/><stop offset="0.3454" stop-color="#0000c3"/><stop offset="0.3596" stop-color="#0000fa"/><stop offset="0.3610" stop-color="#000bff"/><stop offset="0.3695" stop-color="#008dff"/><stop offset="0.3766" stop-color="#00fcff"/><stop offset="0.3993" stop-color="#faff05"/><stop offset="0.4050" stop-color="#ffc800"/><stop offset="0.4135" stop-color="#ff7400"/><stop offset="0.4149" stop-color="#ff6900"/><stop offset="0.4291" stop-color="#ff4800"/><stop offset="0.4418" stop-color="#ff6c00"/><stop offset="0.4546" stop-color="#ffed00"/><stop offset="0.4560" stop-color="#fffc00"/><stop offset="0.4645" stop-color="#94ff6b"/><stop offset="0.4759" stop-color="#01fffe"/><stop offset="0.4943" stop-color="#0012ff"/><stop offset="0.4957" stop-color="#0002ff"/><stop offset="0.5057" stop-color="#0000d0"/><stop offset="0.5113" stop-color="#0000be"/><stop offset="0.5894" stop-color="#000094"/><stop offset="1.0000" stop-color="#000090"/></linearGradient><linearGradient id="g71" gradientUnits="userSpaceOnUse" x1="1334.4" y1="0" x2="2680.7" y2="0"><stop offset="0.0000" stop-color="#000090"/><stop offset="0.2915" stop-color="#000098"/><stop offset="0.3454" stop-color="#0000c2"/><stop offset="0.3567" stop-color="#0000ec"/><stop offset="0.3596" stop-color="#0000f8"/><stop offset="0.3610" stop-color="#0008ff"/><stop offset="0.3652" stop-color="#0044ff"/><stop offset="0.3766" stop-color="#00f6ff"/><stop offset="0.3780" stop-color="#09fff6"/><stop offset="0.3993" stop-color="#fbff04"/><stop offset="0.4121" stop-color="#ff7900"/><stop offset="0.4149" stop-color="#ff6300"/><stop offset="0.4291" stop-color="#ff4300"/><stop offset="0.4418" stop-color="#ff6700"/><stop offset="0.4475" stop-color="#ff9d00"/><stop offset="0.4560" stop-color="#fff800"/><stop offset="0.4589" stop-color="#e3ff1c"/><stop offset="0.4745" stop-color="#0dfff2"/><stop offset="0.4759" stop-color="#00faff"/><stop offset="0.4929" stop-color="#001dff"/><stop offset="0.4957" stop-color="#0000fd"/><stop offset="0.5028" stop-color="#0000d7"/><stop offset="0.5113" stop-color="#0000bd"/><stop offset="0.5879" stop-color="#000094"/><stop offset="1.0000" stop-color="#000090"/></linearGradient><linearGradient id="g72" gradientUnits="userSpaceOnUse" x1="1334.4" y1="0" x2="2680.7" y2="0"><stop offset="0.0000" stop-color="#000090"/><stop offset="0.2929" stop-color="#000098"/><stop offset="0.3454" stop-color="#0000c1"/><stop offset="0.3539" stop-color="#0000dd"/><stop offset="0.3610" stop-color="#0005ff"/><stop offset="0.3652" stop-color="#003eff"/><stop offset="0.3766" stop-color="#00f1ff"/><stop offset="0.3780" stop-color="#04fffb"/><stop offset="0.3993" stop-color="#fdff02"/><stop offset="0.4121" stop-color="#ff7200"/><stop offset="0.4149" stop-color="#ff5e00"/><stop offset="0.4291" stop-color="#ff3d00"/><stop offset="0.4418" stop-color="#ff6200"/><stop offset="0.4461" stop-color="#ff8700"/><stop offset="0.4560" stop-color="#fff500"/><stop offset="0.4574" stop-color="#f8ff07"/><stop offset="0.4745" stop-color="#07fff8"/><stop offset="0.4773" stop-color="#00e2ff"/><stop offset="0.4915" stop-color="#0025ff"/><stop offset="0.4943" stop-color="#0008ff"/><stop offset="0.4957" stop-color="#0000f9"/><stop offset="0.5028" stop-color="#0000d4"/><stop offset="0.5128" stop-color="#0000bc"/><stop offset="0.5851" stop-color="#000094"/><stop offset="1.0000" stop-color="#000090"/></linearGradient><linearGradient id="g73" gradientUnits="userSpaceOnUse" x1="1334.4" y1="0" x2="2680.7" y2="0"><stop offset="0.0000" stop-color="#000090"/><stop offset="0.2943" stop-color="#000098"/><stop offset="0.3454" stop-color="#0000c0"/><stop offset="0.3525" stop-color="#0000d3"/><stop offset="0.3610" stop-color="#0002ff"/><stop offset="0.3638" stop-color="#0021ff"/><stop offset="0.3766" stop-color="#00ebff"/><stop offset="0.3780" stop-color="#00feff"/><stop offset="0.3993" stop-color="#feff01"/><stop offset="0.4121" stop-color="#ff6b00"/><stop offset="0.4163" stop-color="#ff5500"/><stop offset="0.4277" stop-color="#ff3700"/><stop offset="0.4418" stop-color="#ff5d00"/><stop offset="0.4447" stop-color="#ff7000"/><stop offset="0.4574" stop-color="#fcff03"/><stop offset="0.4745" stop-color="#02fffd"/><stop offset="0.4915" stop-color="#001eff"/><stop offset="0.4943" stop-color="#0004ff"/><stop offset="0.5014" stop-color="#0000d4"/><stop offset="0.5128" stop-color="#0000bb"/><stop offset="0.5809" stop-color="#000095"/><stop offset="1.0000" stop-color="#000090"/></linearGradient><linearGradient id="g74" gradientUnits="userSpaceOnUse" x1="1334.4" y1="0" x2="2680.7" y2="0"><stop offset="0.0000" stop-color="#000090"/><stop offset="0.2972" stop-color="#000098"/><stop offset="0.3468" stop-color="#0000c1"/><stop offset="0.3525" stop-color="#0000d1"/><stop offset="0.3596" stop-color="#0000f2"/><stop offset="0.3610" stop-color="#0000fd"/><stop offset="0.3638" stop-color="#001bff"/><stop offset="0.3780" stop-color="#00f9ff"/><stop offset="0.3823" stop-color="#31ffce"/><stop offset="0.3993" stop-color="#ffff00"/><stop offset="0.4106" stop-color="#ff7000"/><stop offset="0.4149" stop-color="#ff5400"/><stop offset="0.4277" stop-color="#ff3100"/><stop offset="0.4418" stop-color="#ff5800"/><stop offset="0.4447" stop-color="#ff6a00"/><stop offset="0.4574" stop-color="#ffff00"/><stop offset="0.4730" stop-color="#0ffff0"/><stop offset="0.4745" stop-color="#00fbff"/><stop offset="0.4915" stop-color="#0017ff"/><stop offset="0.4943" stop-color="#0000fe"/><stop offset="0.5000" stop-color="#0000d8"/><stop offset="0.5071" stop-color="#0000c3"/><stop offset="0.5227" stop-color="#0000b4"/><stop offset="0.5794" stop-color="#000095"/><stop offset="1.0000" stop-color="#000090"/></linearGradient><linearGradient id="g75" gradientUnits="userSpaceOnUse" x1="1334.4" y1="0" x2="2680.7" y2="0"><stop offset="0.0000" stop-color="#000090"/><stop offset="0.2986" stop-color="#000097"/><stop offset="0.3482" stop-color="#0000c2"/><stop offset="0.3525" stop-color="#0000ce"/><stop offset="0.3610" stop-color="#0000fa"/><stop offset="0.3638" stop-color="#0015ff"/><stop offset="0.3780" stop-color="#00f5ff"/><stop offset="0.3794" stop-color="#0afff5"/><stop offset="0.3993" stop-color="#fffd00"/><stop offset="0.4106" stop-color="#ff6900"/><stop offset="0.4135" stop-color="#ff5600"/><stop offset="0.4277" stop-color="#ff2b00"/><stop offset="0.4433" stop-color="#ff5900"/><stop offset="0.4461" stop-color="#ff7400"/><stop offset="0.4574" stop-color="#fffb00"/><stop offset="0.4589" stop-color="#f0ff0f"/><stop offset="0.4730" stop-color="#09fff6"/><stop offset="0.4745" stop-color="#00f5ff"/><stop offset="0.4915" stop-color="#0010ff"/><stop offset="0.4943" stop-color="#0000f9"/><stop offset="0.5014" stop-color="#0000cc"/><stop offset="0.5156" stop-color="#0000b8"/><stop offset="0.5766" stop-color="#000095"/><stop offset="1.0000" stop-color="#000090"/></linearGradient><linearGradient id="g76" gradientUnits="userSpaceOnUse" x1="1334.4" y1="0" x2="2680.7" y2="0"><stop offset="0.0000" stop-color="#000090"/><stop offset="0.3000" stop-color="#000097"/><stop offset="0.3511" stop-color="#0000c4"/><stop offset="0.3624" stop-color="#0002ff"/><stop offset="0.3638" stop-color="#000fff"/><stop offset="0.3780" stop-color="#00f0ff"/><stop offset="0.3794" stop-color="#06fff9"/><stop offset="0.3993" stop-color="#fffc00"/><stop offset="0.4106" stop-color="#ff6200"/><stop offset="0.4135" stop-color="#ff5000"/><stop offset="0.4277" stop-color="#ff2500"/><stop offset="0.4433" stop-color="#ff5300"/><stop offset="0.4447" stop-color="#ff5c00"/><stop offset="0.4574" stop-color="#fff700"/><stop offset="0.4589" stop-color="#f3ff0c"/><stop offset="0.4730" stop-color="#04fffb"/><stop offset="0.4915" stop-color="#0009ff"/><stop offset="0.4929" stop-color="#0000fe"/><stop offset="0.5014" stop-color="#0000c8"/><stop offset="0.5199" stop-color="#0000b4"/><stop offset="0.5752" stop-color="#000095"/><stop offset="1.0000" stop-color="#000090"/></linearGradient><linearGradient id="g77" gradientUnits="userSpaceOnUse" x1="1334.4" y1="0" x2="2680.7" y2="0"><stop offset="0.0000" stop-color="#000090"/><stop offset="0.3014" stop-color="#000097"/><stop offset="0.3511" stop-color="#0000c1"/><stop offset="0.3624" stop-color="#0000fc"/><stop offset="0.3638" stop-color="#0009ff"/><stop offset="0.3794" stop-color="#02fffd"/><stop offset="0.3979" stop-color="#f1ff0e"/><stop offset="0.3993" stop-color="#fffb00"/><stop offset="0.4106" stop-color="#ff5b00"/><stop offset="0.4135" stop-color="#ff4900"/><stop offset="0.4277" stop-color="#ff1e00"/><stop offset="0.4447" stop-color="#ff5500"/><stop offset="0.4574" stop-color="#fff400"/><stop offset="0.4589" stop-color="#f7ff08"/><stop offset="0.4730" stop-color="#00fdff"/><stop offset="0.4915" stop-color="#0002ff"/><stop offset="0.5014" stop-color="#0000c4"/><stop offset="0.5709" stop-color="#000094"/><stop offset="1.0000" stop-color="#000090"/></linearGradient><linearGradient id="g78" gradientUnits="userSpaceOnUse" x1="1334.4" y1="0" x2="2680.7" y2="0"><stop offset="0.0000" stop-color="#000090"/><stop offset="0.3028" stop-color="#000098"/><stop offset="0.3511" stop-color="#0000bf"/><stop offset="0.3638" stop-color="#0003ff"/><stop offset="0.3794" stop-color="#00f4ff"/><stop offset="0.3809" stop-color="#09fff6"/><stop offset="0.3993" stop-color="#fffc00"/><stop offset="0.4106" stop-color="#ff5300"/><stop offset="0.4135" stop-color="#ff4200"/><stop offset="0.4277" stop-color="#ff1600"/><stop offset="0.4433" stop-color="#ff4900"/><stop offset="0.4447" stop-color="#ff5300"/><stop offset="0.4574" stop-color="#fffa00"/><stop offset="0.4589" stop-color="#efff10"/><stop offset="0.4716" stop-color="#08fff7"/><stop offset="0.4745" stop-color="#00dcff"/><stop offset="0.4901" stop-color="#000bff"/><stop offset="0.4915" stop-color="#0000fa"/><stop offset="0.5014" stop-color="#0000c1"/><stop offset="0.5723" stop-color="#000094"/><stop offset="1.0000" stop-color="#000090"/></linearGradient><linearGradient id="g79" gradientUnits="userSpaceOnUse" x1="1334.4" y1="0" x2="2680.7" y2="0"><stop offset="0.0000" stop-color="#000090"/><stop offset="0.3028" stop-color="#000097"/><stop offset="0.3511" stop-color="#0000bd"/><stop offset="0.3638" stop-color="#0000fa"/><stop offset="0.3681" stop-color="#0035ff"/><stop offset="0.3809" stop-color="#00efff"/><stop offset="0.3823" stop-color="#04fffb"/><stop offset="0.3993" stop-color="#feff01"/><stop offset="0.4078" stop-color="#ff6d00"/><stop offset="0.4106" stop-color="#ff4800"/><stop offset="0.4135" stop-color="#ff3800"/><stop offset="0.4277" stop-color="#ff0c00"/><stop offset="0.4418" stop-color="#ff3d00"/><stop offset="0.4447" stop-color="#ff5900"/><stop offset="0.4489" stop-color="#ff9c00"/><stop offset="0.4560" stop-color="#fffd00"/><stop offset="0.4589" stop-color="#d8ff27"/><stop offset="0.4702" stop-color="#03fffc"/><stop offset="0.4759" stop-color="#00b0ff"/><stop offset="0.4901" stop-color="#0002ff"/><stop offset="0.4972" stop-color="#0000d5"/><stop offset="0.5028" stop-color="#0000bc"/><stop offset="0.5738" stop-color="#000094"/><stop offset="1.0000" stop-color="#000090"/></linearGradient><linearGradient id="g80" gradientUnits="userSpaceOnUse" x1="1334.4" y1="0" x2="2680.7" y2="0"><stop offset="0.0000" stop-color="#000090"/><stop offset="0.3043" stop-color="#000098"/><stop offset="0.3511" stop-color="#0000bb"/><stop offset="0.3638" stop-color="#0000f2"/><stop offset="0.3652" stop-color="#0004ff"/><stop offset="0.3794" stop-color="#00bfff"/><stop offset="0.3837" stop-color="#03fffc"/><stop offset="0.3993" stop-color="#faff05"/><stop offset="0.4007" stop-color="#ffec00"/><stop offset="0.4078" stop-color="#ff6000"/><stop offset="0.4106" stop-color="#ff3e00"/><stop offset="0.4135" stop-color="#ff2f00"/><stop offset="0.4277" stop-color="#ff0100"/><stop offset="0.4418" stop-color="#ff3700"/><stop offset="0.4447" stop-color="#ff5f00"/><stop offset="0.4475" stop-color="#ff9700"/><stop offset="0.4546" stop-color="#fffe00"/><stop offset="0.4589" stop-color="#c1ff3e"/><stop offset="0.4688" stop-color="#01fffe"/><stop offset="0.4730" stop-color="#00b8ff"/><stop offset="0.4872" stop-color="#0017ff"/><stop offset="0.4901" stop-color="#0000f9"/><stop offset="0.4929" stop-color="#0000e5"/><stop offset="0.5028" stop-color="#0000bb"/><stop offset="0.5695" stop-color="#000094"/><stop offset="1.0000" stop-color="#000090"/></linearGradient><linearGradient id="g81" gradientUnits="userSpaceOnUse" x1="1334.4" y1="0" x2="2680.7" y2="0"><stop offset="0.0000" stop-color="#000090"/><stop offset="0.3043" stop-color="#000097"/><stop offset="0.3511" stop-color="#0000ba"/><stop offset="0.3638" stop-color="#0000ea"/><stop offset="0.3652" stop-color="#0000f9"/><stop offset="0.3681" stop-color="#0019ff"/><stop offset="0.3794" stop-color="#00a4ff"/><stop offset="0.3837" stop-color="#00ecff"/><stop offset="0.3851" stop-color="#05fffa"/><stop offset="0.3993" stop-color="#f6ff09"/><stop offset="0.4007" stop-color="#ffef00"/><stop offset="0.4078" stop-color="#ff5200"/><stop offset="0.4121" stop-color="#ff2a00"/><stop offset="0.4248" stop-color="#fd0000"/><stop offset="0.4277" stop-color="#f60000"/><stop offset="0.4319" stop-color="#ff0700"/><stop offset="0.4404" stop-color="#ff2800"/><stop offset="0.4418" stop-color="#ff3200"/><stop offset="0.4447" stop-color="#ff6400"/><stop offset="0.4475" stop-color="#ffa600"/><stop offset="0.4532" stop-color="#fffc00"/><stop offset="0.4589" stop-color="#aaff55"/><stop offset="0.4674" stop-color="#01fffe"/><stop offset="0.4716" stop-color="#00afff"/><stop offset="0.4844" stop-color="#0025ff"/><stop offset="0.4887" stop-color="#0000fd"/><stop offset="0.4915" stop-color="#0000e4"/><stop offset="0.5028" stop-color="#0000b9"/><stop offset="0.5624" stop-color="#000096"/><stop offset="1.0000" stop-color="#000090"/></linearGradient><linearGradient id="g82" gradientUnits="userSpaceOnUse" x1="1334.4" y1="0" x2="2680.7" y2="0"><stop offset="0.0000" stop-color="#000090"/><stop offset="0.3057" stop-color="#000097"/><stop offset="0.3511" stop-color="#0000b8"/><stop offset="0.3638" stop-color="#0000e3"/><stop offset="0.3667" stop-color="#0000fc"/><stop offset="0.3709" stop-color="#0029ff"/><stop offset="0.3794" stop-color="#008aff"/><stop offset="0.3851" stop-color="#00f0ff"/><stop offset="0.3865" stop-color="#0bfff4"/><stop offset="0.3993" stop-color="#f2ff0d"/><stop offset="0.4007" stop-color="#fff100"/><stop offset="0.4078" stop-color="#ff4500"/><stop offset="0.4121" stop-color="#ff2000"/><stop offset="0.4220" stop-color="#fc0000"/><stop offset="0.4277" stop-color="#eb0000"/><stop offset="0.4333" stop-color="#ff0300"/><stop offset="0.4404" stop-color="#ff2000"/><stop offset="0.4418" stop-color="#ff2c00"/><stop offset="0.4447" stop-color="#ff6a00"/><stop offset="0.4475" stop-color="#ffb400"/><stop offset="0.4518" stop-color="#fff800"/><stop offset="0.4546" stop-color="#d8ff27"/><stop offset="0.4603" stop-color="#78ff87"/><stop offset="0.4660" stop-color="#03fffc"/><stop offset="0.4716" stop-color="#0092ff"/><stop offset="0.4830" stop-color="#001fff"/><stop offset="0.4872" stop-color="#0000fd"/><stop offset="0.4915" stop-color="#0000dd"/><stop offset="0.5028" stop-color="#0000b8"/><stop offset="0.5539" stop-color="#000099"/><stop offset="0.6262" stop-color="#000093"/><stop offset="1.0000" stop-color="#000090"/></linearGradient><linearGradient id="g83" gradientUnits="userSpaceOnUse" x1="1334.4" y1="0" x2="2680.7" y2="0"><stop offset="0.0000" stop-color="#000090"/><stop offset="0.3085" stop-color="#000098"/><stop offset="0.3511" stop-color="#0000b7"/><stop offset="0.3638" stop-color="#0000db"/><stop offset="0.3681" stop-color="#0000fb"/><stop offset="0.3709" stop-color="#0017ff"/><stop offset="0.3794" stop-color="#006fff"/><stop offset="0.3865" stop-color="#00f7ff"/><stop offset="0.3879" stop-color="#14ffeb"/><stop offset="0.3993" stop-color="#eeff11"/><stop offset="0.4007" stop-color="#fff400"/><stop offset="0.4078" stop-color="#ff3700"/><stop offset="0.4121" stop-color="#ff1700"/><stop offset="0.4191" stop-color="#fc0000"/><stop offset="0.4277" stop-color="#e00000"/><stop offset="0.4348" stop-color="#ff0000"/><stop offset="0.4404" stop-color="#ff1900"/><stop offset="0.4418" stop-color="#ff2700"/><stop offset="0.4461" stop-color="#ff9900"/><stop offset="0.4475" stop-color="#ffc300"/><stop offset="0.4504" stop-color="#fff200"/><stop offset="0.4518" stop-color="#f4ff0b"/><stop offset="0.4603" stop-color="#61ff9e"/><stop offset="0.4645" stop-color="#06fff9"/><stop offset="0.4674" stop-color="#00c9ff"/><stop offset="0.4702" stop-color="#008cff"/><stop offset="0.4716" stop-color="#0075ff"/><stop offset="0.4830" stop-color="#000dff"/><stop offset="0.4858" stop-color="#0000f9"/><stop offset="0.4929" stop-color="#0000d2"/><stop offset="0.5028" stop-color="#0000b6"/><stop offset="0.5511" stop-color="#000099"/><stop offset="0.6489" stop-color="#000093"/><stop offset="1.0000" stop-color="#000090"/></linearGradient><linearGradient id="g84" gradientUnits="userSpaceOnUse" x1="1334.4" y1="0" x2="2680.7" y2="0"><stop offset="0.0000" stop-color="#000090"/><stop offset="0.3128" stop-color="#000098"/><stop offset="0.3525" stop-color="#0000b8"/><stop offset="0.3638" stop-color="#0000d3"/><stop offset="0.3695" stop-color="#0000f7"/><stop offset="0.3709" stop-color="#0005ff"/><stop offset="0.3794" stop-color="#0054ff"/><stop offset="0.3879" stop-color="#03fffc"/><stop offset="0.3993" stop-color="#eaff15"/><stop offset="0.4007" stop-color="#fff700"/><stop offset="0.4078" stop-color="#ff2a00"/><stop offset="0.4121" stop-color="#ff0d00"/><stop offset="0.4177" stop-color="#f70000"/><stop offset="0.4277" stop-color="#d60000"/><stop offset="0.4362" stop-color="#fd0000"/><stop offset="0.4404" stop-color="#ff1200"/><stop offset="0.4418" stop-color="#ff2100"/><stop offset="0.4461" stop-color="#ffa300"/><stop offset="0.4475" stop-color="#ffd100"/><stop offset="0.4504" stop-color="#fbff04"/><stop offset="0.4603" stop-color="#4affb5"/><stop offset="0.4631" stop-color="#0bfff4"/><stop offset="0.4645" stop-color="#00ebff"/><stop offset="0.4702" stop-color="#006eff"/><stop offset="0.4716" stop-color="#0058ff"/><stop offset="0.4816" stop-color="#0004ff"/><stop offset="0.4929" stop-color="#0000cb"/><stop offset="0.5043" stop-color="#0000b3"/><stop offset="0.5482" stop-color="#000098"/><stop offset="0.6730" stop-color="#000093"/><stop offset="1.0000" stop-color="#000090"/></linearGradient><linearGradient id="g85" gradientUnits="userSpaceOnUse" x1="1334.4" y1="0" x2="2680.7" y2="0"><stop offset="0.0000" stop-color="#000090"/><stop offset="0.3184" stop-color="#000098"/><stop offset="0.3553" stop-color="#0000bb"/><stop offset="0.3652" stop-color="#0000d2"/><stop offset="0.3695" stop-color="#0000e7"/><stop offset="0.3723" stop-color="#0000fe"/><stop offset="0.3794" stop-color="#0039ff"/><stop offset="0.3879" stop-color="#00f1ff"/><stop offset="0.3894" stop-color="#10ffef"/><stop offset="0.3993" stop-color="#e6ff19"/><stop offset="0.4007" stop-color="#fff900"/><stop offset="0.4078" stop-color="#ff1d00"/><stop offset="0.4135" stop-color="#fd0000"/><stop offset="0.4277" stop-color="#cb0000"/><stop offset="0.4390" stop-color="#ff0300"/><stop offset="0.4404" stop-color="#ff0a00"/><stop offset="0.4418" stop-color="#ff1b00"/><stop offset="0.4475" stop-color="#ffe000"/><stop offset="0.4489" stop-color="#fffa00"/><stop offset="0.4532" stop-color="#b6ff49"/><stop offset="0.4603" stop-color="#32ffcd"/><stop offset="0.4617" stop-color="#12ffed"/><stop offset="0.4631" stop-color="#00f1ff"/><stop offset="0.4702" stop-color="#0051ff"/><stop offset="0.4716" stop-color="#003bff"/><stop offset="0.4787" stop-color="#0005ff"/><stop offset="0.4858" stop-color="#0000dc"/><stop offset="0.4943" stop-color="#0000c2"/><stop offset="0.5071" stop-color="#0000b0"/><stop offset="0.5468" stop-color="#000097"/><stop offset="1.0000" stop-color="#000090"/></linearGradient><linearGradient id="g86" gradientUnits="userSpaceOnUse" x1="1334.4" y1="0" x2="2680.7" y2="0"><stop offset="0.0000" stop-color="#000090"/><stop offset="0.3213" stop-color="#000098"/><stop offset="0.3596" stop-color="#0000bd"/><stop offset="0.3681" stop-color="#0000cf"/><stop offset="0.3752" stop-color="#0000ff"/><stop offset="0.3794" stop-color="#001fff"/><stop offset="0.3894" stop-color="#01fffe"/><stop offset="0.4007" stop-color="#fffc00"/><stop offset="0.4078" stop-color="#ff0f00"/><stop offset="0.4106" stop-color="#ff0100"/><stop offset="0.4277" stop-color="#c10000"/><stop offset="0.4404" stop-color="#ff0300"/><stop offset="0.4418" stop-color="#ff1600"/><stop offset="0.4475" stop-color="#ffee00"/><stop offset="0.4489" stop-color="#f5ff0a"/><stop offset="0.4603" stop-color="#1bffe4"/><stop offset="0.4617" stop-color="#00f9ff"/><stop offset="0.4702" stop-color="#0033ff"/><stop offset="0.4716" stop-color="#001eff"/><stop offset="0.4759" stop-color="#0001ff"/><stop offset="0.4830" stop-color="#0000d4"/><stop offset="0.4986" stop-color="#0000b7"/><stop offset="0.5440" stop-color="#000096"/><stop offset="1.0000" stop-color="#000090"/></linearGradient><linearGradient id="g87" gradientUnits="userSpaceOnUse" x1="1334.4" y1="0" x2="2680.7" y2="0"><stop offset="0.0000" stop-color="#000090"/><stop offset="0.3227" stop-color="#000097"/><stop offset="0.3681" stop-color="#0000c1"/><stop offset="0.3794" stop-color="#0004ff"/><stop offset="0.3894" stop-color="#00f0ff"/><stop offset="0.3908" stop-color="#13ffec"/><stop offset="0.4007" stop-color="#ffff00"/><stop offset="0.4078" stop-color="#ff0200"/><stop offset="0.4277" stop-color="#b60000"/><stop offset="0.4404" stop-color="#fa0000"/><stop offset="0.4418" stop-color="#ff1000"/><stop offset="0.4475" stop-color="#fffd00"/><stop offset="0.4603" stop-color="#04fffb"/><stop offset="0.4702" stop-color="#0015ff"/><stop offset="0.4716" stop-color="#0000ff"/><stop offset="0.4830" stop-color="#0000c2"/><stop offset="0.5440" stop-color="#000094"/><stop offset="1.0000" stop-color="#000090"/></linearGradient><linearGradient id="g88" gradientUnits="userSpaceOnUse" x1="1334.4" y1="0" x2="2680.7" y2="0"><stop offset="0.0000" stop-color="#000090"/><stop offset="0.3241" stop-color="#000097"/><stop offset="0.3695" stop-color="#0000c1"/><stop offset="0.3794" stop-color="#0000f4"/><stop offset="0.3809" stop-color="#0012ff"/><stop offset="0.3879" stop-color="#00a7ff"/><stop offset="0.3908" stop-color="#00ffff"/><stop offset="0.3922" stop-color="#2cffd3"/><stop offset="0.4007" stop-color="#ffff00"/><stop offset="0.4078" stop-color="#ff0000"/><stop offset="0.4262" stop-color="#b20000"/><stop offset="0.4277" stop-color="#b20000"/><stop offset="0.4404" stop-color="#f90000"/><stop offset="0.4418" stop-color="#ff0f00"/><stop offset="0.4461" stop-color="#ffc800"/><stop offset="0.4475" stop-color="#fcff03"/><stop offset="0.4589" stop-color="#19ffe6"/><stop offset="0.4603" stop-color="#00f1ff"/><stop offset="0.4631" stop-color="#0099ff"/><stop offset="0.4702" stop-color="#0004ff"/><stop offset="0.4716" stop-color="#0000f0"/><stop offset="0.4830" stop-color="#0000bd"/><stop offset="0.5426" stop-color="#000094"/><stop offset="1.0000" stop-color="#000090"/></linearGradient><linearGradient id="g89" gradientUnits="userSpaceOnUse" x1="1334.4" y1="0" x2="2680.7" y2="0"><stop offset="0.0000" stop-color="#000090"/><stop offset="0.3255" stop-color="#000097"/><stop offset="0.3695" stop-color="#0000be"/><stop offset="0.3794" stop-color="#0000e6"/><stop offset="0.3809" stop-color="#0000ff"/><stop offset="0.3879" stop-color="#007cff"/><stop offset="0.3894" stop-color="#00afff"/><stop offset="0.3908" stop-color="#00ecff"/><stop offset="0.3922" stop-color="#23ffdc"/><stop offset="0.4007" stop-color="#ffff00"/><stop offset="0.4078" stop-color="#ff0000"/><stop offset="0.4262" stop-color="#ad0000"/><stop offset="0.4291" stop-color="#b70000"/><stop offset="0.4404" stop-color="#f90000"/><stop offset="0.4418" stop-color="#ff1000"/><stop offset="0.4461" stop-color="#ffcd00"/><stop offset="0.4475" stop-color="#f9ff06"/><stop offset="0.4589" stop-color="#14ffeb"/><stop offset="0.4603" stop-color="#00e1ff"/><stop offset="0.4617" stop-color="#00a5ff"/><stop offset="0.4631" stop-color="#0072ff"/><stop offset="0.4688" stop-color="#000eff"/><stop offset="0.4702" stop-color="#0000f5"/><stop offset="0.4716" stop-color="#0000e4"/><stop offset="0.4830" stop-color="#0000bb"/><stop offset="0.5326" stop-color="#000096"/><stop offset="1.0000" stop-color="#000090"/></linearGradient><linearGradient id="g90" gradientUnits="userSpaceOnUse" x1="1334.4" y1="0" x2="2680.7" y2="0"><stop offset="0.0000" stop-color="#000090"/><stop offset="0.3298" stop-color="#000097"/><stop offset="0.3695" stop-color="#0000bb"/><stop offset="0.3794" stop-color="#0000d9"/><stop offset="0.3823" stop-color="#0002ff"/><stop offset="0.3879" stop-color="#0051ff"/><stop offset="0.3894" stop-color="#008eff"/><stop offset="0.3908" stop-color="#00d8ff"/><stop offset="0.3922" stop-color="#1bffe4"/><stop offset="0.4007" stop-color="#ffff00"/><stop offset="0.4078" stop-color="#ff0000"/><stop offset="0.4248" stop-color="#aa0000"/><stop offset="0.4277" stop-color="#ac0000"/><stop offset="0.4404" stop-color="#f90000"/><stop offset="0.4418" stop-color="#ff1000"/><stop offset="0.4461" stop-color="#ffd300"/><stop offset="0.4475" stop-color="#f6ff09"/><stop offset="0.4589" stop-color="#10ffef"/><stop offset="0.4603" stop-color="#00d1ff"/><stop offset="0.4617" stop-color="#0087ff"/><stop offset="0.4631" stop-color="#004aff"/><stop offset="0.4674" stop-color="#000fff"/><stop offset="0.4688" stop-color="#0000fa"/><stop offset="0.4716" stop-color="#0000d7"/><stop offset="0.4844" stop-color="#0000b7"/><stop offset="0.5255" stop-color="#000097"/><stop offset="0.6730" stop-color="#000092"/><stop offset="1.0000" stop-color="#000090"/></linearGradient><linearGradient id="g91" gradientUnits="userSpaceOnUse" x1="1334.4" y1="0" x2="2680.7" y2="0"><stop offset="0.0000" stop-color="#000090"/><stop offset="0.3340" stop-color="#000096"/><stop offset="0.3723" stop-color="#0000be"/><stop offset="0.3794" stop-color="#0000cc"/><stop offset="0.3837" stop-color="#0000f8"/><stop offset="0.3865" stop-color="#0017ff"/><stop offset="0.3879" stop-color="#0026ff"/><stop offset="0.3894" stop-color="#006cff"/><stop offset="0.3908" stop-color="#00c5ff"/><stop offset="0.3922" stop-color="#12ffed"/><stop offset="0.4007" stop-color="#ffff00"/><stop offset="0.4078" stop-color="#ff0000"/><stop offset="0.4248" stop-color="#a30000"/><stop offset="0.4277" stop-color="#a90000"/><stop offset="0.4404" stop-color="#f80000"/><stop offset="0.4418" stop-color="#ff1100"/><stop offset="0.4461" stop-color="#ffd800"/><stop offset="0.4475" stop-color="#f3ff0c"/><stop offset="0.4589" stop-color="#0bfff4"/><stop offset="0.4603" stop-color="#00c1ff"/><stop offset="0.4617" stop-color="#0069ff"/><stop offset="0.4631" stop-color="#0022ff"/><stop offset="0.4660" stop-color="#0005ff"/><stop offset="0.4716" stop-color="#0000cb"/><stop offset="0.4887" stop-color="#0000b1"/><stop offset="0.5227" stop-color="#000095"/><stop offset="1.0000" stop-color="#000090"/></linearGradient><linearGradient id="g92" gradientUnits="userSpaceOnUse" x1="1334.4" y1="0" x2="2680.7" y2="0"><stop offset="0.0000" stop-color="#000090"/><stop offset="0.3369" stop-color="#000096"/><stop offset="0.3794" stop-color="#0000bf"/><stop offset="0.3879" stop-color="#0000fc"/><stop offset="0.3894" stop-color="#004cff"/><stop offset="0.3908" stop-color="#00b1ff"/><stop offset="0.3922" stop-color="#09fff6"/><stop offset="0.4007" stop-color="#feff01"/><stop offset="0.4078" stop-color="#ff0100"/><stop offset="0.4248" stop-color="#9d0000"/><stop offset="0.4262" stop-color="#9e0000"/><stop offset="0.4404" stop-color="#f80000"/><stop offset="0.4418" stop-color="#ff1100"/><stop offset="0.4461" stop-color="#ffdc00"/><stop offset="0.4475" stop-color="#f1ff0e"/><stop offset="0.4589" stop-color="#06fff9"/><stop offset="0.4603" stop-color="#00b1ff"/><stop offset="0.4617" stop-color="#004cff"/><stop offset="0.4631" stop-color="#0000fc"/><stop offset="0.4716" stop-color="#0000bf"/><stop offset="0.5213" stop-color="#000093"/><stop offset="1.0000" stop-color="#000090"/></linearGradient><linearGradient id="g93" gradientUnits="userSpaceOnUse" x1="1334.4" y1="0" x2="2680.7" y2="0"><stop offset="0.0000" stop-color="#000090"/><stop offset="0.3369" stop-color="#000095"/><stop offset="0.3794" stop-color="#0000b9"/><stop offset="0.3865" stop-color="#0000df"/><stop offset="0.3879" stop-color="#0000f1"/><stop offset="0.3894" stop-color="#0040ff"/><stop offset="0.3908" stop-color="#00a0ff"/><stop offset="0.3922" stop-color="#00f4ff"/><stop offset="0.3936" stop-color="#25ffda"/><stop offset="0.3993" stop-color="#cfff30"/><stop offset="0.4007" stop-color="#f7ff08"/><stop offset="0.4021" stop-color="#ffd800"/><stop offset="0.4050" stop-color="#ff7500"/><stop offset="0.4078" stop-color="#ff0800"/><stop offset="0.4106" stop-color="#ed0000"/><stop offset="0.4248" stop-color="#a00000"/><stop offset="0.4277" stop-color="#a80000"/><stop offset="0.4404" stop-color="#f50000"/><stop offset="0.4418" stop-color="#ff0e00"/><stop offset="0.4447" stop-color="#ff8a00"/><stop offset="0.4461" stop-color="#ffd100"/><stop offset="0.4475" stop-color="#fcff03"/><stop offset="0.4560" stop-color="#3fffc0"/><stop offset="0.4574" stop-color="#1affe5"/><stop offset="0.4589" stop-color="#00f2ff"/><stop offset="0.4603" stop-color="#00a0ff"/><stop offset="0.4617" stop-color="#0040ff"/><stop offset="0.4631" stop-color="#0000f1"/><stop offset="0.4645" stop-color="#0000df"/><stop offset="0.4716" stop-color="#0000b9"/><stop offset="0.5227" stop-color="#000093"/><stop offset="1.0000" stop-color="#000090"/></linearGradient><linearGradient id="g94" gradientUnits="userSpaceOnUse" x1="1334.4" y1="0" x2="2680.7" y2="0"><stop offset="0.0000" stop-color="#000090"/><stop offset="0.3383" stop-color="#000096"/><stop offset="0.3766" stop-color="#0000b3"/><stop offset="0.3809" stop-color="#0000b7"/><stop offset="0.3865" stop-color="#0000ce"/><stop offset="0.3879" stop-color="#0000e6"/><stop offset="0.3894" stop-color="#0035ff"/><stop offset="0.3908" stop-color="#008fff"/><stop offset="0.3922" stop-color="#00e0ff"/><stop offset="0.3936" stop-color="#18ffe7"/><stop offset="0.3950" stop-color="#4bffb4"/><stop offset="0.4007" stop-color="#efff10"/><stop offset="0.4021" stop-color="#ffe200"/><stop offset="0.4050" stop-color="#ff8300"/><stop offset="0.4064" stop-color="#ff4300"/><stop offset="0.4078" stop-color="#ff0f00"/><stop offset="0.4092" stop-color="#fc0000"/><stop offset="0.4121" stop-color="#e30000"/><stop offset="0.4191" stop-color="#bb0000"/><stop offset="0.4248" stop-color="#a20000"/><stop offset="0.4277" stop-color="#a90000"/><stop offset="0.4376" stop-color="#de0000"/><stop offset="0.4404" stop-color="#f20000"/><stop offset="0.4418" stop-color="#ff0b00"/><stop offset="0.4433" stop-color="#ff3f00"/><stop offset="0.4447" stop-color="#ff7c00"/><stop offset="0.4461" stop-color="#ffc600"/><stop offset="0.4475" stop-color="#fff700"/><stop offset="0.4489" stop-color="#e6ff19"/><stop offset="0.4560" stop-color="#3cffc3"/><stop offset="0.4574" stop-color="#10ffef"/><stop offset="0.4589" stop-color="#00deff"/><stop offset="0.4603" stop-color="#008fff"/><stop offset="0.4617" stop-color="#0035ff"/><stop offset="0.4631" stop-color="#0000e6"/><stop offset="0.4645" stop-color="#0000ce"/><stop offset="0.4716" stop-color="#0000b3"/><stop offset="0.4872" stop-color="#0000ac"/><stop offset="0.5213" stop-color="#000093"/><stop offset="1.0000" stop-color="#000090"/></linearGradient><linearGradient id="g95" gradientUnits="userSpaceOnUse" x1="1334.4" y1="0" x2="2680.7" y2="0"><stop offset="0.0000" stop-color="#000090"/><stop offset="0.3397" stop-color="#000096"/><stop offset="0.3752" stop-color="#0000af"/><stop offset="0.3823" stop-color="#0000b1"/><stop offset="0.3865" stop-color="#0000bd"/><stop offset="0.3879" stop-color="#0000dc"/><stop offset="0.3894" stop-color="#0029ff"/><stop offset="0.3922" stop-color="#00ccff"/><stop offset="0.3936" stop-color="#0bfff4"/><stop offset="0.3950" stop-color="#43ffbc"/><stop offset="0.4007" stop-color="#e7ff18"/><stop offset="0.4021" stop-color="#ffed00"/><stop offset="0.4035" stop-color="#ffc300"/><stop offset="0.4050" stop-color="#ff9100"/><stop offset="0.4064" stop-color="#ff4a00"/><stop offset="0.4078" stop-color="#ff1600"/><stop offset="0.4092" stop-color="#fe0000"/><stop offset="0.4106" stop-color="#eb0000"/><stop offset="0.4163" stop-color="#c50000"/><stop offset="0.4248" stop-color="#a50000"/><stop offset="0.4291" stop-color="#b00000"/><stop offset="0.4362" stop-color="#cf0000"/><stop offset="0.4404" stop-color="#ee0000"/><stop offset="0.4418" stop-color="#ff0800"/><stop offset="0.4433" stop-color="#ff3400"/><stop offset="0.4447" stop-color="#ff6e00"/><stop offset="0.4461" stop-color="#ffbb00"/><stop offset="0.4475" stop-color="#ffed00"/><stop offset="0.4489" stop-color="#efff10"/><stop offset="0.4546" stop-color="#5fffa0"/><stop offset="0.4560" stop-color="#39ffc6"/><stop offset="0.4574" stop-color="#06fff9"/><stop offset="0.4589" stop-color="#00cbff"/><stop offset="0.4617" stop-color="#0029ff"/><stop offset="0.4631" stop-color="#0000dc"/><stop offset="0.4645" stop-color="#0000bd"/><stop offset="0.4716" stop-color="#0000ac"/><stop offset="0.4830" stop-color="#0000ad"/><stop offset="0.5213" stop-color="#000093"/><stop offset="1.0000" stop-color="#000090"/></linearGradient><linearGradient id="g96" gradientUnits="userSpaceOnUse" x1="1334.4" y1="0" x2="2680.7" y2="0"><stop offset="0.0000" stop-color="#000090"/><stop offset="0.3411" stop-color="#000096"/><stop offset="0.3738" stop-color="#0000ac"/><stop offset="0.3851" stop-color="#0000a5"/><stop offset="0.3865" stop-color="#0000ab"/><stop offset="0.3879" stop-color="#0000d1"/><stop offset="0.3894" stop-color="#001dff"/><stop offset="0.3922" stop-color="#00b8ff"/><stop offset="0.3936" stop-color="#00fdff"/><stop offset="0.3950" stop-color="#3bffc4"/><stop offset="0.4007" stop-color="#dfff20"/><stop offset="0.4021" stop-color="#fff800"/><stop offset="0.4035" stop-color="#ffd100"/><stop offset="0.4050" stop-color="#ff9f00"/><stop offset="0.4064" stop-color="#ff5200"/><stop offset="0.4078" stop-color="#ff1d00"/><stop offset="0.4092" stop-color="#ff0100"/><stop offset="0.4106" stop-color="#ea0000"/><stop offset="0.4163" stop-color="#c20000"/><stop offset="0.4248" stop-color="#a70000"/><stop offset="0.4333" stop-color="#be0000"/><stop offset="0.4376" stop-color="#d60000"/><stop offset="0.4404" stop-color="#eb0000"/><stop offset="0.4418" stop-color="#ff0500"/><stop offset="0.4433" stop-color="#ff2900"/><stop offset="0.4447" stop-color="#ff6100"/><stop offset="0.4461" stop-color="#ffb000"/><stop offset="0.4475" stop-color="#ffe200"/><stop offset="0.4489" stop-color="#f8ff07"/><stop offset="0.4532" stop-color="#88ff77"/><stop offset="0.4560" stop-color="#37ffc8"/><stop offset="0.4574" stop-color="#00fbff"/><stop offset="0.4589" stop-color="#00b8ff"/><stop offset="0.4617" stop-color="#001dff"/><stop offset="0.4631" stop-color="#0000d1"/><stop offset="0.4645" stop-color="#0000ab"/><stop offset="0.4674" stop-color="#0000a6"/><stop offset="0.4816" stop-color="#0000ac"/><stop offset="0.5199" stop-color="#000093"/><stop offset="1.0000" stop-color="#000090"/></linearGradient><linearGradient id="g97" gradientUnits="userSpaceOnUse" x1="1334.4" y1="0" x2="2680.7" y2="0"><stop offset="0.0000" stop-color="#000090"/><stop offset="0.3411" stop-color="#000096"/><stop offset="0.3738" stop-color="#0000aa"/><stop offset="0.3851" stop-color="#00009c"/><stop offset="0.3865" stop-color="#0000a1"/><stop offset="0.3879" stop-color="#0000cb"/><stop offset="0.3894" stop-color="#0016ff"/><stop offset="0.3936" stop-color="#00f6ff"/><stop offset="0.3950" stop-color="#36ffc9"/><stop offset="0.3993" stop-color="#b5ff4a"/><stop offset="0.4021" stop-color="#fffe00"/><stop offset="0.4035" stop-color="#ffd900"/><stop offset="0.4050" stop-color="#ffa700"/><stop offset="0.4064" stop-color="#ff5600"/><stop offset="0.4078" stop-color="#ff2100"/><stop offset="0.4092" stop-color="#ff0300"/><stop offset="0.4106" stop-color="#e90000"/><stop offset="0.4163" stop-color="#c00000"/><stop offset="0.4262" stop-color="#a80000"/><stop offset="0.4362" stop-color="#c80000"/><stop offset="0.4404" stop-color="#e90000"/><stop offset="0.4418" stop-color="#ff0300"/><stop offset="0.4433" stop-color="#ff2300"/><stop offset="0.4447" stop-color="#ff5800"/><stop offset="0.4461" stop-color="#ffaa00"/><stop offset="0.4475" stop-color="#ffdb00"/><stop offset="0.4489" stop-color="#feff01"/><stop offset="0.4532" stop-color="#8aff75"/><stop offset="0.4560" stop-color="#35ffca"/><stop offset="0.4574" stop-color="#00f5ff"/><stop offset="0.4617" stop-color="#0016ff"/><stop offset="0.4631" stop-color="#0000cb"/><stop offset="0.4645" stop-color="#0000a1"/><stop offset="0.4674" stop-color="#00009d"/><stop offset="0.4801" stop-color="#0000ab"/><stop offset="0.5199" stop-color="#000093"/><stop offset="1.0000" stop-color="#000090"/></linearGradient><linearGradient id="g98" gradientUnits="userSpaceOnUse" x1="1854.8" y1="0" x2="1959.8" y2="0"><stop offset="0.0000" stop-color="#000080"/><stop offset="0.0318" stop-color="#0003ff"/><stop offset="0.0909" stop-color="#00f5ff"/><stop offset="0.0955" stop-color="#09fff6"/><stop offset="0.1045" stop-color="#2bffd4"/><stop offset="0.1773" stop-color="#d1ff2e"/><stop offset="0.2000" stop-color="#ffff00"/><stop offset="0.2318" stop-color="#ffbb00"/><stop offset="0.2591" stop-color="#ff4000"/><stop offset="0.2636" stop-color="#ff3000"/><stop offset="0.2909" stop-color="#ff0200"/><stop offset="0.3091" stop-color="#e90000"/><stop offset="0.3818" stop-color="#c00000"/><stop offset="0.5091" stop-color="#a90000"/><stop offset="0.6364" stop-color="#c80000"/><stop offset="0.7000" stop-color="#f20000"/><stop offset="0.7091" stop-color="#ff0200"/><stop offset="0.7364" stop-color="#ff3000"/><stop offset="0.7636" stop-color="#ffa600"/><stop offset="0.7682" stop-color="#ffbb00"/><stop offset="0.8000" stop-color="#ffff00"/><stop offset="0.8545" stop-color="#8bff74"/><stop offset="0.8955" stop-color="#2bffd4"/><stop offset="0.9045" stop-color="#09fff6"/><stop offset="0.9091" stop-color="#00f5ff"/><stop offset="0.9682" stop-color="#0003ff"/><stop offset="1.0000" stop-color="#000080"/></linearGradient><linearGradient id="g99" gradientUnits="userSpaceOnUse" x1="1854.8" y1="0" x2="1959.8" y2="0"><stop offset="0.0000" stop-color="#000080"/><stop offset="0.0318" stop-color="#0004ff"/><stop offset="0.0909" stop-color="#00f8ff"/><stop offset="0.1000" stop-color="#1effe1"/><stop offset="0.1727" stop-color="#caff35"/><stop offset="0.2000" stop-color="#fffc00"/><stop offset="0.2273" stop-color="#ffc400"/><stop offset="0.2500" stop-color="#ff6300"/><stop offset="0.2591" stop-color="#ff3a00"/><stop offset="0.2909" stop-color="#ff0100"/><stop offset="0.3091" stop-color="#e80000"/><stop offset="0.3818" stop-color="#c00000"/><stop offset="0.5091" stop-color="#a90000"/><stop offset="0.6364" stop-color="#c70000"/><stop offset="0.7000" stop-color="#f00000"/><stop offset="0.7091" stop-color="#ff0100"/><stop offset="0.7409" stop-color="#ff3a00"/><stop offset="0.7682" stop-color="#ffb400"/><stop offset="0.7773" stop-color="#ffcd00"/><stop offset="0.8000" stop-color="#fffc00"/><stop offset="0.8500" stop-color="#98ff67"/><stop offset="0.9000" stop-color="#1effe1"/><stop offset="0.9091" stop-color="#00f8ff"/><stop offset="0.9682" stop-color="#0004ff"/><stop offset="1.0000" stop-color="#000080"/></linearGradient><linearGradient id="g100" gradientUnits="userSpaceOnUse" x1="1854.8" y1="0" x2="1959.8" y2="0"><stop offset="0.0000" stop-color="#000080"/><stop offset="0.0273" stop-color="#0000f1"/><stop offset="0.0318" stop-color="#0005ff"/><stop offset="0.0909" stop-color="#00faff"/><stop offset="0.1045" stop-color="#2effd1"/><stop offset="0.1773" stop-color="#d6ff29"/><stop offset="0.1955" stop-color="#fbff04"/><stop offset="0.2273" stop-color="#ffc100"/><stop offset="0.2591" stop-color="#ff3400"/><stop offset="0.2909" stop-color="#fe0000"/><stop offset="0.3045" stop-color="#eb0000"/><stop offset="0.3818" stop-color="#c10000"/><stop offset="0.5091" stop-color="#aa0000"/><stop offset="0.6364" stop-color="#c70000"/><stop offset="0.7000" stop-color="#ef0000"/><stop offset="0.7091" stop-color="#fe0000"/><stop offset="0.7409" stop-color="#ff3400"/><stop offset="0.7727" stop-color="#ffc100"/><stop offset="0.8045" stop-color="#fbff04"/><stop offset="0.8591" stop-color="#84ff7b"/><stop offset="0.9000" stop-color="#21ffde"/><stop offset="0.9091" stop-color="#00faff"/><stop offset="0.9682" stop-color="#0005ff"/><stop offset="0.9909" stop-color="#0000a5"/><stop offset="1.0000" stop-color="#000080"/></linearGradient><linearGradient id="g101" gradientUnits="userSpaceOnUse" x1="1854.8" y1="0" x2="1959.8" y2="0"><stop offset="0.0000" stop-color="#000080"/><stop offset="0.0273" stop-color="#0000f2"/><stop offset="0.0318" stop-color="#0006ff"/><stop offset="0.0909" stop-color="#00fdff"/><stop offset="0.1000" stop-color="#24ffdb"/><stop offset="0.1727" stop-color="#ceff31"/><stop offset="0.1955" stop-color="#feff01"/><stop offset="0.2273" stop-color="#ffbb00"/><stop offset="0.2591" stop-color="#ff3200"/><stop offset="0.2909" stop-color="#fc0000"/><stop offset="0.3045" stop-color="#ea0000"/><stop offset="0.3818" stop-color="#c10000"/><stop offset="0.5091" stop-color="#aa0000"/><stop offset="0.6364" stop-color="#c70000"/><stop offset="0.7000" stop-color="#ed0000"/><stop offset="0.7136" stop-color="#ff0500"/><stop offset="0.7409" stop-color="#ff3200"/><stop offset="0.7727" stop-color="#ffbb00"/><stop offset="0.8045" stop-color="#feff01"/><stop offset="0.8591" stop-color="#86ff79"/><stop offset="0.9000" stop-color="#24ffdb"/><stop offset="0.9091" stop-color="#00fdff"/><stop offset="0.9682" stop-color="#0006ff"/><stop offset="0.9818" stop-color="#0000cc"/><stop offset="1.0000" stop-color="#000080"/></linearGradient><linearGradient id="g102" gradientUnits="userSpaceOnUse" x1="1854.8" y1="0" x2="1959.8" y2="0"><stop offset="0.0000" stop-color="#000080"/><stop offset="0.0273" stop-color="#0000f2"/><stop offset="0.0318" stop-color="#0007ff"/><stop offset="0.0909" stop-color="#00ffff"/><stop offset="0.1000" stop-color="#26ffd9"/><stop offset="0.1727" stop-color="#d1ff2e"/><stop offset="0.1955" stop-color="#fffd00"/><stop offset="0.2227" stop-color="#ffc400"/><stop offset="0.2545" stop-color="#ff3c00"/><stop offset="0.2727" stop-color="#ff1900"/><stop offset="0.2909" stop-color="#fb0000"/><stop offset="0.3045" stop-color="#ea0000"/><stop offset="0.3818" stop-color="#c10000"/><stop offset="0.5091" stop-color="#aa0000"/><stop offset="0.6409" stop-color="#ca0000"/><stop offset="0.7045" stop-color="#f30000"/><stop offset="0.7136" stop-color="#ff0300"/><stop offset="0.7409" stop-color="#ff3000"/><stop offset="0.7455" stop-color="#ff3c00"/><stop offset="0.7773" stop-color="#ffc400"/><stop offset="0.8045" stop-color="#fffd00"/><stop offset="0.8545" stop-color="#94ff6b"/><stop offset="0.9000" stop-color="#26ffd9"/><stop offset="0.9091" stop-color="#00ffff"/><stop offset="0.9682" stop-color="#0007ff"/><stop offset="0.9773" stop-color="#0000df"/><stop offset="1.0000" stop-color="#000080"/></linearGradient><linearGradient id="g103" gradientUnits="userSpaceOnUse" x1="1854.8" y1="0" x2="1959.8" y2="0"><stop offset="0.0000" stop-color="#000080"/><stop offset="0.0273" stop-color="#0000f3"/><stop offset="0.0318" stop-color="#0007ff"/><stop offset="0.0909" stop-color="#03fffc"/><stop offset="0.1000" stop-color="#28ffd7"/><stop offset="0.1727" stop-color="#d3ff2c"/><stop offset="0.1955" stop-color="#fffb00"/><stop offset="0.2227" stop-color="#ffc100"/><stop offset="0.2545" stop-color="#ff3600"/><stop offset="0.2864" stop-color="#ff0100"/><stop offset="0.3045" stop-color="#ea0000"/><stop offset="0.3773" stop-color="#c20000"/><stop offset="0.5091" stop-color="#ab0000"/><stop offset="0.6409" stop-color="#ca0000"/><stop offset="0.7045" stop-color="#f10000"/><stop offset="0.7136" stop-color="#ff0100"/><stop offset="0.7455" stop-color="#ff3600"/><stop offset="0.7773" stop-color="#ffc100"/><stop offset="0.8045" stop-color="#fffb00"/><stop offset="0.8409" stop-color="#b6ff49"/><stop offset="0.9000" stop-color="#28ffd7"/><stop offset="0.9091" stop-color="#03fffc"/><stop offset="0.9682" stop-color="#0007ff"/><stop offset="0.9773" stop-color="#0000e0"/><stop offset="1.0000" stop-color="#000080"/></linearGradient><linearGradient id="g104" gradientUnits="userSpaceOnUse" x1="1854.8" y1="0" x2="1959.8" y2="0"><stop offset="0.0000" stop-color="#000080"/><stop offset="0.0273" stop-color="#0000f4"/><stop offset="0.0318" stop-color="#0008ff"/><stop offset="0.0864" stop-color="#00f1ff"/><stop offset="0.0909" stop-color="#06fff9"/><stop offset="0.1000" stop-color="#29ffd6"/><stop offset="0.1682" stop-color="#ccff33"/><stop offset="0.1909" stop-color="#fcff03"/><stop offset="0.2227" stop-color="#ffba00"/><stop offset="0.2545" stop-color="#ff3300"/><stop offset="0.2864" stop-color="#ff0000"/><stop offset="0.3000" stop-color="#ec0000"/><stop offset="0.3773" stop-color="#c20000"/><stop offset="0.5091" stop-color="#ab0000"/><stop offset="0.6409" stop-color="#ca0000"/><stop offset="0.7045" stop-color="#f00000"/><stop offset="0.7136" stop-color="#ff0000"/><stop offset="0.7455" stop-color="#ff3300"/><stop offset="0.7773" stop-color="#ffba00"/><stop offset="0.8091" stop-color="#fcff03"/><stop offset="0.8636" stop-color="#82ff7d"/><stop offset="0.9000" stop-color="#29ffd6"/><stop offset="0.9091" stop-color="#06fff9"/><stop offset="0.9227" stop-color="#00caff"/><stop offset="0.9682" stop-color="#0008ff"/><stop offset="0.9727" stop-color="#0000f4"/><stop offset="1.0000" stop-color="#000080"/></linearGradient><linearGradient id="g105" gradientUnits="userSpaceOnUse" x1="1854.8" y1="0" x2="1959.8" y2="0"><stop offset="0.0000" stop-color="#000080"/><stop offset="0.0273" stop-color="#0000f5"/><stop offset="0.0318" stop-color="#0009ff"/><stop offset="0.0864" stop-color="#00f4ff"/><stop offset="0.0909" stop-color="#08fff7"/><stop offset="0.1000" stop-color="#2bffd4"/><stop offset="0.1682" stop-color="#ceff31"/><stop offset="0.1909" stop-color="#ffff00"/><stop offset="0.2182" stop-color="#ffc400"/><stop offset="0.2500" stop-color="#ff3e00"/><stop offset="0.2636" stop-color="#ff2300"/><stop offset="0.2864" stop-color="#fd0000"/><stop offset="0.3000" stop-color="#ec0000"/><stop offset="0.3773" stop-color="#c30000"/><stop offset="0.5091" stop-color="#ab0000"/><stop offset="0.6409" stop-color="#ca0000"/><stop offset="0.7045" stop-color="#ef0000"/><stop offset="0.7182" stop-color="#ff0500"/><stop offset="0.7455" stop-color="#ff3100"/><stop offset="0.7545" stop-color="#ff5200"/><stop offset="0.7818" stop-color="#ffc400"/><stop offset="0.8091" stop-color="#ffff00"/><stop offset="0.8636" stop-color="#84ff7b"/><stop offset="0.9045" stop-color="#1cffe3"/><stop offset="0.9091" stop-color="#08fff7"/><stop offset="0.9136" stop-color="#00f4ff"/><stop offset="0.9682" stop-color="#0009ff"/><stop offset="0.9727" stop-color="#0000f5"/><stop offset="1.0000" stop-color="#000080"/></linearGradient><linearGradient id="g106" gradientUnits="userSpaceOnUse" x1="1854.8" y1="0" x2="1959.8" y2="0"><stop offset="0.0000" stop-color="#000080"/><stop offset="0.0273" stop-color="#0000f6"/><stop offset="0.0318" stop-color="#000aff"/><stop offset="0.0864" stop-color="#00f6ff"/><stop offset="0.0909" stop-color="#0bfff4"/><stop offset="0.1000" stop-color="#2dffd2"/><stop offset="0.1682" stop-color="#d1ff2e"/><stop offset="0.1909" stop-color="#fffc00"/><stop offset="0.2182" stop-color="#ffc000"/><stop offset="0.2500" stop-color="#ff3800"/><stop offset="0.2864" stop-color="#fb0000"/><stop offset="0.3000" stop-color="#ec0000"/><stop offset="0.3773" stop-color="#c30000"/><stop offset="0.5091" stop-color="#ac0000"/><stop offset="0.6409" stop-color="#c90000"/><stop offset="0.7091" stop-color="#f40000"/><stop offset="0.7227" stop-color="#ff0b00"/><stop offset="0.7500" stop-color="#ff3800"/><stop offset="0.7818" stop-color="#ffc000"/><stop offset="0.8091" stop-color="#fffc00"/><stop offset="0.8591" stop-color="#92ff6d"/><stop offset="0.9045" stop-color="#1fffe0"/><stop offset="0.9091" stop-color="#0bfff4"/><stop offset="0.9136" stop-color="#00f6ff"/><stop offset="0.9682" stop-color="#000aff"/><stop offset="0.9727" stop-color="#0000f6"/><stop offset="1.0000" stop-color="#000080"/></linearGradient><linearGradient id="g107" gradientUnits="userSpaceOnUse" x1="1854.8" y1="0" x2="1959.8" y2="0"><stop offset="0.0000" stop-color="#000080"/><stop offset="0.0273" stop-color="#0000f6"/><stop offset="0.0318" stop-color="#000bff"/><stop offset="0.0864" stop-color="#00f9ff"/><stop offset="0.0955" stop-color="#22ffdd"/><stop offset="0.1636" stop-color="#c9ff36"/><stop offset="0.1864" stop-color="#fbff04"/><stop offset="0.2136" stop-color="#ffc800"/><stop offset="0.2273" stop-color="#ff9300"/><stop offset="0.2500" stop-color="#ff3500"/><stop offset="0.2818" stop-color="#ff0200"/><stop offset="0.3045" stop-color="#e90000"/><stop offset="0.3773" stop-color="#c30000"/><stop offset="0.5091" stop-color="#ac0000"/><stop offset="0.6455" stop-color="#cc0000"/><stop offset="0.7091" stop-color="#f30000"/><stop offset="0.7182" stop-color="#ff0200"/><stop offset="0.7500" stop-color="#ff3500"/><stop offset="0.7818" stop-color="#ffba00"/><stop offset="0.8091" stop-color="#fff900"/><stop offset="0.8182" stop-color="#f1ff0e"/><stop offset="0.8682" stop-color="#7eff81"/><stop offset="0.9045" stop-color="#22ffdd"/><stop offset="0.9136" stop-color="#00f9ff"/><stop offset="0.9682" stop-color="#000bff"/><stop offset="0.9727" stop-color="#0000f6"/><stop offset="1.0000" stop-color="#000080"/></linearGradient><linearGradient id="g108" gradientUnits="userSpaceOnUse" x1="1854.8" y1="0" x2="1959.8" y2="0"><stop offset="0.0000" stop-color="#000080"/><stop offset="0.0273" stop-color="#0000f7"/><stop offset="0.0318" stop-color="#000cff"/><stop offset="0.0864" stop-color="#00fcff"/><stop offset="0.0955" stop-color="#25ffda"/><stop offset="0.1636" stop-color="#ccff33"/><stop offset="0.1864" stop-color="#feff01"/><stop offset="0.2136" stop-color="#ffc400"/><stop offset="0.2455" stop-color="#ff4000"/><stop offset="0.2545" stop-color="#ff2c00"/><stop offset="0.2818" stop-color="#ff0000"/><stop offset="0.2955" stop-color="#ee0000"/><stop offset="0.3773" stop-color="#c30000"/><stop offset="0.5091" stop-color="#ad0000"/><stop offset="0.6455" stop-color="#cc0000"/><stop offset="0.7091" stop-color="#f10000"/><stop offset="0.7182" stop-color="#ff0000"/><stop offset="0.7500" stop-color="#ff3300"/><stop offset="0.7591" stop-color="#ff5300"/><stop offset="0.7864" stop-color="#ffc400"/><stop offset="0.8136" stop-color="#feff01"/><stop offset="0.8682" stop-color="#80ff7f"/><stop offset="0.9045" stop-color="#25ffda"/><stop offset="0.9136" stop-color="#00fcff"/><stop offset="0.9682" stop-color="#000cff"/><stop offset="0.9727" stop-color="#0000f7"/><stop offset="1.0000" stop-color="#000080"/></linearGradient><linearGradient id="g109" gradientUnits="userSpaceOnUse" x1="1854.8" y1="0" x2="1959.8" y2="0"><stop offset="0.0000" stop-color="#000080"/><stop offset="0.0273" stop-color="#0000f8"/><stop offset="0.0364" stop-color="#0021ff"/><stop offset="0.0864" stop-color="#00feff"/><stop offset="0.0955" stop-color="#26ffd9"/><stop offset="0.1636" stop-color="#ceff31"/><stop offset="0.1864" stop-color="#fffe00"/><stop offset="0.2136" stop-color="#ffc000"/><stop offset="0.2455" stop-color="#ff3a00"/><stop offset="0.2818" stop-color="#fe0000"/><stop offset="0.2955" stop-color="#ed0000"/><stop offset="0.3727" stop-color="#c50000"/><stop offset="0.5091" stop-color="#ad0000"/><stop offset="0.6455" stop-color="#cc0000"/><stop offset="0.7091" stop-color="#f00000"/><stop offset="0.7182" stop-color="#fe0000"/><stop offset="0.7545" stop-color="#ff3a00"/><stop offset="0.7864" stop-color="#ffc000"/><stop offset="0.8136" stop-color="#fffe00"/><stop offset="0.8636" stop-color="#8eff71"/><stop offset="0.9045" stop-color="#26ffd9"/><stop offset="0.9136" stop-color="#00feff"/><stop offset="0.9682" stop-color="#000dff"/><stop offset="0.9727" stop-color="#0000f8"/><stop offset="1.0000" stop-color="#000080"/></linearGradient><linearGradient id="g110" gradientUnits="userSpaceOnUse" x1="1854.8" y1="0" x2="1959.8" y2="0"><stop offset="0.0000" stop-color="#000080"/><stop offset="0.0273" stop-color="#0000f9"/><stop offset="0.0364" stop-color="#0022ff"/><stop offset="0.0864" stop-color="#02fffd"/><stop offset="0.0955" stop-color="#28ffd7"/><stop offset="0.1636" stop-color="#d1ff2e"/><stop offset="0.1864" stop-color="#fffb00"/><stop offset="0.2136" stop-color="#ffba00"/><stop offset="0.2455" stop-color="#ff3600"/><stop offset="0.2818" stop-color="#fc0000"/><stop offset="0.3000" stop-color="#ea0000"/><stop offset="0.3727" stop-color="#c50000"/><stop offset="0.5091" stop-color="#ad0000"/><stop offset="0.6455" stop-color="#cc0000"/><stop offset="0.7136" stop-color="#f50000"/><stop offset="0.7227" stop-color="#ff0400"/><stop offset="0.7545" stop-color="#ff3600"/><stop offset="0.7909" stop-color="#ffc800"/><stop offset="0.8136" stop-color="#fffb00"/><stop offset="0.8500" stop-color="#b2ff4d"/><stop offset="0.9045" stop-color="#28ffd7"/><stop offset="0.9136" stop-color="#02fffd"/><stop offset="0.9682" stop-color="#000eff"/><stop offset="0.9727" stop-color="#0000f9"/><stop offset="1.0000" stop-color="#000080"/></linearGradient><linearGradient id="g111" gradientUnits="userSpaceOnUse" x1="1854.8" y1="0" x2="1959.8" y2="0"><stop offset="0.0000" stop-color="#000080"/><stop offset="0.0273" stop-color="#0000fa"/><stop offset="0.0409" stop-color="#0038ff"/><stop offset="0.0818" stop-color="#00f0ff"/><stop offset="0.0864" stop-color="#05fffa"/><stop offset="0.0955" stop-color="#2affd5"/><stop offset="0.1636" stop-color="#d3ff2c"/><stop offset="0.1818" stop-color="#fcff03"/><stop offset="0.2091" stop-color="#ffc500"/><stop offset="0.2409" stop-color="#ff4200"/><stop offset="0.2500" stop-color="#ff2d00"/><stop offset="0.2818" stop-color="#fb0000"/><stop offset="0.3045" stop-color="#e80000"/><stop offset="0.3727" stop-color="#c50000"/><stop offset="0.5091" stop-color="#ae0000"/><stop offset="0.6455" stop-color="#cc0000"/><stop offset="0.7136" stop-color="#f40000"/><stop offset="0.7273" stop-color="#ff0a00"/><stop offset="0.7545" stop-color="#ff3400"/><stop offset="0.7682" stop-color="#ff6800"/><stop offset="0.7909" stop-color="#ffc500"/><stop offset="0.8182" stop-color="#fcff03"/><stop offset="0.8727" stop-color="#7bff84"/><stop offset="0.9045" stop-color="#2affd5"/><stop offset="0.9136" stop-color="#05fffa"/><stop offset="0.9318" stop-color="#00b2ff"/><stop offset="0.9682" stop-color="#000fff"/><stop offset="0.9727" stop-color="#0000fa"/><stop offset="1.0000" stop-color="#000080"/></linearGradient><linearGradient id="g112" gradientUnits="userSpaceOnUse" x1="1854.8" y1="0" x2="1959.8" y2="0"><stop offset="0.0000" stop-color="#000080"/><stop offset="0.0273" stop-color="#0000fb"/><stop offset="0.0727" stop-color="#00c9ff"/><stop offset="0.0818" stop-color="#00f2ff"/><stop offset="0.0864" stop-color="#08fff7"/><stop offset="0.0955" stop-color="#2bffd4"/><stop offset="0.1591" stop-color="#ccff33"/><stop offset="0.1818" stop-color="#ffff00"/><stop offset="0.2091" stop-color="#ffc000"/><stop offset="0.2409" stop-color="#ff3c00"/><stop offset="0.2773" stop-color="#ff0100"/><stop offset="0.2955" stop-color="#ec0000"/><stop offset="0.3727" stop-color="#c50000"/><stop offset="0.5091" stop-color="#ae0000"/><stop offset="0.6455" stop-color="#cc0000"/><stop offset="0.7136" stop-color="#f20000"/><stop offset="0.7227" stop-color="#ff0100"/><stop offset="0.7591" stop-color="#ff3c00"/><stop offset="0.7909" stop-color="#ffc000"/><stop offset="0.8182" stop-color="#ffff00"/><stop offset="0.8727" stop-color="#7eff81"/><stop offset="0.9091" stop-color="#1cffe3"/><stop offset="0.9136" stop-color="#08fff7"/><stop offset="0.9182" stop-color="#00f2ff"/><stop offset="0.9682" stop-color="#0010ff"/><stop offset="0.9727" stop-color="#0000fb"/><stop offset="1.0000" stop-color="#000080"/></linearGradient><linearGradient id="g113" gradientUnits="userSpaceOnUse" x1="1854.8" y1="0" x2="1959.8" y2="0"><stop offset="0.0000" stop-color="#000080"/><stop offset="0.0273" stop-color="#0000fc"/><stop offset="0.0818" stop-color="#00f5ff"/><stop offset="0.0864" stop-color="#0bfff4"/><stop offset="0.0955" stop-color="#2dffd2"/><stop offset="0.1591" stop-color="#ceff31"/><stop offset="0.1818" stop-color="#fffc00"/><stop offset="0.2091" stop-color="#ffb900"/><stop offset="0.2409" stop-color="#ff3800"/><stop offset="0.2773" stop-color="#ff0000"/><stop offset="0.2909" stop-color="#ef0000"/><stop offset="0.3727" stop-color="#c60000"/><stop offset="0.5091" stop-color="#af0000"/><stop offset="0.6500" stop-color="#ce0000"/><stop offset="0.7182" stop-color="#f80000"/><stop offset="0.7273" stop-color="#ff0700"/><stop offset="0.7591" stop-color="#ff3800"/><stop offset="0.7955" stop-color="#ffc800"/><stop offset="0.8182" stop-color="#fffc00"/><stop offset="0.8636" stop-color="#98ff67"/><stop offset="0.9091" stop-color="#1fffe0"/><stop offset="0.9136" stop-color="#0bfff4"/><stop offset="0.9182" stop-color="#00f5ff"/><stop offset="0.9727" stop-color="#0000fc"/><stop offset="1.0000" stop-color="#000080"/></linearGradient><linearGradient id="g114" gradientUnits="userSpaceOnUse" x1="1854.8" y1="0" x2="1959.8" y2="0"><stop offset="0.0000" stop-color="#000080"/><stop offset="0.0273" stop-color="#0000fc"/><stop offset="0.0818" stop-color="#00f7ff"/><stop offset="0.0864" stop-color="#0cfff3"/><stop offset="0.0909" stop-color="#21ffde"/><stop offset="0.1591" stop-color="#d0ff2f"/><stop offset="0.1818" stop-color="#fffa00"/><stop offset="0.2045" stop-color="#ffc600"/><stop offset="0.2409" stop-color="#ff3700"/><stop offset="0.2773" stop-color="#fe0000"/><stop offset="0.2909" stop-color="#ef0000"/><stop offset="0.3727" stop-color="#c60000"/><stop offset="0.5091" stop-color="#af0000"/><stop offset="0.6500" stop-color="#ce0000"/><stop offset="0.7182" stop-color="#f70000"/><stop offset="0.7273" stop-color="#ff0600"/><stop offset="0.7591" stop-color="#ff3700"/><stop offset="0.7955" stop-color="#ffc600"/><stop offset="0.8182" stop-color="#fffa00"/><stop offset="0.8455" stop-color="#c5ff3a"/><stop offset="0.9091" stop-color="#21ffde"/><stop offset="0.9136" stop-color="#0cfff3"/><stop offset="0.9182" stop-color="#00f7ff"/><stop offset="0.9727" stop-color="#0000fc"/><stop offset="1.0000" stop-color="#000080"/></linearGradient><radialGradient id="g115" gradientUnits="userSpaceOnUse" cx="2623.4" cy="854.7" r="768.6"><stop offset="0.8634" stop-color="#000080"/><stop offset="0.8671" stop-color="#0000fc"/><stop offset="0.8745" stop-color="#00f7ff"/><stop offset="0.8752" stop-color="#0cfff3"/><stop offset="0.8758" stop-color="#21ffde"/><stop offset="0.8851" stop-color="#d0ff2f"/><stop offset="0.8882" stop-color="#fffa00"/><stop offset="0.8913" stop-color="#ffc600"/><stop offset="0.8963" stop-color="#ff3700"/><stop offset="0.9012" stop-color="#fe0000"/><stop offset="0.9031" stop-color="#ef0000"/><stop offset="0.9143" stop-color="#c60000"/><stop offset="0.9329" stop-color="#af0000"/><stop offset="0.9522" stop-color="#ce0000"/><stop offset="0.9615" stop-color="#f70000"/><stop offset="0.9627" stop-color="#ff0600"/><stop offset="0.9671" stop-color="#ff3700"/><stop offset="0.9720" stop-color="#ffc600"/><stop offset="0.9752" stop-color="#fffa00"/><stop offset="0.9783" stop-color="#d0ff2f"/><stop offset="0.9876" stop-color="#21ffde"/><stop offset="0.9882" stop-color="#0cfff3"/><stop offset="0.9888" stop-color="#00f7ff"/><stop offset="0.9963" stop-color="#0000fc"/><stop offset="1.0000" stop-color="#000080"/></radialGradient><radialGradient id="g116" gradientUnits="userSpaceOnUse" cx="2623.4" cy="854.7" r="768.6"><stop offset="0.8634" stop-color="#000080"/><stop offset="0.8671" stop-color="#0001ff"/><stop offset="0.8745" stop-color="#02fffd"/><stop offset="0.8758" stop-color="#29ffd6"/><stop offset="0.8845" stop-color="#cfff30"/><stop offset="0.8870" stop-color="#faff05"/><stop offset="0.8888" stop-color="#ffe400"/><stop offset="0.8907" stop-color="#ffc300"/><stop offset="0.8950" stop-color="#ff4400"/><stop offset="0.8969" stop-color="#ff2a00"/><stop offset="0.9006" stop-color="#ff0100"/><stop offset="0.9037" stop-color="#ed0000"/><stop offset="0.9137" stop-color="#c90000"/><stop offset="0.9329" stop-color="#b20000"/><stop offset="0.9522" stop-color="#cf0000"/><stop offset="0.9621" stop-color="#f90000"/><stop offset="0.9640" stop-color="#ff0f00"/><stop offset="0.9677" stop-color="#ff3800"/><stop offset="0.9689" stop-color="#ff5600"/><stop offset="0.9727" stop-color="#ffc300"/><stop offset="0.9758" stop-color="#fffa00"/><stop offset="0.9776" stop-color="#e4ff1b"/><stop offset="0.9839" stop-color="#72ff8d"/><stop offset="0.9882" stop-color="#18ffe7"/><stop offset="0.9888" stop-color="#02fffd"/><stop offset="0.9963" stop-color="#0001ff"/><stop offset="1.0000" stop-color="#000080"/></radialGradient><radialGradient id="g117" gradientUnits="userSpaceOnUse" cx="2623.4" cy="854.7" r="768.6"><stop offset="0.8634" stop-color="#000080"/><stop offset="0.8665" stop-color="#0000ee"/><stop offset="0.8671" stop-color="#0005ff"/><stop offset="0.8739" stop-color="#00f7ff"/><stop offset="0.8745" stop-color="#0efff1"/><stop offset="0.8752" stop-color="#23ffdc"/><stop offset="0.8839" stop-color="#ceff31"/><stop offset="0.8863" stop-color="#faff05"/><stop offset="0.8888" stop-color="#ffd800"/><stop offset="0.8907" stop-color="#ffac00"/><stop offset="0.8944" stop-color="#ff4200"/><stop offset="0.9006" stop-color="#fc0000"/><stop offset="0.9130" stop-color="#cd0000"/><stop offset="0.9329" stop-color="#b50000"/><stop offset="0.9528" stop-color="#d30000"/><stop offset="0.9634" stop-color="#ff0400"/><stop offset="0.9689" stop-color="#ff4200"/><stop offset="0.9739" stop-color="#ffcd00"/><stop offset="0.9764" stop-color="#fff900"/><stop offset="0.9776" stop-color="#efff10"/><stop offset="0.9839" stop-color="#7bff84"/><stop offset="0.9882" stop-color="#23ffdc"/><stop offset="0.9888" stop-color="#0efff1"/><stop offset="0.9894" stop-color="#00f7ff"/><stop offset="0.9963" stop-color="#0005ff"/><stop offset="0.9994" stop-color="#000096"/><stop offset="1.0000" stop-color="#000080"/></radialGradient><radialGradient id="g118" gradientUnits="userSpaceOnUse" cx="2623.4" cy="854.7" r="768.6"><stop offset="0.8634" stop-color="#000080"/><stop offset="0.8671" stop-color="#0004ff"/><stop offset="0.8739" stop-color="#00f6ff"/><stop offset="0.8745" stop-color="#0dfff2"/><stop offset="0.8752" stop-color="#21ffde"/><stop offset="0.8839" stop-color="#ccff33"/><stop offset="0.8870" stop-color="#fffb00"/><stop offset="0.8901" stop-color="#ffc000"/><stop offset="0.8944" stop-color="#ff4500"/><stop offset="0.9006" stop-color="#ff0000"/><stop offset="0.9130" stop-color="#d00000"/><stop offset="0.9329" stop-color="#b80000"/><stop offset="0.9528" stop-color="#d60000"/><stop offset="0.9627" stop-color="#ff0000"/><stop offset="0.9689" stop-color="#ff4500"/><stop offset="0.9739" stop-color="#ffcf00"/><stop offset="0.9764" stop-color="#fffb00"/><stop offset="0.9826" stop-color="#92ff6d"/><stop offset="0.9882" stop-color="#21ffde"/><stop offset="0.9888" stop-color="#0dfff2"/><stop offset="0.9894" stop-color="#00f6ff"/><stop offset="0.9963" stop-color="#0004ff"/><stop offset="1.0000" stop-color="#000080"/></radialGradient><radialGradient id="g119" gradientUnits="userSpaceOnUse" cx="2623.4" cy="854.7" r="768.6"><stop offset="0.8634" stop-color="#000080"/><stop offset="0.8665" stop-color="#0000f1"/><stop offset="0.8671" stop-color="#0008ff"/><stop offset="0.8739" stop-color="#02fffd"/><stop offset="0.8752" stop-color="#28ffd7"/><stop offset="0.8832" stop-color="#cbff34"/><stop offset="0.8863" stop-color="#fffa00"/><stop offset="0.8888" stop-color="#ffcd00"/><stop offset="0.8938" stop-color="#ff4300"/><stop offset="0.9006" stop-color="#fd0000"/><stop offset="0.9130" stop-color="#d20000"/><stop offset="0.9329" stop-color="#bb0000"/><stop offset="0.9534" stop-color="#da0000"/><stop offset="0.9634" stop-color="#ff0300"/><stop offset="0.9696" stop-color="#ff4300"/><stop offset="0.9745" stop-color="#ffcd00"/><stop offset="0.9770" stop-color="#fffa00"/><stop offset="0.9801" stop-color="#cbff34"/><stop offset="0.9882" stop-color="#28ffd7"/><stop offset="0.9894" stop-color="#02fffd"/><stop offset="0.9963" stop-color="#0008ff"/><stop offset="0.9969" stop-color="#0000f1"/><stop offset="1.0000" stop-color="#000080"/></radialGradient><radialGradient id="g120" gradientUnits="userSpaceOnUse" cx="2623.4" cy="854.7" r="768.6"><stop offset="0.8634" stop-color="#000080"/><stop offset="0.8665" stop-color="#0000f4"/><stop offset="0.8671" stop-color="#000dff"/><stop offset="0.8733" stop-color="#00f6ff"/><stop offset="0.8739" stop-color="#0ffff0"/><stop offset="0.8752" stop-color="#2fffd0"/><stop offset="0.8826" stop-color="#caff35"/><stop offset="0.8851" stop-color="#f9ff06"/><stop offset="0.8863" stop-color="#ffed00"/><stop offset="0.8888" stop-color="#ffb700"/><stop offset="0.8932" stop-color="#ff4400"/><stop offset="0.9000" stop-color="#ff0100"/><stop offset="0.9124" stop-color="#d60000"/><stop offset="0.9329" stop-color="#be0000"/><stop offset="0.9540" stop-color="#de0000"/><stop offset="0.9634" stop-color="#ff0100"/><stop offset="0.9702" stop-color="#ff4400"/><stop offset="0.9758" stop-color="#ffd600"/><stop offset="0.9776" stop-color="#fff900"/><stop offset="0.9789" stop-color="#eeff11"/><stop offset="0.9845" stop-color="#80ff7f"/><stop offset="0.9888" stop-color="#22ffdd"/><stop offset="0.9894" stop-color="#0ffff0"/><stop offset="0.9901" stop-color="#00f6ff"/><stop offset="0.9963" stop-color="#000dff"/><stop offset="0.9969" stop-color="#0000f4"/><stop offset="1.0000" stop-color="#000080"/></radialGradient><radialGradient id="g121" gradientUnits="userSpaceOnUse" cx="2623.4" cy="854.7" r="768.6"><stop offset="0.8634" stop-color="#000080"/><stop offset="0.8665" stop-color="#0000f4"/><stop offset="0.8671" stop-color="#000cff"/><stop offset="0.8733" stop-color="#00f5ff"/><stop offset="0.8739" stop-color="#0dfff2"/><stop offset="0.8752" stop-color="#2effd1"/><stop offset="0.8826" stop-color="#c9ff36"/><stop offset="0.8857" stop-color="#fffb00"/><stop offset="0.8882" stop-color="#ffcb00"/><stop offset="0.8932" stop-color="#ff4700"/><stop offset="0.9000" stop-color="#ff0400"/><stop offset="0.9130" stop-color="#d80000"/><stop offset="0.9329" stop-color="#c20000"/><stop offset="0.9540" stop-color="#e10000"/><stop offset="0.9634" stop-color="#ff0400"/><stop offset="0.9702" stop-color="#ff4700"/><stop offset="0.9758" stop-color="#ffd800"/><stop offset="0.9776" stop-color="#fffb00"/><stop offset="0.9839" stop-color="#8bff74"/><stop offset="0.9888" stop-color="#21ffde"/><stop offset="0.9894" stop-color="#0dfff2"/><stop offset="0.9901" stop-color="#00f5ff"/><stop offset="0.9963" stop-color="#000cff"/><stop offset="0.9969" stop-color="#0000f4"/><stop offset="1.0000" stop-color="#000080"/></radialGradient><radialGradient id="g122" gradientUnits="userSpaceOnUse" cx="2623.4" cy="854.7" r="768.6"><stop offset="0.8634" stop-color="#000080"/><stop offset="0.8665" stop-color="#0000f8"/><stop offset="0.8677" stop-color="#0029ff"/><stop offset="0.8733" stop-color="#03fffc"/><stop offset="0.8739" stop-color="#1affe5"/><stop offset="0.8814" stop-color="#bcff43"/><stop offset="0.8845" stop-color="#f8ff07"/><stop offset="0.8857" stop-color="#ffee00"/><stop offset="0.8876" stop-color="#ffc600"/><stop offset="0.8919" stop-color="#ff5300"/><stop offset="0.8944" stop-color="#ff3600"/><stop offset="0.8994" stop-color="#ff0600"/><stop offset="0.9037" stop-color="#f60000"/><stop offset="0.9124" stop-color="#db0000"/><stop offset="0.9329" stop-color="#c50000"/><stop offset="0.9540" stop-color="#e20000"/><stop offset="0.9634" stop-color="#ff0400"/><stop offset="0.9665" stop-color="#ff1d00"/><stop offset="0.9708" stop-color="#ff4800"/><stop offset="0.9727" stop-color="#ff7400"/><stop offset="0.9770" stop-color="#ffe200"/><stop offset="0.9783" stop-color="#fffa00"/><stop offset="0.9807" stop-color="#d4ff2b"/><stop offset="0.9863" stop-color="#5fffa0"/><stop offset="0.9894" stop-color="#1affe5"/><stop offset="0.9901" stop-color="#03fffc"/><stop offset="0.9963" stop-color="#0011ff"/><stop offset="0.9969" stop-color="#0000f8"/><stop offset="1.0000" stop-color="#000080"/></radialGradient><radialGradient id="g123" gradientUnits="userSpaceOnUse" cx="2623.4" cy="854.7" r="768.6"><stop offset="0.8634" stop-color="#000080"/><stop offset="0.8665" stop-color="#0000fc"/><stop offset="0.8727" stop-color="#00f6ff"/><stop offset="0.8733" stop-color="#10ffef"/><stop offset="0.8807" stop-color="#bbff44"/><stop offset="0.8839" stop-color="#f9ff06"/><stop offset="0.8851" stop-color="#ffec00"/><stop offset="0.8882" stop-color="#ffa200"/><stop offset="0.8913" stop-color="#ff5200"/><stop offset="0.8988" stop-color="#ff0900"/><stop offset="0.9031" stop-color="#f90000"/><stop offset="0.9124" stop-color="#de0000"/><stop offset="0.9329" stop-color="#c80000"/><stop offset="0.9547" stop-color="#e60000"/><stop offset="0.9627" stop-color="#ff0300"/><stop offset="0.9658" stop-color="#ff1400"/><stop offset="0.9720" stop-color="#ff5200"/><stop offset="0.9776" stop-color="#ffe000"/><stop offset="0.9789" stop-color="#fff800"/><stop offset="0.9801" stop-color="#edff12"/><stop offset="0.9857" stop-color="#77ff88"/><stop offset="0.9901" stop-color="#10ffef"/><stop offset="0.9907" stop-color="#00f6ff"/><stop offset="0.9969" stop-color="#0000fc"/><stop offset="1.0000" stop-color="#000080"/></radialGradient><radialGradient id="g124" gradientUnits="userSpaceOnUse" cx="2623.4" cy="854.7" r="768.6"><stop offset="0.8634" stop-color="#000080"/><stop offset="0.8665" stop-color="#0000fc"/><stop offset="0.8727" stop-color="#00f5ff"/><stop offset="0.8733" stop-color="#0ffff0"/><stop offset="0.8807" stop-color="#b9ff46"/><stop offset="0.8845" stop-color="#fffb00"/><stop offset="0.8870" stop-color="#ffc400"/><stop offset="0.8913" stop-color="#ff5500"/><stop offset="0.8988" stop-color="#ff0c00"/><stop offset="0.9037" stop-color="#fa0000"/><stop offset="0.9124" stop-color="#e10000"/><stop offset="0.9329" stop-color="#cb0000"/><stop offset="0.9547" stop-color="#e90000"/><stop offset="0.9621" stop-color="#ff0400"/><stop offset="0.9652" stop-color="#ff1000"/><stop offset="0.9720" stop-color="#ff5500"/><stop offset="0.9776" stop-color="#ffe200"/><stop offset="0.9789" stop-color="#fffb00"/><stop offset="0.9832" stop-color="#adff52"/><stop offset="0.9901" stop-color="#0ffff0"/><stop offset="0.9907" stop-color="#00f5ff"/><stop offset="0.9969" stop-color="#0000fc"/><stop offset="1.0000" stop-color="#000080"/></radialGradient><radialGradient id="g125" gradientUnits="userSpaceOnUse" cx="2623.4" cy="854.7" r="768.6"><stop offset="0.8634" stop-color="#000080"/><stop offset="0.8665" stop-color="#0001ff"/><stop offset="0.8727" stop-color="#04fffb"/><stop offset="0.8733" stop-color="#1affe5"/><stop offset="0.8801" stop-color="#b8ff47"/><stop offset="0.8832" stop-color="#f8ff07"/><stop offset="0.8845" stop-color="#ffec00"/><stop offset="0.8907" stop-color="#ff5400"/><stop offset="0.8981" stop-color="#ff0f00"/><stop offset="0.9037" stop-color="#fb0000"/><stop offset="0.9118" stop-color="#e40000"/><stop offset="0.9329" stop-color="#ce0000"/><stop offset="0.9553" stop-color="#ec0000"/><stop offset="0.9621" stop-color="#ff0500"/><stop offset="0.9658" stop-color="#ff1300"/><stop offset="0.9727" stop-color="#ff5400"/><stop offset="0.9789" stop-color="#ffec00"/><stop offset="0.9801" stop-color="#f8ff07"/><stop offset="0.9863" stop-color="#72ff8d"/><stop offset="0.9901" stop-color="#1affe5"/><stop offset="0.9907" stop-color="#04fffb"/><stop offset="0.9969" stop-color="#0001ff"/><stop offset="1.0000" stop-color="#000080"/></radialGradient><radialGradient id="g126" gradientUnits="userSpaceOnUse" cx="2623.4" cy="854.7" r="768.6"><stop offset="0.8634" stop-color="#000080"/><stop offset="0.8665" stop-color="#0001ff"/><stop offset="0.8727" stop-color="#02fffd"/><stop offset="0.8733" stop-color="#19ffe6"/><stop offset="0.8801" stop-color="#b6ff49"/><stop offset="0.8839" stop-color="#fffb00"/><stop offset="0.8882" stop-color="#ff9400"/><stop offset="0.8907" stop-color="#ff5600"/><stop offset="0.8981" stop-color="#ff1200"/><stop offset="0.9050" stop-color="#fa0000"/><stop offset="0.9124" stop-color="#e70000"/><stop offset="0.9329" stop-color="#d10000"/><stop offset="0.9553" stop-color="#f00000"/><stop offset="0.9609" stop-color="#ff0300"/><stop offset="0.9658" stop-color="#ff1600"/><stop offset="0.9727" stop-color="#ff5600"/><stop offset="0.9789" stop-color="#ffee00"/><stop offset="0.9795" stop-color="#fffb00"/><stop offset="0.9851" stop-color="#8eff71"/><stop offset="0.9901" stop-color="#19ffe6"/><stop offset="0.9907" stop-color="#02fffd"/><stop offset="0.9969" stop-color="#0001ff"/><stop offset="1.0000" stop-color="#000080"/></radialGradient><radialGradient id="g127" gradientUnits="userSpaceOnUse" cx="2623.4" cy="854.7" r="768.6"><stop offset="0.8634" stop-color="#000080"/><stop offset="0.8665" stop-color="#0000ff"/><stop offset="0.8727" stop-color="#01fffe"/><stop offset="0.8733" stop-color="#17ffe8"/><stop offset="0.8801" stop-color="#b4ff4b"/><stop offset="0.8839" stop-color="#fffd00"/><stop offset="0.8882" stop-color="#ff9700"/><stop offset="0.8907" stop-color="#ff5900"/><stop offset="0.8981" stop-color="#ff1500"/><stop offset="0.9056" stop-color="#fb0000"/><stop offset="0.9130" stop-color="#e90000"/><stop offset="0.9329" stop-color="#d50000"/><stop offset="0.9553" stop-color="#f30000"/><stop offset="0.9602" stop-color="#ff0400"/><stop offset="0.9658" stop-color="#ff1900"/><stop offset="0.9727" stop-color="#ff5900"/><stop offset="0.9789" stop-color="#fff000"/><stop offset="0.9795" stop-color="#fffd00"/><stop offset="0.9857" stop-color="#7eff81"/><stop offset="0.9901" stop-color="#17ffe8"/><stop offset="0.9907" stop-color="#01fffe"/><stop offset="0.9969" stop-color="#0000ff"/><stop offset="1.0000" stop-color="#000080"/></radialGradient><radialGradient id="g128" gradientUnits="userSpaceOnUse" cx="2623.4" cy="854.7" r="768.6"><stop offset="0.8634" stop-color="#000080"/><stop offset="0.8658" stop-color="#0000ea"/><stop offset="0.8665" stop-color="#0005ff"/><stop offset="0.8720" stop-color="#00f4ff"/><stop offset="0.8727" stop-color="#10ffef"/><stop offset="0.8795" stop-color="#b3ff4c"/><stop offset="0.8832" stop-color="#fffb00"/><stop offset="0.8901" stop-color="#ff5a00"/><stop offset="0.8975" stop-color="#ff1800"/><stop offset="0.9062" stop-color="#fa0000"/><stop offset="0.9130" stop-color="#ec0000"/><stop offset="0.9329" stop-color="#d80000"/><stop offset="0.9559" stop-color="#f60000"/><stop offset="0.9602" stop-color="#ff0600"/><stop offset="0.9665" stop-color="#ff1c00"/><stop offset="0.9733" stop-color="#ff5a00"/><stop offset="0.9801" stop-color="#fffb00"/><stop offset="0.9857" stop-color="#8aff75"/><stop offset="0.9907" stop-color="#10ffef"/><stop offset="0.9913" stop-color="#00f4ff"/><stop offset="0.9969" stop-color="#0005ff"/><stop offset="0.9988" stop-color="#0000b5"/><stop offset="1.0000" stop-color="#000080"/></radialGradient><radialGradient id="g129" gradientUnits="userSpaceOnUse" cx="2623.4" cy="854.7" r="768.6"><stop offset="0.8634" stop-color="#000080"/><stop offset="0.8665" stop-color="#0005ff"/><stop offset="0.8720" stop-color="#00f3ff"/><stop offset="0.8727" stop-color="#0efff1"/><stop offset="0.8795" stop-color="#b1ff4e"/><stop offset="0.8832" stop-color="#fffd00"/><stop offset="0.8901" stop-color="#ff5d00"/><stop offset="0.8975" stop-color="#ff1b00"/><stop offset="0.9068" stop-color="#fb0000"/><stop offset="0.9155" stop-color="#ec0000"/><stop offset="0.9329" stop-color="#db0000"/><stop offset="0.9559" stop-color="#f90000"/><stop offset="0.9615" stop-color="#ff0d00"/><stop offset="0.9665" stop-color="#ff1f00"/><stop offset="0.9733" stop-color="#ff5d00"/><stop offset="0.9801" stop-color="#fffd00"/><stop offset="0.9863" stop-color="#79ff86"/><stop offset="0.9907" stop-color="#0efff1"/><stop offset="0.9913" stop-color="#00f3ff"/><stop offset="0.9969" stop-color="#0005ff"/><stop offset="1.0000" stop-color="#000080"/></radialGradient><radialGradient id="g130" gradientUnits="userSpaceOnUse" cx="2623.4" cy="854.7" r="768.6"><stop offset="0.8634" stop-color="#000080"/><stop offset="0.8658" stop-color="#0000ee"/><stop offset="0.8665" stop-color="#000aff"/><stop offset="0.8720" stop-color="#03fffc"/><stop offset="0.8739" stop-color="#37ffc8"/><stop offset="0.8789" stop-color="#b1ff4e"/><stop offset="0.8826" stop-color="#fffb00"/><stop offset="0.8888" stop-color="#ff6800"/><stop offset="0.8944" stop-color="#ff3200"/><stop offset="0.8975" stop-color="#ff1c00"/><stop offset="0.9075" stop-color="#fb0000"/><stop offset="0.9329" stop-color="#de0000"/><stop offset="0.9565" stop-color="#fd0000"/><stop offset="0.9671" stop-color="#ff2100"/><stop offset="0.9739" stop-color="#ff5e00"/><stop offset="0.9764" stop-color="#ff9500"/><stop offset="0.9807" stop-color="#fffb00"/><stop offset="0.9857" stop-color="#95ff6a"/><stop offset="0.9907" stop-color="#18ffe7"/><stop offset="0.9913" stop-color="#03fffc"/><stop offset="0.9969" stop-color="#000aff"/><stop offset="0.9975" stop-color="#0000ee"/><stop offset="1.0000" stop-color="#000080"/></radialGradient><radialGradient id="g131" gradientUnits="userSpaceOnUse" cx="2623.4" cy="854.7" r="768.6"><stop offset="0.8634" stop-color="#000080"/><stop offset="0.8658" stop-color="#0000ed"/><stop offset="0.8665" stop-color="#000aff"/><stop offset="0.8720" stop-color="#01fffe"/><stop offset="0.8739" stop-color="#36ffc9"/><stop offset="0.8789" stop-color="#afff50"/><stop offset="0.8826" stop-color="#fffd00"/><stop offset="0.8888" stop-color="#ff6b00"/><stop offset="0.8944" stop-color="#ff3500"/><stop offset="0.8975" stop-color="#ff1f00"/><stop offset="0.9081" stop-color="#fc0000"/><stop offset="0.9329" stop-color="#e10000"/><stop offset="0.9571" stop-color="#ff0300"/><stop offset="0.9671" stop-color="#ff2400"/><stop offset="0.9739" stop-color="#ff6100"/><stop offset="0.9764" stop-color="#ff9700"/><stop offset="0.9807" stop-color="#fffd00"/><stop offset="0.9870" stop-color="#74ff8b"/><stop offset="0.9907" stop-color="#16ffe9"/><stop offset="0.9913" stop-color="#01fffe"/><stop offset="0.9969" stop-color="#000aff"/><stop offset="0.9975" stop-color="#0000ed"/><stop offset="1.0000" stop-color="#000080"/></radialGradient><radialGradient id="g132" gradientUnits="userSpaceOnUse" cx="2623.4" cy="854.7" r="768.6"><stop offset="0.8634" stop-color="#000080"/><stop offset="0.8658" stop-color="#0000ed"/><stop offset="0.8665" stop-color="#0009ff"/><stop offset="0.8720" stop-color="#00ffff"/><stop offset="0.8739" stop-color="#34ffcb"/><stop offset="0.8789" stop-color="#adff52"/><stop offset="0.8826" stop-color="#ffff00"/><stop offset="0.8888" stop-color="#ff6e00"/><stop offset="0.8944" stop-color="#ff3800"/><stop offset="0.8975" stop-color="#ff2200"/><stop offset="0.9093" stop-color="#fc0000"/><stop offset="0.9329" stop-color="#e40000"/><stop offset="0.9565" stop-color="#ff0400"/><stop offset="0.9671" stop-color="#ff2700"/><stop offset="0.9739" stop-color="#ff6400"/><stop offset="0.9764" stop-color="#ff9a00"/><stop offset="0.9807" stop-color="#ffff00"/><stop offset="0.9870" stop-color="#72ff8d"/><stop offset="0.9907" stop-color="#15ffea"/><stop offset="0.9913" stop-color="#00ffff"/><stop offset="0.9969" stop-color="#0009ff"/><stop offset="0.9975" stop-color="#0000ed"/><stop offset="1.0000" stop-color="#000080"/></radialGradient><radialGradient id="g133" gradientUnits="userSpaceOnUse" cx="2623.4" cy="854.7" r="768.6"><stop offset="0.8634" stop-color="#000080"/><stop offset="0.8658" stop-color="#0000f1"/><stop offset="0.8665" stop-color="#000fff"/><stop offset="0.8714" stop-color="#00f2ff"/><stop offset="0.8720" stop-color="#0efff1"/><stop offset="0.8783" stop-color="#acff53"/><stop offset="0.8820" stop-color="#fffd00"/><stop offset="0.8882" stop-color="#ff6d00"/><stop offset="0.8963" stop-color="#ff2700"/><stop offset="0.9099" stop-color="#fe0000"/><stop offset="0.9335" stop-color="#e80000"/><stop offset="0.9559" stop-color="#ff0400"/><stop offset="0.9677" stop-color="#ff2a00"/><stop offset="0.9752" stop-color="#ff6d00"/><stop offset="0.9814" stop-color="#fffd00"/><stop offset="0.9876" stop-color="#6fff90"/><stop offset="0.9913" stop-color="#0efff1"/><stop offset="0.9919" stop-color="#00f2ff"/><stop offset="0.9969" stop-color="#000fff"/><stop offset="0.9975" stop-color="#0000f1"/><stop offset="1.0000" stop-color="#000080"/></radialGradient><radialGradient id="g134" gradientUnits="userSpaceOnUse" cx="2623.4" cy="854.7" r="768.6"><stop offset="0.8634" stop-color="#000080"/><stop offset="0.8658" stop-color="#0000f1"/><stop offset="0.8665" stop-color="#000eff"/><stop offset="0.8714" stop-color="#00f1ff"/><stop offset="0.8720" stop-color="#0cfff3"/><stop offset="0.8783" stop-color="#aaff55"/><stop offset="0.8820" stop-color="#ffff00"/><stop offset="0.8882" stop-color="#ff6f00"/><stop offset="0.8963" stop-color="#ff2a00"/><stop offset="0.9106" stop-color="#ff0100"/><stop offset="0.9335" stop-color="#eb0000"/><stop offset="0.9547" stop-color="#ff0400"/><stop offset="0.9677" stop-color="#ff2d00"/><stop offset="0.9752" stop-color="#ff6f00"/><stop offset="0.9814" stop-color="#ffff00"/><stop offset="0.9876" stop-color="#6eff91"/><stop offset="0.9913" stop-color="#0cfff3"/><stop offset="0.9919" stop-color="#00f1ff"/><stop offset="0.9969" stop-color="#000eff"/><stop offset="0.9975" stop-color="#0000f1"/><stop offset="1.0000" stop-color="#000080"/></radialGradient><radialGradient id="g135" gradientUnits="userSpaceOnUse" cx="2623.4" cy="854.7" r="768.6"><stop offset="0.8634" stop-color="#000080"/><stop offset="0.8658" stop-color="#0000f6"/><stop offset="0.8665" stop-color="#0015ff"/><stop offset="0.8714" stop-color="#02fffd"/><stop offset="0.8770" stop-color="#9bff64"/><stop offset="0.8814" stop-color="#fffc00"/><stop offset="0.8876" stop-color="#ff6f00"/><stop offset="0.8957" stop-color="#ff2d00"/><stop offset="0.9099" stop-color="#ff0500"/><stop offset="0.9329" stop-color="#ee0000"/><stop offset="0.9534" stop-color="#ff0500"/><stop offset="0.9683" stop-color="#ff3000"/><stop offset="0.9758" stop-color="#ff6f00"/><stop offset="0.9820" stop-color="#fffc00"/><stop offset="0.9876" stop-color="#7bff84"/><stop offset="0.9919" stop-color="#02fffd"/><stop offset="0.9969" stop-color="#0015ff"/><stop offset="0.9975" stop-color="#0000f6"/><stop offset="1.0000" stop-color="#000080"/></radialGradient><radialGradient id="g136" gradientUnits="userSpaceOnUse" cx="2623.4" cy="854.7" r="768.6"><stop offset="0.8634" stop-color="#000080"/><stop offset="0.8658" stop-color="#0000fb"/><stop offset="0.8708" stop-color="#00f4ff"/><stop offset="0.8714" stop-color="#0efff1"/><stop offset="0.8770" stop-color="#a9ff56"/><stop offset="0.8801" stop-color="#f7ff08"/><stop offset="0.8807" stop-color="#fff800"/><stop offset="0.8870" stop-color="#ff7000"/><stop offset="0.8950" stop-color="#ff3000"/><stop offset="0.9099" stop-color="#ff0800"/><stop offset="0.9248" stop-color="#f70000"/><stop offset="0.9335" stop-color="#f20000"/><stop offset="0.9509" stop-color="#ff0500"/><stop offset="0.9590" stop-color="#ff1400"/><stop offset="0.9696" stop-color="#ff3800"/><stop offset="0.9764" stop-color="#ff7000"/><stop offset="0.9826" stop-color="#fff800"/><stop offset="0.9839" stop-color="#e7ff18"/><stop offset="0.9888" stop-color="#67ff98"/><stop offset="0.9919" stop-color="#0efff1"/><stop offset="0.9925" stop-color="#00f4ff"/><stop offset="0.9975" stop-color="#0000fb"/><stop offset="1.0000" stop-color="#000080"/></radialGradient><radialGradient id="g137" gradientUnits="userSpaceOnUse" cx="2623.4" cy="854.7" r="768.6"><stop offset="0.8634" stop-color="#000080"/><stop offset="0.8658" stop-color="#0000fb"/><stop offset="0.8708" stop-color="#00f3ff"/><stop offset="0.8714" stop-color="#0dfff2"/><stop offset="0.8770" stop-color="#a7ff58"/><stop offset="0.8801" stop-color="#f4ff0b"/><stop offset="0.8807" stop-color="#fffa00"/><stop offset="0.8870" stop-color="#ff7300"/><stop offset="0.8950" stop-color="#ff3300"/><stop offset="0.9099" stop-color="#ff0b00"/><stop offset="0.9255" stop-color="#f90000"/><stop offset="0.9342" stop-color="#f60000"/><stop offset="0.9497" stop-color="#ff0700"/><stop offset="0.9584" stop-color="#ff1500"/><stop offset="0.9696" stop-color="#ff3a00"/><stop offset="0.9764" stop-color="#ff7300"/><stop offset="0.9826" stop-color="#fffa00"/><stop offset="0.9851" stop-color="#c6ff39"/><stop offset="0.9894" stop-color="#54ffab"/><stop offset="0.9919" stop-color="#0dfff2"/><stop offset="0.9925" stop-color="#00f3ff"/><stop offset="0.9975" stop-color="#0000fb"/><stop offset="1.0000" stop-color="#000080"/></radialGradient><radialGradient id="g138" gradientUnits="userSpaceOnUse" cx="2623.4" cy="854.7" r="768.6"><stop offset="0.8634" stop-color="#000080"/><stop offset="0.8658" stop-color="#0000fb"/><stop offset="0.8702" stop-color="#00d3ff"/><stop offset="0.8708" stop-color="#00f2ff"/><stop offset="0.8714" stop-color="#0cfff3"/><stop offset="0.8770" stop-color="#a5ff5a"/><stop offset="0.8807" stop-color="#fffc00"/><stop offset="0.8870" stop-color="#ff7600"/><stop offset="0.8950" stop-color="#ff3600"/><stop offset="0.9099" stop-color="#ff0e00"/><stop offset="0.9280" stop-color="#fa0000"/><stop offset="0.9348" stop-color="#f90000"/><stop offset="0.9516" stop-color="#ff0c00"/><stop offset="0.9596" stop-color="#ff1c00"/><stop offset="0.9696" stop-color="#ff3d00"/><stop offset="0.9764" stop-color="#ff7600"/><stop offset="0.9826" stop-color="#fffc00"/><stop offset="0.9882" stop-color="#75ff8a"/><stop offset="0.9919" stop-color="#0cfff3"/><stop offset="0.9925" stop-color="#00f2ff"/><stop offset="0.9969" stop-color="#001aff"/><stop offset="0.9975" stop-color="#0000fb"/><stop offset="1.0000" stop-color="#000080"/></radialGradient><radialGradient id="g139" gradientUnits="userSpaceOnUse" cx="2623.4" cy="854.7" r="768.6"><stop offset="0.8634" stop-color="#000080"/><stop offset="0.8658" stop-color="#0000fa"/><stop offset="0.8683" stop-color="#0076ff"/><stop offset="0.8708" stop-color="#00f0ff"/><stop offset="0.8714" stop-color="#0afff5"/><stop offset="0.8770" stop-color="#a3ff5c"/><stop offset="0.8807" stop-color="#ffff00"/><stop offset="0.8870" stop-color="#ff7900"/><stop offset="0.8950" stop-color="#ff3800"/><stop offset="0.9099" stop-color="#ff1100"/><stop offset="0.9304" stop-color="#fb0000"/><stop offset="0.9453" stop-color="#ff0800"/><stop offset="0.9578" stop-color="#ff1900"/><stop offset="0.9696" stop-color="#ff4000"/><stop offset="0.9764" stop-color="#ff7900"/><stop offset="0.9826" stop-color="#ffff00"/><stop offset="0.9888" stop-color="#62ff9d"/><stop offset="0.9919" stop-color="#0afff5"/><stop offset="0.9925" stop-color="#00f0ff"/><stop offset="0.9969" stop-color="#001aff"/><stop offset="0.9975" stop-color="#0000fa"/><stop offset="1.0000" stop-color="#000080"/></radialGradient><radialGradient id="g140" gradientUnits="userSpaceOnUse" cx="2623.4" cy="854.7" r="768.6"><stop offset="0.8634" stop-color="#000080"/><stop offset="0.8658" stop-color="#0000fa"/><stop offset="0.8677" stop-color="#0056ff"/><stop offset="0.8708" stop-color="#00efff"/><stop offset="0.8714" stop-color="#09fff6"/><stop offset="0.8770" stop-color="#a1ff5e"/><stop offset="0.8807" stop-color="#fdff02"/><stop offset="0.8870" stop-color="#ff7b00"/><stop offset="0.8950" stop-color="#ff3b00"/><stop offset="0.9099" stop-color="#ff1400"/><stop offset="0.9335" stop-color="#fe0000"/><stop offset="0.9578" stop-color="#ff1c00"/><stop offset="0.9696" stop-color="#ff4300"/><stop offset="0.9764" stop-color="#ff7b00"/><stop offset="0.9826" stop-color="#fdff02"/><stop offset="0.9888" stop-color="#60ff9f"/><stop offset="0.9919" stop-color="#09fff6"/><stop offset="0.9925" stop-color="#00efff"/><stop offset="0.9969" stop-color="#0019ff"/><stop offset="0.9975" stop-color="#0000fa"/><stop offset="1.0000" stop-color="#000080"/></radialGradient><radialGradient id="g141" gradientUnits="userSpaceOnUse" cx="2623.4" cy="854.7" r="768.6"><stop offset="0.8634" stop-color="#000080"/><stop offset="0.8658" stop-color="#0000f9"/><stop offset="0.8671" stop-color="#0037ff"/><stop offset="0.8708" stop-color="#00eeff"/><stop offset="0.8714" stop-color="#08fff7"/><stop offset="0.8770" stop-color="#9fff60"/><stop offset="0.8807" stop-color="#fbff04"/><stop offset="0.8870" stop-color="#ff7e00"/><stop offset="0.8950" stop-color="#ff3e00"/><stop offset="0.9099" stop-color="#ff1700"/><stop offset="0.9335" stop-color="#ff0300"/><stop offset="0.9578" stop-color="#ff1f00"/><stop offset="0.9696" stop-color="#ff4600"/><stop offset="0.9764" stop-color="#ff7e00"/><stop offset="0.9826" stop-color="#fbff04"/><stop offset="0.9888" stop-color="#5effa1"/><stop offset="0.9919" stop-color="#08fff7"/><stop offset="0.9925" stop-color="#00eeff"/><stop offset="0.9969" stop-color="#0019ff"/><stop offset="0.9975" stop-color="#0000f9"/><stop offset="1.0000" stop-color="#000080"/></radialGradient><radialGradient id="g142" gradientUnits="userSpaceOnUse" cx="2623.4" cy="854.7" r="768.6"><stop offset="0.8634" stop-color="#000080"/><stop offset="0.8658" stop-color="#0000f9"/><stop offset="0.8671" stop-color="#0036ff"/><stop offset="0.8708" stop-color="#00ecff"/><stop offset="0.8714" stop-color="#06fff9"/><stop offset="0.8770" stop-color="#9eff61"/><stop offset="0.8807" stop-color="#f9ff06"/><stop offset="0.8820" stop-color="#ffea00"/><stop offset="0.8870" stop-color="#ff8100"/><stop offset="0.8950" stop-color="#ff4100"/><stop offset="0.9099" stop-color="#ff1a00"/><stop offset="0.9335" stop-color="#ff0600"/><stop offset="0.9578" stop-color="#ff2200"/><stop offset="0.9696" stop-color="#ff4900"/><stop offset="0.9764" stop-color="#ff8100"/><stop offset="0.9820" stop-color="#fff800"/><stop offset="0.9826" stop-color="#f9ff06"/><stop offset="0.9888" stop-color="#5dffa2"/><stop offset="0.9919" stop-color="#06fff9"/><stop offset="0.9925" stop-color="#00ecff"/><stop offset="0.9969" stop-color="#0018ff"/><stop offset="0.9975" stop-color="#0000f9"/><stop offset="1.0000" stop-color="#000080"/></radialGradient><radialGradient id="g143" gradientUnits="userSpaceOnUse" cx="2623.4" cy="854.7" r="768.6"><stop offset="0.8634" stop-color="#000080"/><stop offset="0.8658" stop-color="#0000ff"/><stop offset="0.8708" stop-color="#00ffff"/><stop offset="0.8764" stop-color="#9fff60"/><stop offset="0.8801" stop-color="#ffff00"/><stop offset="0.8857" stop-color="#ff8800"/><stop offset="0.8944" stop-color="#ff4100"/><stop offset="0.9093" stop-color="#ff1a00"/><stop offset="0.9335" stop-color="#ff0600"/><stop offset="0.9584" stop-color="#ff2300"/><stop offset="0.9702" stop-color="#ff4900"/><stop offset="0.9776" stop-color="#ff8800"/><stop offset="0.9832" stop-color="#ffff00"/><stop offset="0.9894" stop-color="#5bffa4"/><stop offset="0.9925" stop-color="#00ffff"/><stop offset="0.9975" stop-color="#0000ff"/><stop offset="1.0000" stop-color="#000080"/></radialGradient><radialGradient id="g144" gradientUnits="userSpaceOnUse" cx="2623.4" cy="854.7" r="768.6"><stop offset="0.8634" stop-color="#000080"/><stop offset="0.8658" stop-color="#0000ff"/><stop offset="0.8708" stop-color="#00fdff"/><stop offset="0.8764" stop-color="#9dff62"/><stop offset="0.8801" stop-color="#fcff03"/><stop offset="0.8863" stop-color="#ff8200"/><stop offset="0.8944" stop-color="#ff4400"/><stop offset="0.9093" stop-color="#ff1e00"/><stop offset="0.9335" stop-color="#ff0900"/><stop offset="0.9584" stop-color="#ff2600"/><stop offset="0.9702" stop-color="#ff4c00"/><stop offset="0.9776" stop-color="#ff8b00"/><stop offset="0.9832" stop-color="#fcff03"/><stop offset="0.9894" stop-color="#59ffa6"/><stop offset="0.9925" stop-color="#00fdff"/><stop offset="0.9975" stop-color="#0000ff"/><stop offset="1.0000" stop-color="#000080"/></radialGradient><radialGradient id="g145" gradientUnits="userSpaceOnUse" cx="2623.4" cy="854.7" r="768.6"><stop offset="0.8634" stop-color="#000080"/><stop offset="0.8658" stop-color="#0000fe"/><stop offset="0.8708" stop-color="#00fcff"/><stop offset="0.8770" stop-color="#abff54"/><stop offset="0.8801" stop-color="#faff05"/><stop offset="0.8826" stop-color="#ffcf00"/><stop offset="0.8863" stop-color="#ff8500"/><stop offset="0.8944" stop-color="#ff4700"/><stop offset="0.9093" stop-color="#ff2100"/><stop offset="0.9335" stop-color="#ff0c00"/><stop offset="0.9584" stop-color="#ff2900"/><stop offset="0.9702" stop-color="#ff4f00"/><stop offset="0.9776" stop-color="#ff8e00"/><stop offset="0.9826" stop-color="#fff700"/><stop offset="0.9832" stop-color="#faff05"/><stop offset="0.9894" stop-color="#58ffa7"/><stop offset="0.9925" stop-color="#00fcff"/><stop offset="0.9975" stop-color="#0000fe"/><stop offset="1.0000" stop-color="#000080"/></radialGradient><radialGradient id="g146" gradientUnits="userSpaceOnUse" cx="2623.4" cy="854.7" r="768.6"><stop offset="0.8634" stop-color="#000080"/><stop offset="0.8652" stop-color="#0000e4"/><stop offset="0.8658" stop-color="#0006ff"/><stop offset="0.8702" stop-color="#00f0ff"/><stop offset="0.8708" stop-color="#09fff6"/><stop offset="0.8758" stop-color="#9dff62"/><stop offset="0.8795" stop-color="#ffff00"/><stop offset="0.8851" stop-color="#ff8a00"/><stop offset="0.8938" stop-color="#ff4700"/><stop offset="0.9093" stop-color="#ff2000"/><stop offset="0.9335" stop-color="#ff0c00"/><stop offset="0.9584" stop-color="#ff2800"/><stop offset="0.9708" stop-color="#ff4e00"/><stop offset="0.9783" stop-color="#ff8a00"/><stop offset="0.9839" stop-color="#ffff00"/><stop offset="0.9894" stop-color="#69ff96"/><stop offset="0.9925" stop-color="#09fff6"/><stop offset="0.9932" stop-color="#00f0ff"/><stop offset="0.9975" stop-color="#0006ff"/><stop offset="0.9988" stop-color="#0000c2"/><stop offset="1.0000" stop-color="#000080"/></radialGradient><radialGradient id="g147" gradientUnits="userSpaceOnUse" cx="2623.4" cy="854.7" r="768.6"><stop offset="0.8634" stop-color="#000080"/><stop offset="0.8652" stop-color="#0000e3"/><stop offset="0.8658" stop-color="#0006ff"/><stop offset="0.8702" stop-color="#00efff"/><stop offset="0.8708" stop-color="#08fff7"/><stop offset="0.8758" stop-color="#9bff64"/><stop offset="0.8795" stop-color="#fdff02"/><stop offset="0.8851" stop-color="#ff8d00"/><stop offset="0.8938" stop-color="#ff4a00"/><stop offset="0.9093" stop-color="#ff2300"/><stop offset="0.9335" stop-color="#ff0f00"/><stop offset="0.9584" stop-color="#ff2b00"/><stop offset="0.9708" stop-color="#ff5100"/><stop offset="0.9783" stop-color="#ff8d00"/><stop offset="0.9839" stop-color="#fdff02"/><stop offset="0.9894" stop-color="#67ff98"/><stop offset="0.9925" stop-color="#08fff7"/><stop offset="0.9932" stop-color="#00efff"/><stop offset="0.9975" stop-color="#0006ff"/><stop offset="0.9988" stop-color="#0000c2"/><stop offset="1.0000" stop-color="#000080"/></radialGradient><radialGradient id="g148" gradientUnits="userSpaceOnUse" cx="2623.4" cy="854.7" r="768.6"><stop offset="0.8634" stop-color="#000080"/><stop offset="0.8652" stop-color="#0000e3"/><stop offset="0.8658" stop-color="#0005ff"/><stop offset="0.8702" stop-color="#00eeff"/><stop offset="0.8708" stop-color="#06fff9"/><stop offset="0.8758" stop-color="#99ff66"/><stop offset="0.8795" stop-color="#fbff04"/><stop offset="0.8845" stop-color="#ff9d00"/><stop offset="0.8857" stop-color="#ff8900"/><stop offset="0.8938" stop-color="#ff4d00"/><stop offset="0.9093" stop-color="#ff2600"/><stop offset="0.9335" stop-color="#ff1200"/><stop offset="0.9584" stop-color="#ff2e00"/><stop offset="0.9708" stop-color="#ff5400"/><stop offset="0.9783" stop-color="#ff9000"/><stop offset="0.9832" stop-color="#fff600"/><stop offset="0.9839" stop-color="#fbff04"/><stop offset="0.9894" stop-color="#65ff9a"/><stop offset="0.9925" stop-color="#06fff9"/><stop offset="0.9932" stop-color="#00eeff"/><stop offset="0.9975" stop-color="#0005ff"/><stop offset="0.9994" stop-color="#0000a1"/><stop offset="1.0000" stop-color="#000080"/></radialGradient><radialGradient id="g149" gradientUnits="userSpaceOnUse" cx="2623.4" cy="854.7" r="768.6"><stop offset="0.8634" stop-color="#000080"/><stop offset="0.8658" stop-color="#0005ff"/><stop offset="0.8702" stop-color="#00edff"/><stop offset="0.8708" stop-color="#05fffa"/><stop offset="0.8758" stop-color="#97ff68"/><stop offset="0.8795" stop-color="#f8ff07"/><stop offset="0.8807" stop-color="#ffec00"/><stop offset="0.8851" stop-color="#ff9200"/><stop offset="0.8938" stop-color="#ff5000"/><stop offset="0.9093" stop-color="#ff2a00"/><stop offset="0.9335" stop-color="#ff1600"/><stop offset="0.9584" stop-color="#ff3100"/><stop offset="0.9708" stop-color="#ff5700"/><stop offset="0.9783" stop-color="#ff9200"/><stop offset="0.9832" stop-color="#fff900"/><stop offset="0.9839" stop-color="#f8ff07"/><stop offset="0.9894" stop-color="#63ff9c"/><stop offset="0.9925" stop-color="#05fffa"/><stop offset="0.9932" stop-color="#00edff"/><stop offset="0.9975" stop-color="#0005ff"/><stop offset="1.0000" stop-color="#000080"/></radialGradient><radialGradient id="g150" gradientUnits="userSpaceOnUse" cx="2623.4" cy="854.7" r="768.6"><stop offset="0.8634" stop-color="#000080"/><stop offset="0.8652" stop-color="#0000e8"/><stop offset="0.8658" stop-color="#000cff"/><stop offset="0.8696" stop-color="#00deff"/><stop offset="0.8702" stop-color="#00fcff"/><stop offset="0.8752" stop-color="#97ff68"/><stop offset="0.8783" stop-color="#eeff11"/><stop offset="0.8789" stop-color="#fbff04"/><stop offset="0.8845" stop-color="#ff9200"/><stop offset="0.8932" stop-color="#ff5300"/><stop offset="0.9087" stop-color="#ff2d00"/><stop offset="0.9335" stop-color="#ff1900"/><stop offset="0.9590" stop-color="#ff3500"/><stop offset="0.9714" stop-color="#ff5a00"/><stop offset="0.9789" stop-color="#ff9200"/><stop offset="0.9845" stop-color="#fbff04"/><stop offset="0.9876" stop-color="#a9ff56"/><stop offset="0.9913" stop-color="#39ffc6"/><stop offset="0.9932" stop-color="#00fcff"/><stop offset="0.9963" stop-color="#0052ff"/><stop offset="0.9975" stop-color="#000cff"/><stop offset="0.9981" stop-color="#0000e8"/><stop offset="1.0000" stop-color="#000080"/></radialGradient><radialGradient id="g151" gradientUnits="userSpaceOnUse" cx="2623.4" cy="854.7" r="768.6"><stop offset="0.8634" stop-color="#000080"/><stop offset="0.8652" stop-color="#0000e8"/><stop offset="0.8658" stop-color="#000cff"/><stop offset="0.8696" stop-color="#00dcff"/><stop offset="0.8702" stop-color="#00faff"/><stop offset="0.8733" stop-color="#5fffa0"/><stop offset="0.8783" stop-color="#ecff13"/><stop offset="0.8795" stop-color="#fff900"/><stop offset="0.8845" stop-color="#ff9500"/><stop offset="0.8932" stop-color="#ff5600"/><stop offset="0.9087" stop-color="#ff3000"/><stop offset="0.9335" stop-color="#ff1c00"/><stop offset="0.9590" stop-color="#ff3800"/><stop offset="0.9714" stop-color="#ff5d00"/><stop offset="0.9789" stop-color="#ff9500"/><stop offset="0.9839" stop-color="#fff900"/><stop offset="0.9851" stop-color="#ecff13"/><stop offset="0.9907" stop-color="#4bffb4"/><stop offset="0.9932" stop-color="#00faff"/><stop offset="0.9963" stop-color="#0051ff"/><stop offset="0.9975" stop-color="#000cff"/><stop offset="0.9981" stop-color="#0000e8"/><stop offset="1.0000" stop-color="#000080"/></radialGradient><radialGradient id="g152" gradientUnits="userSpaceOnUse" cx="2623.4" cy="854.7" r="768.6"><stop offset="0.8634" stop-color="#000080"/><stop offset="0.8652" stop-color="#0000e7"/><stop offset="0.8658" stop-color="#000bff"/><stop offset="0.8696" stop-color="#00dbff"/><stop offset="0.8702" stop-color="#00f9ff"/><stop offset="0.8714" stop-color="#22ffdd"/><stop offset="0.8752" stop-color="#93ff6c"/><stop offset="0.8783" stop-color="#eaff15"/><stop offset="0.8795" stop-color="#fffb00"/><stop offset="0.8845" stop-color="#ff9800"/><stop offset="0.8932" stop-color="#ff5900"/><stop offset="0.9087" stop-color="#ff3300"/><stop offset="0.9335" stop-color="#ff1f00"/><stop offset="0.9590" stop-color="#ff3b00"/><stop offset="0.9714" stop-color="#ff6000"/><stop offset="0.9789" stop-color="#ff9800"/><stop offset="0.9839" stop-color="#fffb00"/><stop offset="0.9851" stop-color="#eaff15"/><stop offset="0.9907" stop-color="#49ffb6"/><stop offset="0.9925" stop-color="#0efff1"/><stop offset="0.9932" stop-color="#00f9ff"/><stop offset="0.9963" stop-color="#0050ff"/><stop offset="0.9975" stop-color="#000bff"/><stop offset="0.9981" stop-color="#0000e7"/><stop offset="1.0000" stop-color="#000080"/></radialGradient><radialGradient id="g153" gradientUnits="userSpaceOnUse" cx="2623.4" cy="854.7" r="768.6"><stop offset="0.8634" stop-color="#000080"/><stop offset="0.8652" stop-color="#0000e7"/><stop offset="0.8658" stop-color="#000bff"/><stop offset="0.8696" stop-color="#00daff"/><stop offset="0.8702" stop-color="#00f8ff"/><stop offset="0.8714" stop-color="#20ffdf"/><stop offset="0.8752" stop-color="#91ff6e"/><stop offset="0.8783" stop-color="#e8ff17"/><stop offset="0.8795" stop-color="#fffd00"/><stop offset="0.8845" stop-color="#ff9b00"/><stop offset="0.8932" stop-color="#ff5c00"/><stop offset="0.9087" stop-color="#ff3600"/><stop offset="0.9335" stop-color="#ff2200"/><stop offset="0.9590" stop-color="#ff3e00"/><stop offset="0.9714" stop-color="#ff6300"/><stop offset="0.9789" stop-color="#ff9b00"/><stop offset="0.9839" stop-color="#fffd00"/><stop offset="0.9857" stop-color="#d6ff29"/><stop offset="0.9907" stop-color="#48ffb7"/><stop offset="0.9925" stop-color="#0cfff3"/><stop offset="0.9932" stop-color="#00f8ff"/><stop offset="0.9963" stop-color="#0050ff"/><stop offset="0.9975" stop-color="#000bff"/><stop offset="0.9981" stop-color="#0000e7"/><stop offset="1.0000" stop-color="#000080"/></radialGradient><radialGradient id="g154" gradientUnits="userSpaceOnUse" cx="2623.4" cy="854.7" r="768.6"><stop offset="0.8634" stop-color="#000080"/><stop offset="0.8652" stop-color="#0000ed"/><stop offset="0.8658" stop-color="#0013ff"/><stop offset="0.8696" stop-color="#00eeff"/><stop offset="0.8702" stop-color="#05fffa"/><stop offset="0.8745" stop-color="#91ff6e"/><stop offset="0.8776" stop-color="#ebff14"/><stop offset="0.8789" stop-color="#fffb00"/><stop offset="0.8839" stop-color="#ff9c00"/><stop offset="0.8925" stop-color="#ff5f00"/><stop offset="0.9081" stop-color="#ff3a00"/><stop offset="0.9335" stop-color="#ff2500"/><stop offset="0.9596" stop-color="#ff4100"/><stop offset="0.9720" stop-color="#ff6500"/><stop offset="0.9795" stop-color="#ff9c00"/><stop offset="0.9845" stop-color="#fffb00"/><stop offset="0.9857" stop-color="#ebff14"/><stop offset="0.9907" stop-color="#58ffa7"/><stop offset="0.9932" stop-color="#05fffa"/><stop offset="0.9938" stop-color="#00eeff"/><stop offset="0.9975" stop-color="#0013ff"/><stop offset="0.9981" stop-color="#0000ed"/><stop offset="1.0000" stop-color="#000080"/></radialGradient><radialGradient id="g155" gradientUnits="userSpaceOnUse" cx="2623.4" cy="854.7" r="768.6"><stop offset="0.8634" stop-color="#000080"/><stop offset="0.8652" stop-color="#0000ed"/><stop offset="0.8658" stop-color="#0012ff"/><stop offset="0.8696" stop-color="#00edff"/><stop offset="0.8702" stop-color="#03fffc"/><stop offset="0.8745" stop-color="#90ff6f"/><stop offset="0.8776" stop-color="#e8ff17"/><stop offset="0.8789" stop-color="#fffe00"/><stop offset="0.8839" stop-color="#ff9f00"/><stop offset="0.8925" stop-color="#ff6200"/><stop offset="0.9081" stop-color="#ff3d00"/><stop offset="0.9335" stop-color="#ff2900"/><stop offset="0.9596" stop-color="#ff4400"/><stop offset="0.9720" stop-color="#ff6800"/><stop offset="0.9795" stop-color="#ff9f00"/><stop offset="0.9845" stop-color="#fffe00"/><stop offset="0.9863" stop-color="#d8ff27"/><stop offset="0.9913" stop-color="#42ffbd"/><stop offset="0.9932" stop-color="#03fffc"/><stop offset="0.9938" stop-color="#00edff"/><stop offset="0.9975" stop-color="#0012ff"/><stop offset="0.9981" stop-color="#0000ed"/><stop offset="1.0000" stop-color="#000080"/></radialGradient><radialGradient id="g156" gradientUnits="userSpaceOnUse" cx="2623.4" cy="854.7" r="768.6"><stop offset="0.8634" stop-color="#000080"/><stop offset="0.8652" stop-color="#0000ec"/><stop offset="0.8658" stop-color="#0012ff"/><stop offset="0.8696" stop-color="#00ebff"/><stop offset="0.8702" stop-color="#02fffd"/><stop offset="0.8745" stop-color="#8eff71"/><stop offset="0.8776" stop-color="#e6ff19"/><stop offset="0.8789" stop-color="#feff01"/><stop offset="0.8839" stop-color="#ffa200"/><stop offset="0.8925" stop-color="#ff6500"/><stop offset="0.9081" stop-color="#ff4000"/><stop offset="0.9335" stop-color="#ff2c00"/><stop offset="0.9596" stop-color="#ff4700"/><stop offset="0.9720" stop-color="#ff6b00"/><stop offset="0.9795" stop-color="#ffa200"/><stop offset="0.9845" stop-color="#feff01"/><stop offset="0.9863" stop-color="#d6ff29"/><stop offset="0.9913" stop-color="#40ffbf"/><stop offset="0.9932" stop-color="#02fffd"/><stop offset="0.9938" stop-color="#00ebff"/><stop offset="0.9975" stop-color="#0012ff"/><stop offset="0.9981" stop-color="#0000ec"/><stop offset="1.0000" stop-color="#000080"/></radialGradient><radialGradient id="g157" gradientUnits="userSpaceOnUse" cx="2623.4" cy="854.7" r="768.6"><stop offset="0.8634" stop-color="#000080"/><stop offset="0.8652" stop-color="#0000f3"/><stop offset="0.8658" stop-color="#001bff"/><stop offset="0.8689" stop-color="#00dbff"/><stop offset="0.8696" stop-color="#00f9ff"/><stop offset="0.8708" stop-color="#26ffd9"/><stop offset="0.8739" stop-color="#8eff71"/><stop offset="0.8764" stop-color="#dbff24"/><stop offset="0.8783" stop-color="#fffe00"/><stop offset="0.8832" stop-color="#ffa300"/><stop offset="0.8919" stop-color="#ff6800"/><stop offset="0.9081" stop-color="#ff4300"/><stop offset="0.9335" stop-color="#ff2f00"/><stop offset="0.9602" stop-color="#ff4b00"/><stop offset="0.9727" stop-color="#ff6e00"/><stop offset="0.9807" stop-color="#ffab00"/><stop offset="0.9851" stop-color="#fffe00"/><stop offset="0.9870" stop-color="#dbff24"/><stop offset="0.9913" stop-color="#52ffad"/><stop offset="0.9932" stop-color="#10ffef"/><stop offset="0.9938" stop-color="#00f9ff"/><stop offset="0.9944" stop-color="#00dbff"/><stop offset="0.9975" stop-color="#001bff"/><stop offset="0.9981" stop-color="#0000f3"/><stop offset="1.0000" stop-color="#000080"/></radialGradient><radialGradient id="g158" gradientUnits="userSpaceOnUse" cx="2623.4" cy="854.7" r="768.6"><stop offset="0.8634" stop-color="#000080"/><stop offset="0.8652" stop-color="#0000f3"/><stop offset="0.8658" stop-color="#001aff"/><stop offset="0.8689" stop-color="#00daff"/><stop offset="0.8696" stop-color="#00f7ff"/><stop offset="0.8702" stop-color="#0efff1"/><stop offset="0.8739" stop-color="#8cff73"/><stop offset="0.8764" stop-color="#d9ff26"/><stop offset="0.8783" stop-color="#feff01"/><stop offset="0.8832" stop-color="#ffa600"/><stop offset="0.8919" stop-color="#ff6b00"/><stop offset="0.9081" stop-color="#ff4600"/><stop offset="0.9335" stop-color="#ff3200"/><stop offset="0.9602" stop-color="#ff4e00"/><stop offset="0.9727" stop-color="#ff7100"/><stop offset="0.9807" stop-color="#ffae00"/><stop offset="0.9851" stop-color="#feff01"/><stop offset="0.9870" stop-color="#d9ff26"/><stop offset="0.9913" stop-color="#50ffaf"/><stop offset="0.9932" stop-color="#0efff1"/><stop offset="0.9938" stop-color="#00f7ff"/><stop offset="0.9944" stop-color="#00daff"/><stop offset="0.9975" stop-color="#001aff"/><stop offset="0.9981" stop-color="#0000f3"/><stop offset="1.0000" stop-color="#000080"/></radialGradient><radialGradient id="g159" gradientUnits="userSpaceOnUse" cx="2623.4" cy="854.7" r="768.6"><stop offset="0.8634" stop-color="#000080"/><stop offset="0.8652" stop-color="#0000f2"/><stop offset="0.8658" stop-color="#001aff"/><stop offset="0.8689" stop-color="#00d9ff"/><stop offset="0.8696" stop-color="#00f6ff"/><stop offset="0.8702" stop-color="#0dfff2"/><stop offset="0.8739" stop-color="#8aff75"/><stop offset="0.8764" stop-color="#d7ff28"/><stop offset="0.8783" stop-color="#fbff04"/><stop offset="0.8832" stop-color="#ffa900"/><stop offset="0.8919" stop-color="#ff6e00"/><stop offset="0.9081" stop-color="#ff4900"/><stop offset="0.9335" stop-color="#ff3500"/><stop offset="0.9602" stop-color="#ff5100"/><stop offset="0.9727" stop-color="#ff7400"/><stop offset="0.9807" stop-color="#ffb000"/><stop offset="0.9851" stop-color="#fbff04"/><stop offset="0.9870" stop-color="#d7ff28"/><stop offset="0.9913" stop-color="#4effb1"/><stop offset="0.9932" stop-color="#0dfff2"/><stop offset="0.9938" stop-color="#00f6ff"/><stop offset="0.9944" stop-color="#00d9ff"/><stop offset="0.9975" stop-color="#001aff"/><stop offset="0.9981" stop-color="#0000f2"/><stop offset="1.0000" stop-color="#000080"/></radialGradient><radialGradient id="g160" gradientUnits="userSpaceOnUse" cx="2623.4" cy="854.7" r="768.6"><stop offset="0.8634" stop-color="#000080"/><stop offset="0.8652" stop-color="#0000fa"/><stop offset="0.8677" stop-color="#009eff"/><stop offset="0.8689" stop-color="#00ecff"/><stop offset="0.8696" stop-color="#05fffa"/><stop offset="0.8733" stop-color="#8bff74"/><stop offset="0.8758" stop-color="#dbff24"/><stop offset="0.8776" stop-color="#fdff02"/><stop offset="0.8820" stop-color="#ffb000"/><stop offset="0.8913" stop-color="#ff7100"/><stop offset="0.9075" stop-color="#ff4c00"/><stop offset="0.9335" stop-color="#ff3800"/><stop offset="0.9609" stop-color="#ff5500"/><stop offset="0.9733" stop-color="#ff7700"/><stop offset="0.9814" stop-color="#ffb000"/><stop offset="0.9857" stop-color="#fdff02"/><stop offset="0.9876" stop-color="#dbff24"/><stop offset="0.9919" stop-color="#4bffb4"/><stop offset="0.9938" stop-color="#05fffa"/><stop offset="0.9944" stop-color="#00ecff"/><stop offset="0.9975" stop-color="#0024ff"/><stop offset="0.9981" stop-color="#0000fa"/><stop offset="1.0000" stop-color="#000080"/></radialGradient><radialGradient id="g161" gradientUnits="userSpaceOnUse" cx="2623.4" cy="854.7" r="768.6"><stop offset="0.8634" stop-color="#000080"/><stop offset="0.8652" stop-color="#0000fa"/><stop offset="0.8671" stop-color="#0075ff"/><stop offset="0.8689" stop-color="#00ebff"/><stop offset="0.8696" stop-color="#03fffc"/><stop offset="0.8733" stop-color="#89ff76"/><stop offset="0.8758" stop-color="#d8ff27"/><stop offset="0.8776" stop-color="#fbff04"/><stop offset="0.8820" stop-color="#ffb300"/><stop offset="0.8913" stop-color="#ff7400"/><stop offset="0.9075" stop-color="#ff4f00"/><stop offset="0.9335" stop-color="#ff3c00"/><stop offset="0.9609" stop-color="#ff5800"/><stop offset="0.9733" stop-color="#ff7a00"/><stop offset="0.9814" stop-color="#ffb300"/><stop offset="0.9857" stop-color="#fbff04"/><stop offset="0.9876" stop-color="#d8ff27"/><stop offset="0.9919" stop-color="#49ffb6"/><stop offset="0.9938" stop-color="#03fffc"/><stop offset="0.9944" stop-color="#00ebff"/><stop offset="0.9975" stop-color="#0023ff"/><stop offset="0.9981" stop-color="#0000fa"/><stop offset="1.0000" stop-color="#000080"/></radialGradient><radialGradient id="g162" gradientUnits="userSpaceOnUse" cx="2623.4" cy="854.7" r="768.6"><stop offset="0.8634" stop-color="#000080"/><stop offset="0.8652" stop-color="#0000f9"/><stop offset="0.8665" stop-color="#004bff"/><stop offset="0.8689" stop-color="#00eaff"/><stop offset="0.8696" stop-color="#02fffd"/><stop offset="0.8733" stop-color="#87ff78"/><stop offset="0.8758" stop-color="#d6ff29"/><stop offset="0.8783" stop-color="#fffa00"/><stop offset="0.8820" stop-color="#ffb600"/><stop offset="0.8913" stop-color="#ff7700"/><stop offset="0.9075" stop-color="#ff5200"/><stop offset="0.9335" stop-color="#ff3f00"/><stop offset="0.9609" stop-color="#ff5b00"/><stop offset="0.9733" stop-color="#ff7c00"/><stop offset="0.9814" stop-color="#ffb600"/><stop offset="0.9851" stop-color="#fffa00"/><stop offset="0.9876" stop-color="#d6ff29"/><stop offset="0.9919" stop-color="#47ffb8"/><stop offset="0.9938" stop-color="#02fffd"/><stop offset="0.9944" stop-color="#00eaff"/><stop offset="0.9975" stop-color="#0023ff"/><stop offset="0.9981" stop-color="#0000f9"/><stop offset="1.0000" stop-color="#000080"/></radialGradient><radialGradient id="g163" gradientUnits="userSpaceOnUse" cx="2623.4" cy="854.7" r="768.6"><stop offset="0.8634" stop-color="#000080"/><stop offset="0.8652" stop-color="#0000f9"/><stop offset="0.8665" stop-color="#004aff"/><stop offset="0.8689" stop-color="#00e8ff"/><stop offset="0.8696" stop-color="#00ffff"/><stop offset="0.8733" stop-color="#85ff7a"/><stop offset="0.8758" stop-color="#d4ff2b"/><stop offset="0.8783" stop-color="#fffd00"/><stop offset="0.8820" stop-color="#ffb800"/><stop offset="0.8913" stop-color="#ff7900"/><stop offset="0.9075" stop-color="#ff5500"/><stop offset="0.9335" stop-color="#ff4200"/><stop offset="0.9609" stop-color="#ff5e00"/><stop offset="0.9733" stop-color="#ff7f00"/><stop offset="0.9814" stop-color="#ffb800"/><stop offset="0.9851" stop-color="#fffd00"/><stop offset="0.9876" stop-color="#d4ff2b"/><stop offset="0.9919" stop-color="#46ffb9"/><stop offset="0.9938" stop-color="#00ffff"/><stop offset="0.9944" stop-color="#00e8ff"/><stop offset="0.9975" stop-color="#0022ff"/><stop offset="0.9981" stop-color="#0000f9"/><stop offset="1.0000" stop-color="#000080"/></radialGradient><radialGradient id="g164" gradientUnits="userSpaceOnUse" cx="2623.4" cy="854.7" r="768.6"><stop offset="0.8634" stop-color="#000080"/><stop offset="0.8652" stop-color="#0000f8"/><stop offset="0.8665" stop-color="#004aff"/><stop offset="0.8689" stop-color="#00e7ff"/><stop offset="0.8696" stop-color="#00feff"/><stop offset="0.8733" stop-color="#83ff7c"/><stop offset="0.8758" stop-color="#d2ff2d"/><stop offset="0.8783" stop-color="#ffff00"/><stop offset="0.8820" stop-color="#ffbb00"/><stop offset="0.8913" stop-color="#ff7c00"/><stop offset="0.9075" stop-color="#ff5800"/><stop offset="0.9335" stop-color="#ff4500"/><stop offset="0.9609" stop-color="#ff6100"/><stop offset="0.9733" stop-color="#ff8200"/><stop offset="0.9814" stop-color="#ffbb00"/><stop offset="0.9851" stop-color="#ffff00"/><stop offset="0.9876" stop-color="#d2ff2d"/><stop offset="0.9919" stop-color="#44ffbb"/><stop offset="0.9938" stop-color="#00feff"/><stop offset="0.9944" stop-color="#00e7ff"/><stop offset="0.9975" stop-color="#0021ff"/><stop offset="0.9981" stop-color="#0000f8"/><stop offset="1.0000" stop-color="#000080"/></radialGradient><radialGradient id="g165" gradientUnits="userSpaceOnUse" cx="2623.4" cy="854.7" r="768.6"><stop offset="0.8634" stop-color="#000080"/><stop offset="0.8652" stop-color="#0002ff"/><stop offset="0.8683" stop-color="#00daff"/><stop offset="0.8689" stop-color="#00f5ff"/><stop offset="0.8696" stop-color="#0ffff0"/><stop offset="0.8727" stop-color="#84ff7b"/><stop offset="0.8745" stop-color="#c5ff3a"/><stop offset="0.8776" stop-color="#fffe00"/><stop offset="0.8814" stop-color="#ffbb00"/><stop offset="0.8907" stop-color="#ff7f00"/><stop offset="0.9075" stop-color="#ff5b00"/><stop offset="0.9335" stop-color="#ff4800"/><stop offset="0.9609" stop-color="#ff6300"/><stop offset="0.9739" stop-color="#ff8500"/><stop offset="0.9820" stop-color="#ffbb00"/><stop offset="0.9857" stop-color="#fffe00"/><stop offset="0.9888" stop-color="#c5ff3a"/><stop offset="0.9925" stop-color="#40ffbf"/><stop offset="0.9938" stop-color="#0ffff0"/><stop offset="0.9944" stop-color="#00f5ff"/><stop offset="0.9950" stop-color="#00daff"/><stop offset="0.9981" stop-color="#0002ff"/><stop offset="1.0000" stop-color="#000080"/></radialGradient><radialGradient id="g166" gradientUnits="userSpaceOnUse" cx="2623.4" cy="854.7" r="768.6"><stop offset="0.8634" stop-color="#000080"/><stop offset="0.8652" stop-color="#0001ff"/><stop offset="0.8683" stop-color="#00d8ff"/><stop offset="0.8689" stop-color="#00f4ff"/><stop offset="0.8696" stop-color="#0efff1"/><stop offset="0.8727" stop-color="#82ff7d"/><stop offset="0.8745" stop-color="#c2ff3d"/><stop offset="0.8776" stop-color="#feff01"/><stop offset="0.8814" stop-color="#ffbe00"/><stop offset="0.8907" stop-color="#ff8200"/><stop offset="0.9075" stop-color="#ff5e00"/><stop offset="0.9342" stop-color="#ff4c00"/><stop offset="0.9609" stop-color="#ff6600"/><stop offset="0.9739" stop-color="#ff8800"/><stop offset="0.9820" stop-color="#ffbe00"/><stop offset="0.9857" stop-color="#feff01"/><stop offset="0.9888" stop-color="#c2ff3d"/><stop offset="0.9925" stop-color="#3fffc0"/><stop offset="0.9938" stop-color="#0efff1"/><stop offset="0.9944" stop-color="#00f4ff"/><stop offset="0.9950" stop-color="#00d8ff"/><stop offset="0.9981" stop-color="#0001ff"/><stop offset="1.0000" stop-color="#000080"/></radialGradient><radialGradient id="g167" gradientUnits="userSpaceOnUse" cx="2623.4" cy="854.7" r="768.6"><stop offset="0.8634" stop-color="#000080"/><stop offset="0.8652" stop-color="#0001ff"/><stop offset="0.8683" stop-color="#00d7ff"/><stop offset="0.8689" stop-color="#00f3ff"/><stop offset="0.8696" stop-color="#0cfff3"/><stop offset="0.8727" stop-color="#80ff7f"/><stop offset="0.8745" stop-color="#c0ff3f"/><stop offset="0.8776" stop-color="#fbff04"/><stop offset="0.8814" stop-color="#ffc100"/><stop offset="0.8907" stop-color="#ff8500"/><stop offset="0.9075" stop-color="#ff6100"/><stop offset="0.9342" stop-color="#ff4f00"/><stop offset="0.9609" stop-color="#ff6900"/><stop offset="0.9739" stop-color="#ff8b00"/><stop offset="0.9820" stop-color="#ffc100"/><stop offset="0.9857" stop-color="#fbff04"/><stop offset="0.9888" stop-color="#c0ff3f"/><stop offset="0.9925" stop-color="#3dffc2"/><stop offset="0.9938" stop-color="#0cfff3"/><stop offset="0.9944" stop-color="#00f3ff"/><stop offset="0.9950" stop-color="#00d7ff"/><stop offset="0.9981" stop-color="#0001ff"/><stop offset="1.0000" stop-color="#000080"/></radialGradient><radialGradient id="g168" gradientUnits="userSpaceOnUse" cx="2623.4" cy="854.7" r="768.6"><stop offset="0.8634" stop-color="#000080"/><stop offset="0.8652" stop-color="#0000ff"/><stop offset="0.8683" stop-color="#00d4ff"/><stop offset="0.8689" stop-color="#00f0ff"/><stop offset="0.8696" stop-color="#09fff6"/><stop offset="0.8727" stop-color="#7cff83"/><stop offset="0.8745" stop-color="#bcff43"/><stop offset="0.8783" stop-color="#fffd00"/><stop offset="0.8814" stop-color="#ffc600"/><stop offset="0.8907" stop-color="#ff8b00"/><stop offset="0.9075" stop-color="#ff6800"/><stop offset="0.9342" stop-color="#ff5500"/><stop offset="0.9615" stop-color="#ff7100"/><stop offset="0.9739" stop-color="#ff9100"/><stop offset="0.9820" stop-color="#ffc600"/><stop offset="0.9851" stop-color="#fffd00"/><stop offset="0.9888" stop-color="#bcff43"/><stop offset="0.9925" stop-color="#39ffc6"/><stop offset="0.9938" stop-color="#09fff6"/><stop offset="0.9944" stop-color="#00f0ff"/><stop offset="0.9950" stop-color="#00d4ff"/><stop offset="0.9981" stop-color="#0000ff"/><stop offset="1.0000" stop-color="#000080"/></radialGradient><radialGradient id="g169" gradientUnits="userSpaceOnUse" cx="2623.4" cy="854.7" r="768.6"><stop offset="0.8634" stop-color="#000080"/><stop offset="0.8646" stop-color="#0000db"/><stop offset="0.8652" stop-color="#000aff"/><stop offset="0.8677" stop-color="#00c1ff"/><stop offset="0.8683" stop-color="#00e6ff"/><stop offset="0.8689" stop-color="#01fffe"/><stop offset="0.8714" stop-color="#67ff98"/><stop offset="0.8739" stop-color="#c2ff3d"/><stop offset="0.8776" stop-color="#fffc00"/><stop offset="0.8807" stop-color="#ffc800"/><stop offset="0.8901" stop-color="#ff8e00"/><stop offset="0.9068" stop-color="#ff6b00"/><stop offset="0.9342" stop-color="#ff5900"/><stop offset="0.9615" stop-color="#ff7300"/><stop offset="0.9745" stop-color="#ff9400"/><stop offset="0.9826" stop-color="#ffc800"/><stop offset="0.9857" stop-color="#fffc00"/><stop offset="0.9894" stop-color="#c2ff3d"/><stop offset="0.9932" stop-color="#36ffc9"/><stop offset="0.9944" stop-color="#01fffe"/><stop offset="0.9950" stop-color="#00e6ff"/><stop offset="0.9957" stop-color="#00c1ff"/><stop offset="0.9981" stop-color="#000aff"/><stop offset="0.9988" stop-color="#0000db"/><stop offset="1.0000" stop-color="#000080"/></radialGradient><radialGradient id="g170" gradientUnits="userSpaceOnUse" cx="2623.4" cy="854.7" r="768.6"><stop offset="0.8634" stop-color="#000080"/><stop offset="0.8646" stop-color="#0000db"/><stop offset="0.8652" stop-color="#0009ff"/><stop offset="0.8677" stop-color="#00c0ff"/><stop offset="0.8683" stop-color="#00e5ff"/><stop offset="0.8689" stop-color="#00ffff"/><stop offset="0.8720" stop-color="#7cff83"/><stop offset="0.8739" stop-color="#c0ff3f"/><stop offset="0.8776" stop-color="#fffe00"/><stop offset="0.8807" stop-color="#ffcb00"/><stop offset="0.8901" stop-color="#ff9100"/><stop offset="0.9068" stop-color="#ff6e00"/><stop offset="0.9342" stop-color="#ff5c00"/><stop offset="0.9615" stop-color="#ff7600"/><stop offset="0.9745" stop-color="#ff9700"/><stop offset="0.9826" stop-color="#ffcb00"/><stop offset="0.9857" stop-color="#fffe00"/><stop offset="0.9894" stop-color="#c0ff3f"/><stop offset="0.9932" stop-color="#34ffcb"/><stop offset="0.9944" stop-color="#00ffff"/><stop offset="0.9950" stop-color="#00e5ff"/><stop offset="0.9957" stop-color="#00c0ff"/><stop offset="0.9981" stop-color="#0009ff"/><stop offset="0.9988" stop-color="#0000db"/><stop offset="1.0000" stop-color="#000080"/></radialGradient><radialGradient id="g171" gradientUnits="userSpaceOnUse" cx="2623.4" cy="854.7" r="768.6"><stop offset="0.8634" stop-color="#000080"/><stop offset="0.8646" stop-color="#0000da"/><stop offset="0.8652" stop-color="#0009ff"/><stop offset="0.8677" stop-color="#00bfff"/><stop offset="0.8683" stop-color="#00e3ff"/><stop offset="0.8689" stop-color="#00fdff"/><stop offset="0.8720" stop-color="#7aff85"/><stop offset="0.8739" stop-color="#bdff42"/><stop offset="0.8776" stop-color="#fdff02"/><stop offset="0.8807" stop-color="#ffcd00"/><stop offset="0.8901" stop-color="#ff9400"/><stop offset="0.9068" stop-color="#ff7100"/><stop offset="0.9342" stop-color="#ff5f00"/><stop offset="0.9615" stop-color="#ff7900"/><stop offset="0.9745" stop-color="#ff9900"/><stop offset="0.9826" stop-color="#ffcd00"/><stop offset="0.9857" stop-color="#fdff02"/><stop offset="0.9894" stop-color="#bdff42"/><stop offset="0.9932" stop-color="#32ffcd"/><stop offset="0.9944" stop-color="#00fdff"/><stop offset="0.9950" stop-color="#00e3ff"/><stop offset="0.9957" stop-color="#00bfff"/><stop offset="0.9981" stop-color="#0009ff"/><stop offset="0.9988" stop-color="#0000da"/><stop offset="1.0000" stop-color="#000080"/></radialGradient><radialGradient id="g172" gradientUnits="userSpaceOnUse" cx="2623.4" cy="854.7" r="768.6"><stop offset="0.8634" stop-color="#000080"/><stop offset="0.8646" stop-color="#0000da"/><stop offset="0.8652" stop-color="#0008ff"/><stop offset="0.8677" stop-color="#00beff"/><stop offset="0.8683" stop-color="#00e2ff"/><stop offset="0.8689" stop-color="#00fcff"/><stop offset="0.8733" stop-color="#a5ff5a"/><stop offset="0.8739" stop-color="#bbff44"/><stop offset="0.8776" stop-color="#fbff04"/><stop offset="0.8807" stop-color="#ffd000"/><stop offset="0.8901" stop-color="#ff9700"/><stop offset="0.9075" stop-color="#ff7400"/><stop offset="0.9342" stop-color="#ff6200"/><stop offset="0.9615" stop-color="#ff7c00"/><stop offset="0.9745" stop-color="#ff9c00"/><stop offset="0.9826" stop-color="#ffd000"/><stop offset="0.9857" stop-color="#fbff04"/><stop offset="0.9894" stop-color="#bbff44"/><stop offset="0.9932" stop-color="#31ffce"/><stop offset="0.9944" stop-color="#00fcff"/><stop offset="0.9950" stop-color="#00e2ff"/><stop offset="0.9957" stop-color="#00beff"/><stop offset="0.9981" stop-color="#0008ff"/><stop offset="0.9988" stop-color="#0000da"/><stop offset="1.0000" stop-color="#000080"/></radialGradient><radialGradient id="g173" gradientUnits="userSpaceOnUse" cx="2623.4" cy="854.7" r="768.6"><stop offset="0.8634" stop-color="#000080"/><stop offset="0.8646" stop-color="#0000da"/><stop offset="0.8652" stop-color="#0008ff"/><stop offset="0.8677" stop-color="#00bcff"/><stop offset="0.8683" stop-color="#00e0ff"/><stop offset="0.8689" stop-color="#00faff"/><stop offset="0.8720" stop-color="#76ff89"/><stop offset="0.8739" stop-color="#b9ff46"/><stop offset="0.8783" stop-color="#fffb00"/><stop offset="0.8807" stop-color="#ffd300"/><stop offset="0.8901" stop-color="#ff9a00"/><stop offset="0.9075" stop-color="#ff7700"/><stop offset="0.9342" stop-color="#ff6500"/><stop offset="0.9615" stop-color="#ff7f00"/><stop offset="0.9745" stop-color="#ff9f00"/><stop offset="0.9826" stop-color="#ffd300"/><stop offset="0.9851" stop-color="#fffb00"/><stop offset="0.9894" stop-color="#b9ff46"/><stop offset="0.9932" stop-color="#2fffd0"/><stop offset="0.9944" stop-color="#00faff"/><stop offset="0.9950" stop-color="#00e0ff"/><stop offset="0.9957" stop-color="#00bcff"/><stop offset="0.9981" stop-color="#0008ff"/><stop offset="0.9988" stop-color="#0000da"/><stop offset="1.0000" stop-color="#000080"/></radialGradient><radialGradient id="g174" gradientUnits="userSpaceOnUse" cx="2623.4" cy="854.7" r="768.6"><stop offset="0.8634" stop-color="#000080"/><stop offset="0.8646" stop-color="#0000e2"/><stop offset="0.8652" stop-color="#0014ff"/><stop offset="0.8677" stop-color="#00d6ff"/><stop offset="0.8683" stop-color="#00f2ff"/><stop offset="0.8689" stop-color="#0ffff0"/><stop offset="0.8714" stop-color="#78ff87"/><stop offset="0.8727" stop-color="#a9ff56"/><stop offset="0.8733" stop-color="#bbff44"/><stop offset="0.8770" stop-color="#f9ff06"/><stop offset="0.8783" stop-color="#fff000"/><stop offset="0.8801" stop-color="#ffd500"/><stop offset="0.8894" stop-color="#ff9d00"/><stop offset="0.9068" stop-color="#ff7a00"/><stop offset="0.9342" stop-color="#ff6800"/><stop offset="0.9621" stop-color="#ff8200"/><stop offset="0.9752" stop-color="#ffa200"/><stop offset="0.9839" stop-color="#ffdb00"/><stop offset="0.9857" stop-color="#fffb00"/><stop offset="0.9894" stop-color="#c5ff3a"/><stop offset="0.9901" stop-color="#bbff44"/><stop offset="0.9913" stop-color="#90ff6f"/><stop offset="0.9938" stop-color="#2bffd4"/><stop offset="0.9944" stop-color="#0ffff0"/><stop offset="0.9950" stop-color="#00f2ff"/><stop offset="0.9957" stop-color="#00d6ff"/><stop offset="0.9981" stop-color="#0014ff"/><stop offset="0.9988" stop-color="#0000e2"/><stop offset="1.0000" stop-color="#000080"/></radialGradient><radialGradient id="g175" gradientUnits="userSpaceOnUse" cx="2623.4" cy="854.7" r="768.6"><stop offset="0.8634" stop-color="#000080"/><stop offset="0.8646" stop-color="#0000e1"/><stop offset="0.8652" stop-color="#0013ff"/><stop offset="0.8677" stop-color="#00d4ff"/><stop offset="0.8683" stop-color="#00f0ff"/><stop offset="0.8689" stop-color="#0dfff2"/><stop offset="0.8714" stop-color="#76ff89"/><stop offset="0.8727" stop-color="#a6ff59"/><stop offset="0.8733" stop-color="#b8ff47"/><stop offset="0.8776" stop-color="#fffd00"/><stop offset="0.8801" stop-color="#ffd700"/><stop offset="0.8894" stop-color="#ffa000"/><stop offset="0.9068" stop-color="#ff7d00"/><stop offset="0.9342" stop-color="#ff6c00"/><stop offset="0.9621" stop-color="#ff8500"/><stop offset="0.9752" stop-color="#ffa500"/><stop offset="0.9839" stop-color="#ffde00"/><stop offset="0.9857" stop-color="#fffd00"/><stop offset="0.9901" stop-color="#b8ff47"/><stop offset="0.9913" stop-color="#8eff71"/><stop offset="0.9938" stop-color="#29ffd6"/><stop offset="0.9944" stop-color="#0dfff2"/><stop offset="0.9950" stop-color="#00f0ff"/><stop offset="0.9957" stop-color="#00d4ff"/><stop offset="0.9981" stop-color="#0013ff"/><stop offset="0.9988" stop-color="#0000e1"/><stop offset="1.0000" stop-color="#000080"/></radialGradient><radialGradient id="g176" gradientUnits="userSpaceOnUse" cx="2623.4" cy="854.7" r="768.6"><stop offset="0.8634" stop-color="#000080"/><stop offset="0.8646" stop-color="#0000e1"/><stop offset="0.8652" stop-color="#0012ff"/><stop offset="0.8677" stop-color="#00d3ff"/><stop offset="0.8683" stop-color="#00efff"/><stop offset="0.8689" stop-color="#0cfff3"/><stop offset="0.8714" stop-color="#74ff8b"/><stop offset="0.8727" stop-color="#a4ff5b"/><stop offset="0.8733" stop-color="#b6ff49"/><stop offset="0.8776" stop-color="#feff01"/><stop offset="0.8801" stop-color="#ffda00"/><stop offset="0.8894" stop-color="#ffa300"/><stop offset="0.9068" stop-color="#ff8000"/><stop offset="0.9342" stop-color="#ff6f00"/><stop offset="0.9621" stop-color="#ff8800"/><stop offset="0.9752" stop-color="#ffa800"/><stop offset="0.9839" stop-color="#ffe100"/><stop offset="0.9857" stop-color="#feff01"/><stop offset="0.9901" stop-color="#b6ff49"/><stop offset="0.9913" stop-color="#8cff73"/><stop offset="0.9938" stop-color="#27ffd8"/><stop offset="0.9944" stop-color="#0cfff3"/><stop offset="0.9950" stop-color="#00efff"/><stop offset="0.9957" stop-color="#00d3ff"/><stop offset="0.9981" stop-color="#0012ff"/><stop offset="0.9988" stop-color="#0000e1"/><stop offset="1.0000" stop-color="#000080"/></radialGradient><radialGradient id="g177" gradientUnits="userSpaceOnUse" cx="2623.4" cy="854.7" r="768.6"><stop offset="0.8634" stop-color="#000080"/><stop offset="0.8646" stop-color="#0000e0"/><stop offset="0.8652" stop-color="#0012ff"/><stop offset="0.8677" stop-color="#00d2ff"/><stop offset="0.8683" stop-color="#00edff"/><stop offset="0.8689" stop-color="#0afff5"/><stop offset="0.8714" stop-color="#72ff8d"/><stop offset="0.8727" stop-color="#a2ff5d"/><stop offset="0.8733" stop-color="#b4ff4b"/><stop offset="0.8776" stop-color="#fcff03"/><stop offset="0.8801" stop-color="#ffdd00"/><stop offset="0.8894" stop-color="#ffa600"/><stop offset="0.9068" stop-color="#ff8300"/><stop offset="0.9342" stop-color="#ff7200"/><stop offset="0.9621" stop-color="#ff8c00"/><stop offset="0.9752" stop-color="#ffab00"/><stop offset="0.9839" stop-color="#ffe400"/><stop offset="0.9857" stop-color="#fcff03"/><stop offset="0.9901" stop-color="#b4ff4b"/><stop offset="0.9913" stop-color="#8aff75"/><stop offset="0.9938" stop-color="#26ffd9"/><stop offset="0.9944" stop-color="#0afff5"/><stop offset="0.9950" stop-color="#00edff"/><stop offset="0.9957" stop-color="#00d2ff"/><stop offset="0.9981" stop-color="#0012ff"/><stop offset="0.9988" stop-color="#0000e0"/><stop offset="1.0000" stop-color="#000080"/></radialGradient><radialGradient id="g178" gradientUnits="userSpaceOnUse" cx="2623.4" cy="854.7" r="768.6"><stop offset="0.8634" stop-color="#000080"/><stop offset="0.8646" stop-color="#0000e0"/><stop offset="0.8652" stop-color="#0011ff"/><stop offset="0.8677" stop-color="#00d0ff"/><stop offset="0.8683" stop-color="#00ecff"/><stop offset="0.8689" stop-color="#08fff7"/><stop offset="0.8714" stop-color="#6fff90"/><stop offset="0.8727" stop-color="#a0ff5f"/><stop offset="0.8733" stop-color="#b2ff4d"/><stop offset="0.8783" stop-color="#fffb00"/><stop offset="0.8801" stop-color="#ffe000"/><stop offset="0.8894" stop-color="#ffa900"/><stop offset="0.9068" stop-color="#ff8700"/><stop offset="0.9342" stop-color="#ff7500"/><stop offset="0.9621" stop-color="#ff8f00"/><stop offset="0.9752" stop-color="#ffae00"/><stop offset="0.9839" stop-color="#ffe600"/><stop offset="0.9851" stop-color="#fffb00"/><stop offset="0.9901" stop-color="#b2ff4d"/><stop offset="0.9913" stop-color="#88ff77"/><stop offset="0.9938" stop-color="#24ffdb"/><stop offset="0.9944" stop-color="#08fff7"/><stop offset="0.9950" stop-color="#00ecff"/><stop offset="0.9957" stop-color="#00d0ff"/><stop offset="0.9981" stop-color="#0011ff"/><stop offset="0.9988" stop-color="#0000e0"/><stop offset="1.0000" stop-color="#000080"/></radialGradient><radialGradient id="g179" gradientUnits="userSpaceOnUse" cx="2623.4" cy="854.7" r="768.6"><stop offset="0.8634" stop-color="#000080"/><stop offset="0.8646" stop-color="#0000e9"/><stop offset="0.8652" stop-color="#001fff"/><stop offset="0.8671" stop-color="#00bdff"/><stop offset="0.8677" stop-color="#00e2ff"/><stop offset="0.8683" stop-color="#01fffe"/><stop offset="0.8708" stop-color="#72ff8d"/><stop offset="0.8720" stop-color="#a7ff58"/><stop offset="0.8770" stop-color="#faff05"/><stop offset="0.8789" stop-color="#ffe600"/><stop offset="0.8888" stop-color="#ffac00"/><stop offset="0.9062" stop-color="#ff8a00"/><stop offset="0.9342" stop-color="#ff7800"/><stop offset="0.9627" stop-color="#ff9200"/><stop offset="0.9758" stop-color="#ffb100"/><stop offset="0.9845" stop-color="#ffe600"/><stop offset="0.9863" stop-color="#faff05"/><stop offset="0.9913" stop-color="#a7ff58"/><stop offset="0.9944" stop-color="#1fffe0"/><stop offset="0.9950" stop-color="#01fffe"/><stop offset="0.9957" stop-color="#00e2ff"/><stop offset="0.9963" stop-color="#00bdff"/><stop offset="0.9981" stop-color="#001fff"/><stop offset="0.9988" stop-color="#0000e9"/><stop offset="1.0000" stop-color="#000080"/></radialGradient><linearGradient id="cbar" x1="0" y1="1" x2="0" y2="0"><stop offset="0.0000" stop-color="#000080"/><stop offset="0.1244" stop-color="#0000ff"/><stop offset="0.3733" stop-color="#00ffff"/><stop offset="0.6221" stop-color="#ffff00"/><stop offset="0.8709" stop-color="#ff0000"/><stop offset="0.9954" stop-color="#800000"/><stop offset="1" stop-color="#800000"/></linearGradient></defs><path d="M1337 325 H3431 V1687 H1337 Z" fill="none" stroke="#777" stroke-width="2"/><rect x="1337" y="326.0" width="1339.4" height="5.6" fill="url(#g1)"/><rect x="1337" y="331.0" width="1339.4" height="5.6" fill="url(#g2)"/><rect x="1337" y="336.0" width="1339.4" height="5.6" fill="url(#g3)"/><rect x="1337" y="341.0" width="1339.4" height="5.6" fill="url(#g4)"/><rect x="1337" y="346.0" width="1339.4" height="5.6" fill="url(#g5)"/><rect x="1337" y="351.0" width="1339.4" height="5.6" fill="url(#g6)"/><rect x="1337" y="356.0" width="1339.4" height="5.6" fill="url(#g7)"/><rect x="1337" y="361.0" width="1339.4" height="5.6" fill="url(#g8)"/><rect x="1337" y="366.0" width="1339.4" height="5.6" fill="url(#g9)"/><rect x="1337" y="371.0" width="1339.4" height="5.6" fill="url(#g10)"/><rect x="1337" y="376.0" width="1339.4" height="5.6" fill="url(#g11)"/><rect x="1337" y="381.0" width="1339.4" height="5.6" fill="url(#g12)"/><rect x="1337" y="386.0" width="1339.4" height="5.6" fill="url(#g13)"/><rect x="1337" y="391.0" width="1339.4" height="5.6" fill="url(#g14)"/><rect x="1337" y="396.0" width="1339.4" height="5.6" fill="url(#g15)"/><rect x="1337" y="401.0" width="1339.4" height="5.6" fill="url(#g16)"/><rect x="1337" y="406.0" width="1339.4" height="5.6" fill="url(#g17)"/><rect x="1337" y="411.0" width="1339.4" height="5.6" fill="url(#g18)"/><rect x="1337" y="416.0" width="1339.4" height="5.6" fill="url(#g19)"/><rect x="1337" y="421.0" width="1339.4" height="5.6" fill="url(#g20)"/><rect x="1337" y="426.0" width="1339.4" height="5.6" fill="url(#g21)"/><rect x="1337" y="431.0" width="1339.4" height="5.6" fill="url(#g22)"/><rect x="1337" y="436.0" width="1339.4" height="5.6" fill="url(#g23)"/><rect x="1337" y="441.0" width="1339.4" height="5.6" fill="url(#g24)"/><rect x="1337" y="446.0" width="1339.4" height="5.6" fill="url(#g25)"/><rect x="1337" y="451.0" width="1339.4" height="5.6" fill="url(#g26)"/><rect x="1337" y="456.0" width="1339.4" height="5.6" fill="url(#g27)"/><rect x="1337" y="461.0" width="1339.4" height="5.6" fill="url(#g28)"/><rect x="1337" y="466.0" width="1339.4" height="5.6" fill="url(#g29)"/><rect x="1337" y="471.0" width="1339.4" height="5.6" fill="url(#g30)"/><rect x="1337" y="476.0" width="1339.4" height="5.6" fill="url(#g31)"/><rect x="1337" y="481.0" width="1339.4" height="5.6" fill="url(#g32)"/><rect x="1337" y="486.0" width="1339.4" height="5.6" fill="url(#g33)"/><rect x="1337" y="491.0" width="1339.4" height="5.6" fill="url(#g34)"/><rect x="1337" y="496.0" width="1339.4" height="5.6" fill="url(#g35)"/><rect x="1337" y="501.0" width="1339.4" height="5.6" fill="url(#g36)"/><rect x="1337" y="506.0" width="1339.4" height="5.6" fill="url(#g37)"/><rect x="1337" y="511.0" width="1339.4" height="5.6" fill="url(#g38)"/><rect x="1337" y="516.0" width="1339.4" height="5.6" fill="url(#g39)"/><rect x="1337" y="521.0" width="1339.4" height="5.6" fill="url(#g40)"/><rect x="1337" y="526.0" width="1339.4" height="5.6" fill="url(#g41)"/><rect x="1337" y="531.0" width="1339.4" height="5.6" fill="url(#g42)"/><rect x="1337" y="536.0" width="1339.4" height="5.6" fill="url(#g43)"/><rect x="1337" y="541.0" width="1339.4" height="5.6" fill="url(#g44)"/><rect x="1337" y="546.0" width="1339.4" height="5.6" fill="url(#g45)"/><rect x="1337" y="551.0" width="1339.4" height="5.6" fill="url(#g46)"/><rect x="1337" y="556.0" width="1339.4" height="5.6" fill="url(#g47)"/><rect x="1337" y="561.0" width="1339.4" height="5.6" fill="url(#g48)"/><rect x="1337" y="566.0" width="1339.4" height="5.6" fill="url(#g49)"/><rect x="1337" y="571.0" width="1339.4" height="5.6" fill="url(#g50)"/><rect x="1337" y="576.0" width="1339.4" height="5.6" fill="url(#g51)"/><rect x="1337" y="581.0" width="1339.4" height="5.6" fill="url(#g52)"/><rect x="1337" y="586.0" width="1339.4" height="5.6" fill="url(#g53)"/><rect x="1337" y="591.0" width="1339.4" height="5.6" fill="url(#g54)"/><rect x="1337" y="596.0" width="1339.4" height="5.6" fill="url(#g55)"/><rect x="1337" y="601.0" width="1339.4" height="5.6" fill="url(#g56)"/><rect x="1337" y="606.0" width="1339.4" height="5.6" fill="url(#g57)"/><rect x="1337" y="611.0" width="1339.4" height="5.6" fill="url(#g58)"/><rect x="1337" y="616.0" width="1339.4" height="5.6" fill="url(#g59)"/><rect x="1337" y="621.0" width="1339.4" height="5.6" fill="url(#g60)"/><rect x="1337" y="626.0" width="1339.4" height="5.6" fill="url(#g61)"/><rect x="1337" y="631.0" width="1339.4" height="5.6" fill="url(#g62)"/><rect x="1337" y="636.0" width="1339.4" height="5.6" fill="url(#g63)"/><rect x="1337" y="641.0" width="1339.4" height="5.6" fill="url(#g64)"/><rect x="1337" y="646.0" width="1339.4" height="5.6" fill="url(#g65)"/><rect x="1337" y="651.0" width="1339.4" height="5.6" fill="url(#g66)"/><rect x="1337" y="656.0" width="1339.4" height="5.6" fill="url(#g67)"/><rect x="1337" y="661.0" width="1339.4" height="5.6" fill="url(#g68)"/><rect x="1337" y="666.0" width="1339.4" height="5.6" fill="url(#g69)"/><rect x="1337" y="671.0" width="1339.4" height="5.6" fill="url(#g70)"/><rect x="1337" y="676.0" width="1339.4" height="5.6" fill="url(#g71)"/><rect x="1337" y="681.0" width="1339.4" height="5.6" fill="url(#g72)"/><rect x="1337" y="686.0" width="1339.4" height="5.6" fill="url(#g73)"/><rect x="1337" y="691.0" width="1339.4" height="5.6" fill="url(#g74)"/><rect x="1337" y="696.0" width="1339.4" height="5.6" fill="url(#g75)"/><rect x="1337" y="701.0" width="1339.4" height="5.6" fill="url(#g76)"/><rect x="1337" y="706.0" width="1339.4" height="5.6" fill="url(#g77)"/><rect x="1337" y="711.0" width="1339.4" height="5.6" fill="url(#g78)"/><rect x="1337" y="716.0" width="1339.4" height="5.6" fill="url(#g79)"/><rect x="1337" y="721.0" width="1339.4" height="5.6" fill="url(#g80)"/><rect x="1337" y="726.0" width="1339.4" height="5.6" fill="url(#g81)"/><rect x="1337" y="731.0" width="1339.4" height="5.6" fill="url(#g82)"/><rect x="1337" y="736.0" width="1339.4" height="5.6" fill="url(#g83)"/><rect x="1337" y="741.0" width="1339.4" height="5.6" fill="url(#g84)"/><rect x="1337" y="746.0" width="1339.4" height="5.6" fill="url(#g85)"/><rect x="1337" y="751.0" width="1339.4" height="5.6" fill="url(#g86)"/><rect x="1337" y="756.0" width="1339.4" height="5.6" fill="url(#g87)"/><rect x="1337" y="761.0" width="1339.4" height="5.6" fill="url(#g88)"/><rect x="1337" y="766.0" width="1339.4" height="5.6" fill="url(#g89)"/><rect x="1337" y="771.0" width="1339.4" height="5.6" fill="url(#g90)"/><rect x="1337" y="776.0" width="1339.4" height="5.6" fill="url(#g91)"/><rect x="1337" y="781.0" width="1339.4" height="5.6" fill="url(#g92)"/><rect x="1337" y="786.0" width="1339.4" height="5.6" fill="url(#g93)"/><rect x="1337" y="791.0" width="1339.4" height="5.6" fill="url(#g94)"/><rect x="1337" y="796.0" width="1339.4" height="5.6" fill="url(#g95)"/><rect x="1337" y="801.0" width="1339.4" height="5.6" fill="url(#g96)"/><rect x="1337" y="806.0" width="1339.4" height="1.6" fill="url(#g97)"/><rect x="1854.8" y="806.5" width="105.0" height="3.6" fill="url(#g98)"/><rect x="1854.8" y="809.5" width="105.0" height="3.6" fill="url(#g99)"/><rect x="1854.8" y="812.5" width="105.0" height="3.6" fill="url(#g100)"/><rect x="1854.8" y="815.5" width="105.0" height="3.6" fill="url(#g101)"/><rect x="1854.8" y="818.5" width="105.0" height="3.6" fill="url(#g102)"/><rect x="1854.8" y="821.5" width="105.0" height="3.6" fill="url(#g103)"/><rect x="1854.8" y="824.5" width="105.0" height="3.6" fill="url(#g104)"/><rect x="1854.8" y="827.5" width="105.0" height="3.6" fill="url(#g105)"/><rect x="1854.8" y="830.5" width="105.0" height="3.6" fill="url(#g106)"/><rect x="1854.8" y="833.5" width="105.0" height="3.6" fill="url(#g107)"/><rect x="1854.8" y="836.5" width="105.0" height="3.6" fill="url(#g108)"/><rect x="1854.8" y="839.5" width="105.0" height="3.6" fill="url(#g109)"/><rect x="1854.8" y="842.5" width="105.0" height="3.6" fill="url(#g110)"/><rect x="1854.8" y="845.5" width="105.0" height="3.6" fill="url(#g111)"/><rect x="1854.8" y="848.5" width="105.0" height="3.6" fill="url(#g112)"/><rect x="1854.8" y="851.5" width="105.0" height="3.6" fill="url(#g113)"/><rect x="1854.8" y="854.5" width="105.0" height="0.8" fill="url(#g114)"/><path d="M1854.8 853.1 A768.6 768.6 0 0 0 1854.9 869.8 L1959.9 867.7 A663.6 663.6 0 0 1 1959.8 853.4 Z" fill="url(#g115)"/><path d="M1854.9 866.5 A768.6 768.6 0 0 0 1855.3 883.2 L1960.3 879.3 A663.6 663.6 0 0 1 1959.9 864.9 Z" fill="url(#g116)"/><path d="M1855.2 880.0 A768.6 768.6 0 0 0 1855.9 896.6 L1960.8 890.9 A663.6 663.6 0 0 1 1960.2 876.5 Z" fill="url(#g117)"/><path d="M1855.8 893.4 A768.6 768.6 0 0 0 1856.8 910.0 L1961.5 902.4 A663.6 663.6 0 0 1 1960.7 888.1 Z" fill="url(#g118)"/><path d="M1856.5 906.7 A768.6 768.6 0 0 0 1857.9 923.3 L1962.5 914.0 A663.6 663.6 0 0 1 1961.3 899.6 Z" fill="url(#g119)"/><path d="M1857.6 920.1 A768.6 768.6 0 0 0 1859.2 936.7 L1963.6 925.5 A663.6 663.6 0 0 1 1962.2 911.2 Z" fill="url(#g119)"/><path d="M1858.8 933.5 A768.6 768.6 0 0 0 1860.7 950.0 L1964.9 937.0 A663.6 663.6 0 0 1 1963.3 922.7 Z" fill="url(#g120)"/><path d="M1860.3 946.8 A768.6 768.6 0 0 0 1862.5 963.3 L1966.5 948.5 A663.6 663.6 0 0 1 1964.6 934.2 Z" fill="url(#g121)"/><path d="M1862.0 960.1 A768.6 768.6 0 0 0 1864.5 976.6 L1968.2 959.9 A663.6 663.6 0 0 1 1966.1 945.7 Z" fill="url(#g122)"/><path d="M1864.0 973.4 A768.6 768.6 0 0 0 1866.7 989.8 L1970.1 971.3 A663.6 663.6 0 0 1 1967.8 957.2 Z" fill="url(#g123)"/><path d="M1866.2 986.6 A768.6 768.6 0 0 0 1869.2 1003.0 L1972.3 982.7 A663.6 663.6 0 0 1 1969.7 968.6 Z" fill="url(#g123)"/><path d="M1868.6 999.8 A768.6 768.6 0 0 0 1871.9 1016.1 L1974.6 994.1 A663.6 663.6 0 0 1 1971.7 980.0 Z" fill="url(#g124)"/><path d="M1871.2 1013.0 A768.6 768.6 0 0 0 1874.8 1029.2 L1977.1 1005.4 A663.6 663.6 0 0 1 1974.0 991.3 Z" fill="url(#g125)"/><path d="M1874.1 1026.1 A768.6 768.6 0 0 0 1878.0 1042.2 L1979.9 1016.6 A663.6 663.6 0 0 1 1976.5 1002.7 Z" fill="url(#g126)"/><path d="M1877.2 1039.1 A768.6 768.6 0 0 0 1881.4 1055.2 L1982.8 1027.8 A663.6 663.6 0 0 1 1979.2 1013.9 Z" fill="url(#g127)"/><path d="M1880.6 1052.1 A768.6 768.6 0 0 0 1885.0 1068.1 L1985.9 1039.0 A663.6 663.6 0 0 1 1982.1 1025.1 Z" fill="url(#g127)"/><path d="M1884.1 1065.1 A768.6 768.6 0 0 0 1888.8 1081.0 L1989.2 1050.1 A663.6 663.6 0 0 1 1985.1 1036.3 Z" fill="url(#g128)"/><path d="M1887.9 1077.9 A768.6 768.6 0 0 0 1892.9 1093.8 L1992.7 1061.1 A663.6 663.6 0 0 1 1988.4 1047.4 Z" fill="url(#g128)"/><path d="M1891.9 1090.7 A768.6 768.6 0 0 0 1897.2 1106.5 L1996.4 1072.1 A663.6 663.6 0 0 1 1991.9 1058.5 Z" fill="url(#g129)"/><path d="M1896.1 1103.5 A768.6 768.6 0 0 0 1901.7 1119.1 L2000.3 1083.0 A663.6 663.6 0 0 1 1995.5 1069.5 Z" fill="url(#g129)"/><path d="M1900.6 1116.1 A768.6 768.6 0 0 0 1906.4 1131.7 L2004.4 1093.8 A663.6 663.6 0 0 1 1999.4 1080.4 Z" fill="url(#g130)"/><path d="M1905.3 1128.7 A768.6 768.6 0 0 0 1911.4 1144.2 L2008.7 1104.6 A663.6 663.6 0 0 1 2003.4 1091.2 Z" fill="url(#g130)"/><path d="M1910.2 1141.2 A768.6 768.6 0 0 0 1916.5 1156.5 L2013.1 1115.3 A663.6 663.6 0 0 1 2007.6 1102.0 Z" fill="url(#g131)"/><path d="M1915.3 1153.6 A768.6 768.6 0 0 0 1921.9 1168.8 L2017.8 1125.9 A663.6 663.6 0 0 1 2012.0 1112.7 Z" fill="url(#g132)"/><path d="M1920.6 1165.9 A768.6 768.6 0 0 0 1927.5 1181.0 L2022.6 1136.4 A663.6 663.6 0 0 1 2016.6 1123.4 Z" fill="url(#g132)"/><path d="M1926.1 1178.1 A768.6 768.6 0 0 0 1933.3 1193.1 L2027.6 1146.9 A663.6 663.6 0 0 1 2021.4 1133.9 Z" fill="url(#g133)"/><path d="M1931.9 1190.2 A768.6 768.6 0 0 0 1939.3 1205.1 L2032.8 1157.2 A663.6 663.6 0 0 1 2026.4 1144.4 Z" fill="url(#g133)"/><path d="M1937.8 1202.2 A768.6 768.6 0 0 0 1945.5 1217.0 L2038.1 1167.5 A663.6 663.6 0 0 1 2031.5 1154.8 Z" fill="url(#g134)"/><path d="M1944.0 1214.2 A768.6 768.6 0 0 0 1951.9 1228.8 L2043.7 1177.7 A663.6 663.6 0 0 1 2036.8 1165.0 Z" fill="url(#g134)"/><path d="M1950.4 1226.0 A768.6 768.6 0 0 0 1958.6 1240.4 L2049.4 1187.7 A663.6 663.6 0 0 1 2042.3 1175.2 Z" fill="url(#g135)"/><path d="M1957.0 1237.7 A768.6 768.6 0 0 0 1965.4 1252.0 L2055.3 1197.7 A663.6 663.6 0 0 1 2048.0 1185.3 Z" fill="url(#g135)"/><path d="M1963.7 1249.2 A768.6 768.6 0 0 0 1972.4 1263.4 L2061.4 1207.6 A663.6 663.6 0 0 1 2053.9 1195.3 Z" fill="url(#g135)"/><path d="M1970.7 1260.7 A768.6 768.6 0 0 0 1979.7 1274.7 L2067.6 1217.3 A663.6 663.6 0 0 1 2059.9 1205.2 Z" fill="url(#g135)"/><path d="M1977.9 1272.0 A768.6 768.6 0 0 0 1987.1 1285.9 L2074.0 1227.0 A663.6 663.6 0 0 1 2066.1 1215.0 Z" fill="url(#g136)"/><path d="M1985.3 1283.2 A768.6 768.6 0 0 0 1994.7 1296.9 L2080.6 1236.5 A663.6 663.6 0 0 1 2072.5 1224.7 Z" fill="url(#g136)"/><path d="M1992.9 1294.3 A768.6 768.6 0 0 0 2002.5 1307.8 L2087.4 1245.9 A663.6 663.6 0 0 1 2079.0 1234.2 Z" fill="url(#g136)"/><path d="M2000.6 1305.2 A768.6 768.6 0 0 0 2010.5 1318.6 L2094.3 1255.2 A663.6 663.6 0 0 1 2085.7 1243.7 Z" fill="url(#g136)"/><path d="M2008.6 1316.0 A768.6 768.6 0 0 0 2018.7 1329.2 L2101.3 1264.4 A663.6 663.6 0 0 1 2092.6 1253.0 Z" fill="url(#g137)"/><path d="M2016.7 1326.7 A768.6 768.6 0 0 0 2027.1 1339.7 L2108.6 1273.4 A663.6 663.6 0 0 1 2099.6 1262.2 Z" fill="url(#g137)"/><path d="M2025.1 1337.2 A768.6 768.6 0 0 0 2035.6 1350.0 L2116.0 1282.3 A663.6 663.6 0 0 1 2106.8 1271.3 Z" fill="url(#g137)"/><path d="M2033.6 1347.6 A768.6 768.6 0 0 0 2044.4 1360.2 L2123.5 1291.1 A663.6 663.6 0 0 1 2114.2 1280.2 Z" fill="url(#g137)"/><path d="M2042.3 1357.8 A768.6 768.6 0 0 0 2053.3 1370.2 L2131.2 1299.8 A663.6 663.6 0 0 1 2121.7 1289.0 Z" fill="url(#g137)"/><path d="M2051.1 1367.8 A768.6 768.6 0 0 0 2062.4 1380.1 L2139.0 1308.3 A663.6 663.6 0 0 1 2129.3 1297.7 Z" fill="url(#g137)"/><path d="M2060.2 1377.8 A768.6 768.6 0 0 0 2071.6 1389.8 L2147.0 1316.7 A663.6 663.6 0 0 1 2137.1 1306.3 Z" fill="url(#g138)"/><path d="M2069.4 1387.5 A768.6 768.6 0 0 0 2081.0 1399.4 L2155.2 1324.9 A663.6 663.6 0 0 1 2145.1 1314.7 Z" fill="url(#g138)"/><path d="M2078.8 1397.1 A768.6 768.6 0 0 0 2090.6 1408.8 L2163.4 1333.0 A663.6 663.6 0 0 1 2153.2 1323.0 Z" fill="url(#g138)"/><path d="M2088.3 1406.5 A768.6 768.6 0 0 0 2100.4 1418.0 L2171.9 1341.0 A663.6 663.6 0 0 1 2161.4 1331.1 Z" fill="url(#g138)"/><path d="M2098.0 1415.8 A768.6 768.6 0 0 0 2110.3 1427.0 L2180.4 1348.8 A663.6 663.6 0 0 1 2169.8 1339.1 Z" fill="url(#g139)"/><path d="M2107.9 1424.9 A768.6 768.6 0 0 0 2120.4 1435.9 L2189.1 1356.5 A663.6 663.6 0 0 1 2178.3 1346.9 Z" fill="url(#g139)"/><path d="M2117.9 1433.8 A768.6 768.6 0 0 0 2130.6 1444.6 L2197.9 1364.0 A663.6 663.6 0 0 1 2187.0 1354.6 Z" fill="url(#g139)"/><path d="M2128.1 1442.5 A768.6 768.6 0 0 0 2140.9 1453.1 L2206.9 1371.3 A663.6 663.6 0 0 1 2195.8 1362.2 Z" fill="url(#g139)"/><path d="M2138.4 1451.1 A768.6 768.6 0 0 0 2151.5 1461.4 L2216.0 1378.5 A663.6 663.6 0 0 1 2204.7 1369.6 Z" fill="url(#g139)"/><path d="M2148.9 1459.4 A768.6 768.6 0 0 0 2162.1 1469.5 L2225.2 1385.5 A663.6 663.6 0 0 1 2213.8 1376.8 Z" fill="url(#g140)"/><path d="M2159.6 1467.6 A768.6 768.6 0 0 0 2172.9 1477.5 L2234.5 1392.4 A663.6 663.6 0 0 1 2222.9 1383.9 Z" fill="url(#g140)"/><path d="M2170.3 1475.6 A768.6 768.6 0 0 0 2183.9 1485.3 L2243.9 1399.1 A663.6 663.6 0 0 1 2232.2 1390.8 Z" fill="url(#g140)"/><path d="M2181.2 1483.4 A768.6 768.6 0 0 0 2194.9 1492.8 L2253.5 1405.7 A663.6 663.6 0 0 1 2241.6 1397.5 Z" fill="url(#g140)"/><path d="M2192.3 1491.0 A768.6 768.6 0 0 0 2206.1 1500.2 L2263.2 1412.0 A663.6 663.6 0 0 1 2251.2 1404.1 Z" fill="url(#g140)"/><path d="M2203.4 1498.5 A768.6 768.6 0 0 0 2217.5 1507.4 L2272.9 1418.2 A663.6 663.6 0 0 1 2260.8 1410.5 Z" fill="url(#g141)"/><path d="M2214.7 1505.7 A768.6 768.6 0 0 0 2228.9 1514.4 L2282.8 1424.3 A663.6 663.6 0 0 1 2270.6 1416.8 Z" fill="url(#g141)"/><path d="M2226.2 1512.7 A768.6 768.6 0 0 0 2240.5 1521.2 L2292.8 1430.1 A663.6 663.6 0 0 1 2280.4 1422.8 Z" fill="url(#g141)"/><path d="M2237.7 1519.6 A768.6 768.6 0 0 0 2252.2 1527.8 L2302.9 1435.8 A663.6 663.6 0 0 1 2290.4 1428.7 Z" fill="url(#g141)"/><path d="M2249.4 1526.2 A768.6 768.6 0 0 0 2264.0 1534.1 L2313.1 1441.3 A663.6 663.6 0 0 1 2300.5 1434.5 Z" fill="url(#g141)"/><path d="M2261.1 1532.6 A768.6 768.6 0 0 0 2275.9 1540.3 L2323.4 1446.6 A663.6 663.6 0 0 1 2310.6 1440.0 Z" fill="url(#g141)"/><path d="M2273.0 1538.8 A768.6 768.6 0 0 0 2287.9 1546.3 L2333.8 1451.8 A663.6 663.6 0 0 1 2320.9 1445.4 Z" fill="url(#g141)"/><path d="M2285.0 1544.9 A768.6 768.6 0 0 0 2300.0 1552.0 L2344.2 1456.7 A663.6 663.6 0 0 1 2331.3 1450.6 Z" fill="url(#g141)"/><path d="M2297.1 1550.7 A768.6 768.6 0 0 0 2312.2 1557.6 L2354.8 1461.5 A663.6 663.6 0 0 1 2341.7 1455.6 Z" fill="url(#g141)"/><path d="M2309.3 1556.2 A768.6 768.6 0 0 0 2324.6 1562.9 L2365.4 1466.1 A663.6 663.6 0 0 1 2352.2 1460.4 Z" fill="url(#g141)"/><path d="M2321.6 1561.6 A768.6 768.6 0 0 0 2337.0 1568.0 L2376.1 1470.5 A663.6 663.6 0 0 1 2362.8 1465.0 Z" fill="url(#g141)"/><path d="M2334.0 1566.8 A768.6 768.6 0 0 0 2349.5 1572.9 L2386.9 1474.7 A663.6 663.6 0 0 1 2373.5 1469.5 Z" fill="url(#g141)"/><path d="M2346.5 1571.7 A768.6 768.6 0 0 0 2362.0 1577.5 L2397.7 1478.8 A663.6 663.6 0 0 1 2384.3 1473.8 Z" fill="url(#g141)"/><path d="M2359.0 1576.4 A768.6 768.6 0 0 0 2374.7 1582.0 L2408.7 1482.6 A663.6 663.6 0 0 1 2395.1 1477.8 Z" fill="url(#g141)"/><path d="M2371.6 1581.0 A768.6 768.6 0 0 0 2387.4 1586.2 L2419.7 1486.3 A663.6 663.6 0 0 1 2406.0 1481.7 Z" fill="url(#g141)"/><path d="M2384.4 1585.2 A768.6 768.6 0 0 0 2400.2 1590.2 L2430.7 1489.7 A663.6 663.6 0 0 1 2417.0 1485.4 Z" fill="url(#g141)"/><path d="M2397.1 1589.3 A768.6 768.6 0 0 0 2413.1 1594.0 L2441.8 1493.0 A663.6 663.6 0 0 1 2428.1 1488.9 Z" fill="url(#g141)"/><path d="M2410.0 1593.1 A768.6 768.6 0 0 0 2426.0 1597.6 L2453.0 1496.1 A663.6 663.6 0 0 1 2439.2 1492.2 Z" fill="url(#g141)"/><path d="M2422.9 1596.7 A768.6 768.6 0 0 0 2439.0 1600.9 L2464.2 1498.9 A663.6 663.6 0 0 1 2450.3 1495.4 Z" fill="url(#g141)"/><path d="M2435.9 1600.1 A768.6 768.6 0 0 0 2452.1 1604.0 L2475.5 1501.6 A663.6 663.6 0 0 1 2461.5 1498.3 Z" fill="url(#g141)"/><path d="M2448.9 1603.3 A768.6 768.6 0 0 0 2465.2 1606.9 L2486.8 1504.1 A663.6 663.6 0 0 1 2472.8 1501.0 Z" fill="url(#g141)"/><path d="M2462.0 1606.2 A768.6 768.6 0 0 0 2478.3 1609.5 L2498.1 1506.4 A663.6 663.6 0 0 1 2484.1 1503.5 Z" fill="url(#g141)"/><path d="M2475.2 1608.9 A768.6 768.6 0 0 0 2491.5 1612.0 L2509.5 1508.5 A663.6 663.6 0 0 1 2495.4 1505.9 Z" fill="url(#g141)"/><path d="M2488.3 1611.4 A768.6 768.6 0 0 0 2504.8 1614.1 L2521.0 1510.4 A663.6 663.6 0 0 1 2506.8 1508.0 Z" fill="url(#g141)"/><path d="M2501.6 1613.6 A768.6 768.6 0 0 0 2518.0 1616.1 L2532.4 1512.1 A663.6 663.6 0 0 1 2518.2 1509.9 Z" fill="url(#g141)"/><path d="M2514.8 1615.6 A768.6 768.6 0 0 0 2531.3 1617.8 L2543.9 1513.5 A663.6 663.6 0 0 1 2529.7 1511.7 Z" fill="url(#g141)"/><path d="M2528.1 1617.4 A768.6 768.6 0 0 0 2544.7 1619.3 L2555.4 1514.8 A663.6 663.6 0 0 1 2541.1 1513.2 Z" fill="url(#g141)"/><path d="M2541.5 1619.0 A768.6 768.6 0 0 0 2558.0 1620.6 L2566.9 1515.9 A663.6 663.6 0 0 1 2552.7 1514.5 Z" fill="url(#g141)"/><path d="M2554.8 1620.3 A768.6 768.6 0 0 0 2571.4 1621.6 L2578.5 1516.8 A663.6 663.6 0 0 1 2564.2 1515.7 Z" fill="url(#g141)"/><path d="M2568.2 1621.4 A768.6 768.6 0 0 0 2584.8 1622.4 L2590.1 1517.5 A663.6 663.6 0 0 1 2575.7 1516.6 Z" fill="url(#g141)"/><path d="M2581.6 1622.2 A768.6 768.6 0 0 0 2598.2 1622.9 L2601.6 1518.0 A663.6 663.6 0 0 1 2587.3 1517.3 Z" fill="url(#g141)"/><path d="M2595.0 1622.8 A768.6 768.6 0 0 0 2611.6 1623.3 L2613.2 1518.2 A663.6 663.6 0 0 1 2598.9 1517.9 Z" fill="url(#g141)"/><path d="M2608.4 1623.2 A768.6 768.6 0 0 0 2625.0 1623.4 L2624.8 1518.3 A663.6 663.6 0 0 1 2610.4 1518.2 Z" fill="url(#g141)"/><path d="M2621.8 1623.4 A768.6 768.6 0 0 0 2638.4 1623.2 L2636.4 1518.2 A663.6 663.6 0 0 1 2622.0 1518.3 Z" fill="url(#g141)"/><path d="M2635.2 1623.3 A768.6 768.6 0 0 0 2651.8 1622.8 L2647.9 1517.9 A663.6 663.6 0 0 1 2633.6 1518.2 Z" fill="url(#g141)"/><path d="M2648.6 1622.9 A768.6 768.6 0 0 0 2665.2 1622.2 L2659.5 1517.3 A663.6 663.6 0 0 1 2645.2 1518.0 Z" fill="url(#g142)"/><path d="M2662.0 1622.4 A768.6 768.6 0 0 0 2678.6 1621.4 L2671.1 1516.6 A663.6 663.6 0 0 1 2656.7 1517.5 Z" fill="url(#g142)"/><path d="M2675.4 1621.6 A768.6 768.6 0 0 0 2692.0 1620.3 L2682.6 1515.7 A663.6 663.6 0 0 1 2668.3 1516.8 Z" fill="url(#g143)"/><path d="M2688.8 1620.6 A768.6 768.6 0 0 0 2705.3 1619.0 L2694.1 1514.5 A663.6 663.6 0 0 1 2679.9 1515.9 Z" fill="url(#g144)"/><path d="M2702.1 1619.3 A768.6 768.6 0 0 0 2718.7 1617.4 L2705.7 1513.2 A663.6 663.6 0 0 1 2691.4 1514.8 Z" fill="url(#g144)"/><path d="M2715.5 1617.8 A768.6 768.6 0 0 0 2732.0 1615.6 L2717.1 1511.7 A663.6 663.6 0 0 1 2702.9 1513.5 Z" fill="url(#g144)"/><path d="M2728.8 1616.1 A768.6 768.6 0 0 0 2738.6 1614.7 L2722.9 1510.8 A663.6 663.6 0 0 1 2714.4 1512.1 Z" fill="url(#g145)"/><path d="M2735.4 1615.1 A768.6 768.6 0 0 0 2745.2 1613.6 L2728.6 1509.9 A663.6 663.6 0 0 1 2720.1 1511.2 Z" fill="url(#g145)"/><path d="M2742.0 1614.1 A768.6 768.6 0 0 0 2751.8 1612.5 L2734.3 1509.0 A663.6 663.6 0 0 1 2725.8 1510.4 Z" fill="url(#g145)"/><path d="M2748.7 1613.1 A768.6 768.6 0 0 0 2758.5 1611.4 L2740.0 1508.0 A663.6 663.6 0 0 1 2731.6 1509.5 Z" fill="url(#g145)"/><path d="M2755.3 1612.0 A768.6 768.6 0 0 0 2765.1 1610.2 L2745.7 1507.0 A663.6 663.6 0 0 1 2737.3 1508.5 Z" fill="url(#g145)"/><path d="M2761.9 1610.8 A768.6 768.6 0 0 0 2771.6 1608.9 L2751.4 1505.9 A663.6 663.6 0 0 1 2743.0 1507.5 Z" fill="url(#g146)"/><path d="M2768.5 1609.5 A768.6 768.6 0 0 0 2778.2 1607.6 L2757.1 1504.7 A663.6 663.6 0 0 1 2748.7 1506.4 Z" fill="url(#g146)"/><path d="M2775.1 1608.2 A768.6 768.6 0 0 0 2784.8 1606.2 L2762.7 1503.5 A663.6 663.6 0 0 1 2754.3 1505.3 Z" fill="url(#g147)"/><path d="M2781.6 1606.9 A768.6 768.6 0 0 0 2791.3 1604.8 L2768.4 1502.3 A663.6 663.6 0 0 1 2760.0 1504.1 Z" fill="url(#g147)"/><path d="M2788.2 1605.5 A768.6 768.6 0 0 0 2797.9 1603.3 L2774.0 1501.0 A663.6 663.6 0 0 1 2765.7 1502.9 Z" fill="url(#g147)"/><path d="M2794.7 1604.0 A768.6 768.6 0 0 0 2804.4 1601.7 L2779.7 1499.7 A663.6 663.6 0 0 1 2771.3 1501.6 Z" fill="url(#g147)"/><path d="M2801.3 1602.5 A768.6 768.6 0 0 0 2810.9 1600.1 L2785.3 1498.3 A663.6 663.6 0 0 1 2777.0 1500.3 Z" fill="url(#g148)"/><path d="M2807.8 1600.9 A768.6 768.6 0 0 0 2817.4 1598.5 L2790.9 1496.8 A663.6 663.6 0 0 1 2782.6 1498.9 Z" fill="url(#g149)"/><path d="M2814.3 1599.3 A768.6 768.6 0 0 0 2823.9 1596.7 L2796.5 1495.4 A663.6 663.6 0 0 1 2788.2 1497.5 Z" fill="url(#g149)"/><path d="M2820.8 1597.6 A768.6 768.6 0 0 0 2830.4 1595.0 L2802.1 1493.8 A663.6 663.6 0 0 1 2793.8 1496.1 Z" fill="url(#g150)"/><path d="M2827.3 1595.8 A768.6 768.6 0 0 0 2836.8 1593.1 L2807.6 1492.2 A663.6 663.6 0 0 1 2799.4 1494.6 Z" fill="url(#g151)"/><path d="M2833.7 1594.0 A768.6 768.6 0 0 0 2843.2 1591.2 L2813.2 1490.6 A663.6 663.6 0 0 1 2805.0 1493.0 Z" fill="url(#g152)"/><path d="M2840.2 1592.2 A768.6 768.6 0 0 0 2849.7 1589.3 L2818.7 1488.9 A663.6 663.6 0 0 1 2810.5 1491.4 Z" fill="url(#g152)"/><path d="M2846.6 1590.2 A768.6 768.6 0 0 0 2856.1 1587.3 L2824.3 1487.2 A663.6 663.6 0 0 1 2816.1 1489.7 Z" fill="url(#g153)"/><path d="M2853.0 1588.3 A768.6 768.6 0 0 0 2862.4 1585.2 L2829.8 1485.4 A663.6 663.6 0 0 1 2821.6 1488.0 Z" fill="url(#g154)"/><path d="M2859.4 1586.2 A768.6 768.6 0 0 0 2868.8 1583.1 L2835.3 1483.6 A663.6 663.6 0 0 1 2827.1 1486.3 Z" fill="url(#g154)"/><path d="M2865.8 1584.1 A768.6 768.6 0 0 0 2875.2 1581.0 L2840.8 1481.7 A663.6 663.6 0 0 1 2832.6 1484.5 Z" fill="url(#g155)"/><path d="M2872.1 1582.0 A768.6 768.6 0 0 0 2881.5 1578.7 L2846.2 1479.8 A663.6 663.6 0 0 1 2838.1 1482.6 Z" fill="url(#g156)"/><path d="M2878.5 1579.8 A768.6 768.6 0 0 0 2887.8 1576.4 L2851.7 1477.8 A663.6 663.6 0 0 1 2843.6 1480.7 Z" fill="url(#g156)"/><path d="M2884.8 1577.5 A768.6 768.6 0 0 0 2894.1 1574.1 L2857.1 1475.8 A663.6 663.6 0 0 1 2849.1 1478.8 Z" fill="url(#g157)"/><path d="M2891.1 1575.2 A768.6 768.6 0 0 0 2900.3 1571.7 L2862.5 1473.8 A663.6 663.6 0 0 1 2854.5 1476.8 Z" fill="url(#g158)"/><path d="M2897.3 1572.9 A768.6 768.6 0 0 0 2906.6 1569.3 L2867.9 1471.6 A663.6 663.6 0 0 1 2859.9 1474.7 Z" fill="url(#g159)"/><path d="M2903.6 1570.5 A768.6 768.6 0 0 0 2912.8 1566.8 L2873.3 1469.5 A663.6 663.6 0 0 1 2865.3 1472.7 Z" fill="url(#g159)"/><path d="M2909.8 1568.0 A768.6 768.6 0 0 0 2919.0 1564.2 L2878.6 1467.3 A663.6 663.6 0 0 1 2870.7 1470.5 Z" fill="url(#g160)"/><path d="M2916.0 1565.5 A768.6 768.6 0 0 0 2925.2 1561.6 L2884.0 1465.0 A663.6 663.6 0 0 1 2876.1 1468.3 Z" fill="url(#g161)"/><path d="M2922.2 1562.9 A768.6 768.6 0 0 0 2931.4 1559.0 L2889.3 1462.7 A663.6 663.6 0 0 1 2881.4 1466.1 Z" fill="url(#g162)"/><path d="M2928.4 1560.2 A768.6 768.6 0 0 0 2937.5 1556.2 L2894.6 1460.4 A663.6 663.6 0 0 1 2886.7 1463.8 Z" fill="url(#g163)"/><path d="M2934.6 1557.6 A768.6 768.6 0 0 0 2943.6 1553.5 L2899.8 1458.0 A663.6 663.6 0 0 1 2892.0 1461.5 Z" fill="url(#g164)"/><path d="M2940.7 1554.8 A768.6 768.6 0 0 0 2949.7 1550.7 L2905.1 1455.6 A663.6 663.6 0 0 1 2897.3 1459.2 Z" fill="url(#g165)"/><path d="M2946.8 1552.0 A768.6 768.6 0 0 0 2955.7 1547.8 L2910.3 1453.1 A663.6 663.6 0 0 1 2902.6 1456.7 Z" fill="url(#g166)"/><path d="M2952.8 1549.2 A768.6 768.6 0 0 0 2961.8 1544.9 L2915.5 1450.6 A663.6 663.6 0 0 1 2907.8 1454.3 Z" fill="url(#g167)"/><path d="M2958.9 1546.3 A768.6 768.6 0 0 0 2967.8 1541.9 L2920.7 1448.0 A663.6 663.6 0 0 1 2913.0 1451.8 Z" fill="url(#g168)"/><path d="M2964.9 1543.3 A768.6 768.6 0 0 0 2973.8 1538.8 L2925.9 1445.4 A663.6 663.6 0 0 1 2918.2 1449.2 Z" fill="url(#g169)"/><path d="M2970.9 1540.3 A768.6 768.6 0 0 0 2979.7 1535.8 L2931.0 1442.7 A663.6 663.6 0 0 1 2923.4 1446.6 Z" fill="url(#g170)"/><path d="M2976.9 1537.3 A768.6 768.6 0 0 0 2985.7 1532.6 L2936.2 1440.0 A663.6 663.6 0 0 1 2928.6 1444.0 Z" fill="url(#g171)"/><path d="M2982.8 1534.1 A768.6 768.6 0 0 0 2991.6 1529.4 L2941.3 1437.2 A663.6 663.6 0 0 1 2933.7 1441.3 Z" fill="url(#g172)"/><path d="M2988.7 1531.0 A768.6 768.6 0 0 0 2997.4 1526.2 L2946.3 1434.5 A663.6 663.6 0 0 1 2938.8 1438.6 Z" fill="url(#g173)"/><path d="M2994.6 1527.8 A768.6 768.6 0 0 0 3003.3 1522.9 L2951.4 1431.6 A663.6 663.6 0 0 1 2943.9 1435.8 Z" fill="url(#g174)"/><path d="M3000.5 1524.5 A768.6 768.6 0 0 0 3009.1 1519.6 L2956.4 1428.7 A663.6 663.6 0 0 1 2949.0 1433.0 Z" fill="url(#g175)"/><path d="M3006.3 1521.2 A768.6 768.6 0 0 0 3014.9 1516.2 L2961.4 1425.8 A663.6 663.6 0 0 1 2954.0 1430.1 Z" fill="url(#g176)"/><path d="M3012.1 1517.8 A768.6 768.6 0 0 0 3020.6 1512.7 L2966.4 1422.8 A663.6 663.6 0 0 1 2959.0 1427.2 Z" fill="url(#g177)"/><path d="M3017.9 1514.4 A768.6 768.6 0 0 0 3026.4 1509.2 L2971.3 1419.8 A663.6 663.6 0 0 1 2964.0 1424.3 Z" fill="url(#g178)"/><path d="M3023.6 1510.9 A768.6 768.6 0 0 0 3032.1 1505.7 L2976.2 1416.8 A663.6 663.6 0 0 1 2968.9 1421.3 Z" fill="url(#g179)"/><path d="M3029.3 1507.4 A768.6 768.6 0 0 0 3033.2 1505.0 L2977.2 1416.1 A663.6 663.6 0 0 1 2973.9 1418.2 Z" fill="url(#g179)"/><path d="M1854.8 807.0 L1854.8 854.7 A768.6 768.6 0 0 0 3031.8 1505.8 L2976.0 1416.9 A663.6 663.6 0 0 1 1959.8 854.7 L1959.8 807.0" fill="none" stroke="#1a1a2a" stroke-width="2"/><path d="M1337 326 V807.0 H1854.8 M1959.8 807.0 H2676.4 V326" fill="none" stroke="#30303a" stroke-width="2"/><path d="M1431.5 1687 V1680" stroke="#777" stroke-width="1.8"/><path d="M1431.5 325 V332" stroke="#101030" stroke-width="1.8"/><path d="M1670.2 1687 V1680" stroke="#777" stroke-width="1.8"/><path d="M1670.2 325 V332" stroke="#101030" stroke-width="1.8"/><path d="M1908.9 1687 V1680" stroke="#777" stroke-width="1.8"/><path d="M1908.9 325 V332" stroke="#101030" stroke-width="1.8"/><path d="M2147.6 1687 V1680" stroke="#777" stroke-width="1.8"/><path d="M2147.6 325 V332" stroke="#101030" stroke-width="1.8"/><path d="M2386.3 1687 V1680" stroke="#777" stroke-width="1.8"/><path d="M2386.3 325 V332" stroke="#101030" stroke-width="1.8"/><path d="M2625.0 1687 V1680" stroke="#777" stroke-width="1.8"/><path d="M2625.0 325 V332" stroke="#101030" stroke-width="1.8"/><path d="M2863.7 1687 V1680" stroke="#777" stroke-width="1.8"/><path d="M2863.7 325 V332" stroke="#777" stroke-width="1.8"/><path d="M3102.4 1687 V1680" stroke="#777" stroke-width="1.8"/><path d="M3102.4 325 V332" stroke="#777" stroke-width="1.8"/><path d="M3341.1 1687 V1680" stroke="#777" stroke-width="1.8"/><path d="M3341.1 325 V332" stroke="#777" stroke-width="1.8"/><path d="M1337 1665.0 H1344" stroke="#777" stroke-width="1.8"/><path d="M3431 1665.0 H3423" stroke="#777" stroke-width="1.8"/><path d="M1337 1569.8 H1344" stroke="#777" stroke-width="1.8"/><path d="M3431 1569.8 H3423" stroke="#777" stroke-width="1.8"/><path d="M1337 1474.6 H1344" stroke="#777" stroke-width="1.8"/><path d="M3431 1474.6 H3423" stroke="#777" stroke-width="1.8"/><path d="M1337 1379.3 H1344" stroke="#777" stroke-width="1.8"/><path d="M3431 1379.3 H3423" stroke="#777" stroke-width="1.8"/><path d="M1337 1284.1 H1344" stroke="#777" stroke-width="1.8"/><path d="M3431 1284.1 H3423" stroke="#777" stroke-width="1.8"/><path d="M1337 1188.9 H1344" stroke="#777" stroke-width="1.8"/><path d="M3431 1188.9 H3423" stroke="#777" stroke-width="1.8"/><path d="M1337 1093.4 H1344" stroke="#777" stroke-width="1.8"/><path d="M3431 1093.4 H3423" stroke="#777" stroke-width="1.8"/><path d="M1337 998.0 H1344" stroke="#777" stroke-width="1.8"/><path d="M3431 998.0 H3423" stroke="#777" stroke-width="1.8"/><path d="M1337 902.5 H1344" stroke="#777" stroke-width="1.8"/><path d="M3431 902.5 H3423" stroke="#777" stroke-width="1.8"/><path d="M1337 807.0 H1344" stroke="#101030" stroke-width="1.8"/><path d="M3431 807.0 H3423" stroke="#777" stroke-width="1.8"/><path d="M1337 711.0 H1344" stroke="#101030" stroke-width="1.8"/><path d="M3431 711.0 H3423" stroke="#777" stroke-width="1.8"/><path d="M1337 615.0 H1344" stroke="#101030" stroke-width="1.8"/><path d="M3431 615.0 H3423" stroke="#777" stroke-width="1.8"/><path d="M1337 519.0 H1344" stroke="#101030" stroke-width="1.8"/><path d="M3431 519.0 H3423" stroke="#777" stroke-width="1.8"/><path d="M1337 422.9 H1344" stroke="#101030" stroke-width="1.8"/><path d="M3431 422.9 H3423" stroke="#777" stroke-width="1.8"/><rect x="3460" y="382.6" width="23" height="1294.4" fill="url(#cbar)" stroke="#888" stroke-width="1"/><path d="M3460 1676.6 H3464 M3479 1676.6 H3483" stroke="#111" stroke-width="1.5"/><path d="M3460 1515.6 H3464 M3479 1515.6 H3483" stroke="#111" stroke-width="1.5"/><path d="M3460 1354.6 H3464 M3479 1354.6 H3483" stroke="#111" stroke-width="1.5"/><path d="M3460 1193.6 H3464 M3479 1193.6 H3483" stroke="#111" stroke-width="1.5"/><path d="M3460 1032.6 H3464 M3479 1032.6 H3483" stroke="#111" stroke-width="1.5"/><path d="M3460 871.6 H3464 M3479 871.6 H3483" stroke="#111" stroke-width="1.5"/><path d="M3460 710.6 H3464 M3479 710.6 H3483" stroke="#111" stroke-width="1.5"/><path d="M3460 549.6 H3464 M3479 549.6 H3483" stroke="#111" stroke-width="1.5"/><path d="M3460 388.6 H3464 M3479 388.6 H3483" stroke="#111" stroke-width="1.5"/></svg>
<div class="t" style="left:1370.5px;width:120px;text-align:center;top:1700.5px;font-size:23px;line-height:23px;color:#000;letter-spacing:0.7px;">-10</div>
<div class="t" style="left:1609.2px;width:120px;text-align:center;top:1700.5px;font-size:23px;line-height:23px;color:#000;letter-spacing:0.7px;">-5</div>
<div class="t" style="left:1847.9px;width:120px;text-align:center;top:1700.5px;font-size:23px;line-height:23px;color:#000;letter-spacing:0.7px;">0</div>
<div class="t" style="left:2086.6px;width:120px;text-align:center;top:1700.5px;font-size:23px;line-height:23px;color:#000;letter-spacing:0.7px;">5</div>
<div class="t" style="left:2325.3px;width:120px;text-align:center;top:1700.5px;font-size:23px;line-height:23px;color:#000;letter-spacing:0.7px;">10</div>
<div class="t" style="left:2564.0px;width:120px;text-align:center;top:1700.5px;font-size:23px;line-height:23px;color:#000;letter-spacing:0.7px;">15</div>
<div class="t" style="left:2802.7px;width:120px;text-align:center;top:1700.5px;font-size:23px;line-height:23px;color:#000;letter-spacing:0.7px;">20</div>
<div class="t" style="left:3041.4px;width:120px;text-align:center;top:1700.5px;font-size:23px;line-height:23px;color:#000;letter-spacing:0.7px;">25</div>
<div class="t" style="left:3280.1px;width:120px;text-align:center;top:1700.5px;font-size:23px;line-height:23px;color:#000;letter-spacing:0.7px;">30</div>
<div class="t" style="left:3392px;top:1705.5px;font-size:19px;line-height:19px;color:#000;letter-spacing:3px;">mm</div>
<div class="t" style="left:1228px;width:100px;text-align:right;top:1653.5px;font-size:23px;line-height:23px;color:#000;letter-spacing:0.7px;">-18</div>
<div class="t" style="left:1228px;width:100px;text-align:right;top:1558.3px;font-size:23px;line-height:23px;color:#000;letter-spacing:0.7px;">-16</div>
<div class="t" style="left:1228px;width:100px;text-align:right;top:1463.1px;font-size:23px;line-height:23px;color:#000;letter-spacing:0.7px;">-14</div>
<div class="t" style="left:1228px;width:100px;text-align:right;top:1367.8px;font-size:23px;line-height:23px;color:#000;letter-spacing:0.7px;">-12</div>
<div class="t" style="left:1228px;width:100px;text-align:right;top:1272.6px;font-size:23px;line-height:23px;color:#000;letter-spacing:0.7px;">-10</div>
<div class="t" style="left:1228px;width:100px;text-align:right;top:1177.4px;font-size:23px;line-height:23px;color:#000;letter-spacing:0.7px;">-8</div>
<div class="t" style="left:1228px;width:100px;text-align:right;top:1081.9px;font-size:23px;line-height:23px;color:#000;letter-spacing:0.7px;">-6</div>
<div class="t" style="left:1228px;width:100px;text-align:right;top:986.5px;font-size:23px;line-height:23px;color:#000;letter-spacing:0.7px;">-4</div>
<div class="t" style="left:1228px;width:100px;text-align:right;top:891.0px;font-size:23px;line-height:23px;color:#000;letter-spacing:0.7px;">-2</div>
<div class="t" style="left:1228px;width:100px;text-align:right;top:795.5px;font-size:23px;line-height:23px;color:#000;letter-spacing:0.7px;">0</div>
<div class="t" style="left:1228px;width:100px;text-align:right;top:699.5px;font-size:23px;line-height:23px;color:#000;letter-spacing:0.7px;">2</div>
<div class="t" style="left:1228px;width:100px;text-align:right;top:603.5px;font-size:23px;line-height:23px;color:#000;letter-spacing:0.7px;">4</div>
<div class="t" style="left:1228px;width:100px;text-align:right;top:507.5px;font-size:23px;line-height:23px;color:#000;letter-spacing:0.7px;">6</div>
<div class="t" style="left:1228px;width:100px;text-align:right;top:411.4px;font-size:23px;line-height:23px;color:#000;letter-spacing:0.7px;">8</div>
<div class="t" style="left:1259px;top:322.5px;font-size:19px;line-height:19px;color:#000;letter-spacing:3px;">mm</div>
<div class="t" style="left:3496px;top:1667.1px;font-size:23px;line-height:23px;color:#000;">0</div>
<div class="t" style="left:3496px;top:1506.1px;font-size:23px;line-height:23px;color:#000;">1</div>
<div class="t" style="left:3496px;top:1345.1px;font-size:23px;line-height:23px;color:#000;">2</div>
<div class="t" style="left:3496px;top:1184.1px;font-size:23px;line-height:23px;color:#000;">3</div>
<div class="t" style="left:3496px;top:1023.1px;font-size:23px;line-height:23px;color:#000;">4</div>
<div class="t" style="left:3496px;top:862.1px;font-size:23px;line-height:23px;color:#000;">5</div>
<div class="t" style="left:3496px;top:701.1px;font-size:23px;line-height:23px;color:#000;">6</div>
<div class="t" style="left:3496px;top:540.1px;font-size:23px;line-height:23px;color:#000;">7</div>
<div class="t" style="left:3496px;top:379.1px;font-size:23px;line-height:23px;color:#000;">8</div>
<div class="t" style="left:1274px;top:291.0px;font-size:23px;line-height:23px;color:#000;letter-spacing:1.5px;">Time=10 s</div>
<div class="t" style="left:2190px;top:292.0px;font-size:23px;line-height:23px;color:#000;letter-spacing:1.25px;">Surface: Velocity magnitude (m/s)</div>
<svg class="a" style="left:3536px;top:274px" width="40" height="36" viewBox="0 0 40 36"><defs><linearGradient id="ico1" x1="0" y1="0" x2="1" y2="0"><stop offset="0" stop-color="#3a70c8"/><stop offset="0.25" stop-color="#f4e04a"/><stop offset="0.55" stop-color="#5aa8e0"/><stop offset="1" stop-color="#102a90"/></linearGradient></defs><rect x="3" y="3" width="34" height="30" rx="9" fill="#eceef2"/><rect x="10" y="10" width="20" height="16" fill="url(#ico1)"/></svg>
<div class="a" style="left:1243px;top:1743px;width:2341px;height:103px;background:#f8f9fd;border:1px solid #a3a3a3;border-bottom:none;border-radius:12px 12px 0 0;box-sizing:border-box;"></div>
<div class="a" style="left:1243px;top:1755px;width:1.5px;height:91px;background:#a3a3a3;"></div>
<div class="a" style="left:3582px;top:1755px;width:1.5px;height:91px;background:#a3a3a3;"></div>
<svg class="a" style="left:1400px;top:1743px" width="340" height="48" viewBox="0 0 340 48"><path d="M20 1 C34 1 40 4 54 18 C66 32 74 46 92 46 L340 46" fill="none" stroke="#a3a3a3" stroke-width="1.6"/><path d="M211 1 C218 1 222 6 222 14 V46 M307 1 C314 1 318 6 318 14 V46" fill="none" stroke="#a3a3a3" stroke-width="1.6"/></svg>
<div class="a" style="left:1738px;top:1788.2px;width:1845px;height:1.6px;background:#a3a3a3;"></div>
<svg class="a" style="left:1250px;top:1754px" width="32" height="22" viewBox="0 0 32 22"><rect x="1.2" y="1.2" width="29.6" height="19.6" fill="#fff" stroke="#4a86c8" stroke-width="2.4"/><path d="M2 2 L16 13 L30 2 M2 20 L12 10 M30 20 L20 10" fill="none" stroke="#4a86c8" stroke-width="1.5"/></svg>
<div class="t" style="left:1291px;top:1756.0px;font-size:23px;line-height:23px;">Messages</div>
<svg class="a" style="left:1411px;top:1755px" width="22" height="22" viewBox="0 0 22 22"><path d="M4 1 L11 7 L18 1 L21 4 L15 11 L21 18 L18 21 L11 15 L4 21 L1 18 L7 11 L1 4 Z" fill="#fff" stroke="#111" stroke-width="2"/></svg>
<svg class="a" style="left:1482px;top:1759px" width="33" height="14" viewBox="0 0 33 14"><rect x="1" y="1" width="31" height="12" fill="#e0e4e8" stroke="#4a86c8" stroke-width="2"/><rect x="4" y="3.5" width="2" height="7" fill="#5aa040"/><rect x="7" y="3.5" width="2" height="7" fill="#5aa040"/><rect x="10" y="3.5" width="2" height="7" fill="#5aa040"/><rect x="13" y="3.5" width="2" height="7" fill="#5aa040"/><rect x="16" y="3.5" width="2" height="7" fill="#5aa040"/></svg>
<div class="t" style="left:1523px;top:1756.0px;font-size:23px;line-height:23px;">Progress</div>
<svg class="a" style="left:1632px;top:1752px" width="33" height="26" viewBox="0 0 33 26"><rect x="1.2" y="1.2" width="30.6" height="23.6" fill="#fff" stroke="#4a86c8" stroke-width="2.4"/><rect x="7" y="6" width="4" height="2" fill="#4a86c8"/><rect x="7" y="11" width="4" height="2" fill="#4a86c8"/><rect x="7" y="16" width="4" height="2" fill="#4a86c8"/><rect x="14" y="6" width="4" height="2" fill="#4a86c8"/><rect x="14" y="11" width="4" height="2" fill="#4a86c8"/><rect x="14" y="16" width="4" height="2" fill="#4a86c8"/><rect x="21" y="6" width="4" height="2" fill="#4a86c8"/><rect x="21" y="11" width="4" height="2" fill="#4a86c8"/><rect x="21" y="16" width="4" height="2" fill="#4a86c8"/></svg>
<div class="t" style="left:1673px;top:1756.0px;font-size:23px;line-height:23px;">Log</div>
<div class="a" style="left:3496px;top:1754px;width:20px;height:7.5px;border:1.8px solid #555;box-sizing:border-box;"></div>
<svg class="a" style="left:3538px;top:1754px" width="22" height="22" viewBox="0 0 22 22"><rect x="1" y="1" width="20" height="19" fill="none" stroke="#555" stroke-width="1.8"/><path d="M1 4.5 H21" stroke="#555" stroke-width="1.8"/></svg>
<svg class="a" style="left:1257px;top:1798px" width="28" height="36" viewBox="0 0 28 36"><path d="M4 2 L11 15" stroke="#777" stroke-width="3"/><path d="M8 14 L14 12 L25 28 L19 33 L11 31 Z" fill="#eab060"/><path d="M12 16 L19 31" stroke="#f6d8a0" stroke-width="1.5"/></svg>
<div class="a" style="left:1251px;top:1840px;width:2327px;height:2px;background:#d6d6d9;"></div>
</body></html>
